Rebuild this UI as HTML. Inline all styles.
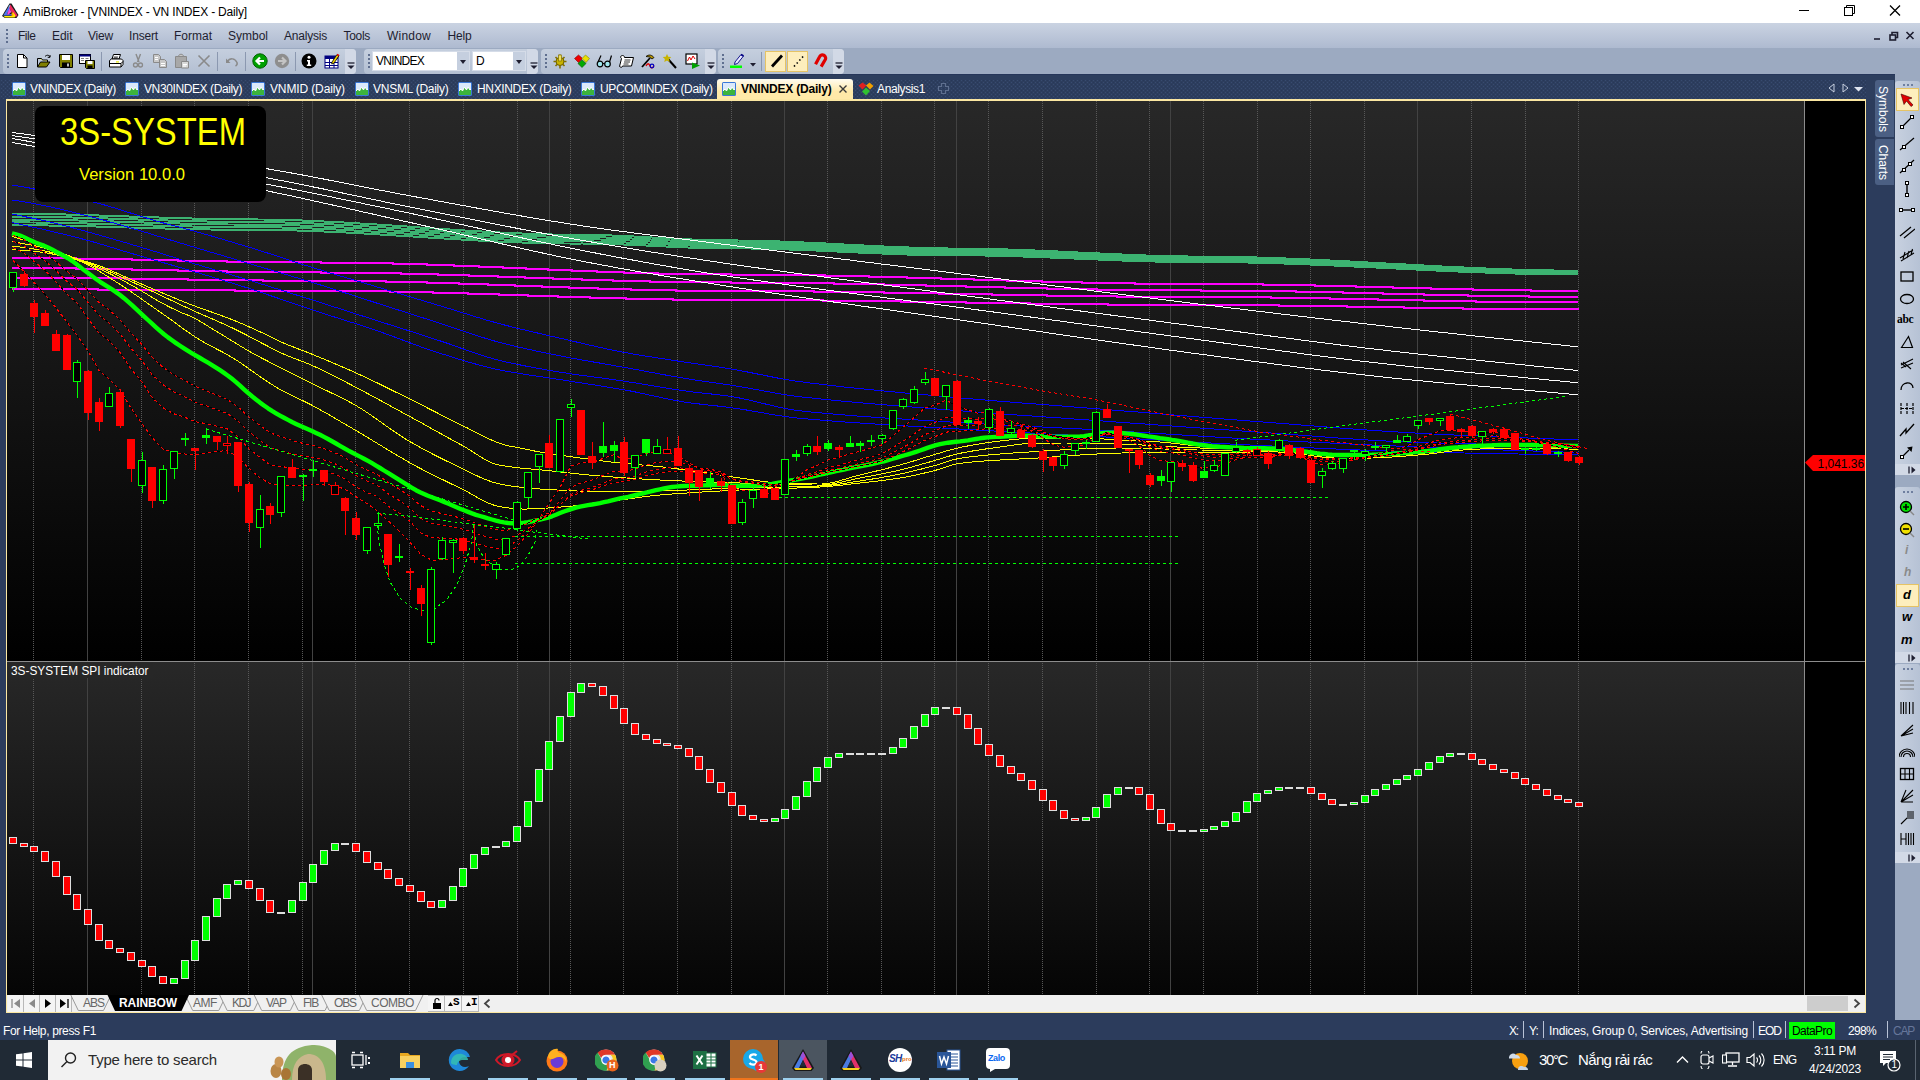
<!DOCTYPE html>
<html><head><meta charset="utf-8"><title>AmiBroker - [VNINDEX - VN INDEX - Daily]</title>
<style>
html,body{margin:0;padding:0}
body{width:1920px;height:1080px;overflow:hidden;position:relative;background:#2c3c5c;font-family:"Liberation Sans",sans-serif;font-size:12px;color:#000}
div,span,svg{position:absolute;box-sizing:border-box;white-space:nowrap}
#title{left:0;top:0;width:1920px;height:23px;background:#fff}
#menu{left:0;top:23px;width:1920px;height:25px;background:linear-gradient(#cad3e2,#aebad0)}
#menu span{color:#1e1e30}
#tbrow{left:0;top:48px;width:1920px;height:26px;background:#9caac1}
.tb{top:1px;height:25px;background:linear-gradient(#c5cfde,#b3bfd2);border-radius:4px}
.tb .opt{right:0;top:0;width:11px;height:25px;background:#d2d9e6;border-radius:0 4px 4px 0}
.grip{top:5px;width:2px;height:14px;background:repeating-linear-gradient(#5f6f8f 0 2px,transparent 2px 4px)}
.sep{top:3px;width:1px;height:19px;background:#8b98b0}
.combo{top:2px;height:20px;background:#fff;border:1px solid #d5dce8}
.combo i{position:absolute;right:0;top:0;width:12px;height:18px;background:#c5cfdf}
.combo i:after{content:"";position:absolute;left:3px;top:8px;border:3px solid transparent;border-top:4px solid #1e1e30}
.hl{top:2px;width:21px;height:21px;background:#fdeebd;border:1px solid #e5c365}
#tabs{left:0;top:74px;width:1895px;height:25px;background:#2d3e5e;border-top:1px solid #26365a}
#atab{left:717px;top:79px;width:136px;height:21px;background:linear-gradient(#fffcf0,#ffe9a8 60%);border-radius:3px 3px 0 0}
#frame{left:6px;top:99px;width:1860px;height:914px;background:#fbe7a2}
#sheet{left:7px;top:995px;width:1858px;height:17px;background:#f0f0f0}
#sheet .nb{top:0;height:17px;width:16px;border-right:1px solid #b8b8b8;background:#f4f4f4}
#status{left:0;top:1013px;width:1920px;height:27px;background:#2c3c5c;color:#fff;font-size:12px}
#status i{position:absolute;top:8px;width:1px;height:17px;background:#b8c2d6}
#task{left:0;top:1040px;width:1920px;height:40px;background:#202a35;color:#fff}
#task .ul{top:38px;height:2px;width:40px;background:#9ed0ee}
#rside{left:1895px;top:74px;width:25px;height:946px;background:#9caac1;z-index:2}
.vtb{left:0;width:25px;background:linear-gradient(90deg,#c8d1e0,#b6c2d5);border-radius:3px}
.vtab{left:1875px;width:19px;background:#4b5f83;border-radius:3px 0 0 3px}
.vtab span{transform:rotate(90deg);transform-origin:0 0;color:#fff;font-size:12px}
.hg{left:8px;width:10px;height:2px;background:repeating-linear-gradient(90deg,#6f7f9f 0 2px,transparent 2px 4px)}
.ov{left:0;width:25px;height:11px;background:#d2d9e6}
</style></head>
<body>
<div id="title"><svg style="left:1px;top:3px" width="18" height="16" viewBox="0 0 18 18" preserveAspectRatio="none"><path d="M8.500 0.500h2L17.500 13.500l-2 3.500h-11.500L1 14.500z" fill="#1a1a1a"/><path d="M9 1.800L2.200 14.200h9.300v-1.600h-5.800l4.300-8z" fill="#4f78f0"/><path d="M9 1.800l-1.500 2.800 1 .5z" fill="#a0f0ff"/><path d="M9.300 1.800l7.200 12-1.700 2.300L8.200 6z" fill="#f0285c"/><path d="M8.300 6.200l2.200 3.600-2.800 3h-1.700z" fill="#f848d8"/><path d="M2.600 14.600h9.400v-4.600l2.600 4.400-1 2h-9.400z" fill="#ffee00"/><path d="M10.600 9.400l1.800 2.800v2.400h-1.800z" fill="#ffa000"/></svg><span style="left:23px;top:5px;font-size:12px;letter-spacing:-0.184px">AmiBroker - [VNINDEX - VN INDEX - Daily]</span><svg style="left:1780px;top:0" width="140" height="23" viewBox="0 0 140 23" fill="none" stroke="#000" stroke-width="1"><path d="M19 10.500h10"/><rect x="64.500" y="7.500" width="8" height="8"/><path d="M66.500 7.500v-2h8v8h-2"/><path d="M110 5.500l10 10M120 5.500l-10 10" stroke-width="1.300"/></svg></div>
<div id="menu"><div class="grip" style="left:6px;top:6px;height:14px"></div>
<span style="left:18px;top:6px;font-size:12px;letter-spacing:-0.461px">File</span>
<span style="left:52px;top:6px;font-size:12px;letter-spacing:-0.047px">Edit</span>
<span style="left:88px;top:6px;font-size:12px;letter-spacing:-0.199px">View</span>
<span style="left:129px;top:6px;font-size:12px;letter-spacing:-0.169px">Insert</span>
<span style="left:174px;top:6px;font-size:12px;letter-spacing:-0.003px">Format</span>
<span style="left:228px;top:6px;font-size:12px;letter-spacing:-0.003px">Symbol</span>
<span style="left:284px;top:6px;font-size:12px;letter-spacing:-0.211px">Analysis</span>
<span style="left:343.5px;top:6px;font-size:12px;letter-spacing:-0.303px">Tools</span>
<span style="left:387px;top:6px;font-size:12px;letter-spacing:0.219px">Window</span>
<span style="left:447.5px;top:6px;font-size:12px;letter-spacing:-0.172px">Help</span>
<svg style="left:1868px;top:4px" width="50" height="18" viewBox="0 0 50 18" fill="none" stroke="#1e1e30" stroke-width="1.600"><path d="M6 12h6"/><rect x="22" y="8" width="5.500" height="5"/><path d="M24 8v-2.500h5.500v5h-2"/><path d="M38.500 5l7 7M45.500 5l-7 7"/></svg>
</div>
<div id="tbrow">
<div class="tb" style="left:3px;width:353px"><div class="grip" style="left:4px"></div>
<div class="sep" style="left:98px"></div>
<div class="sep" style="left:214px"></div>
<div class="sep" style="left:242px"></div>
<div class="sep" style="left:292px"></div>
<div class="opt"></div></div>
<div class="tb" style="left:364px;width:174px"><div class="grip" style="left:4px"></div><div class="combo" style="left:8px;width:98px"><span style="left:3px;top:2px;font-size:12px;letter-spacing:-0.763px">VNINDEX</span><i></i></div><div class="combo" style="left:108px;width:54px"><span style="left:3px;top:2px;font-size:12px;letter-spacing:-0.672px">D</span><i></i></div><div class="opt"></div></div>
<div class="tb" style="left:541px;width:175px"><div class="grip" style="left:4px"></div><div class="opt"></div></div>
<div class="tb" style="left:718px;width:126px"><div class="grip" style="left:4px"></div><div class="sep" style="left:43px"></div><div class="hl" style="left:47px"></div><div class="hl" style="left:69px"></div><div class="opt"></div></div>
<svg style="left:14px;top:5px" width="16" height="16" viewBox="0 0 16 16"><path d="M3.500 1.500h6l3.500 3.500v9.500h-9.500z" fill="#fff" stroke="#000"/><path d="M9.500 1.500v3.500h3.500" fill="none" stroke="#000"/></svg><svg style="left:36px;top:5px" width="16" height="16" viewBox="0 0 16 16"><path d="M1.500 5.500h4l1 1.500h5v2" fill="#ffff80" stroke="#000"/><path d="M1.500 5.500v8.500h9l3.500-5h-9.500l-3 5" fill="#808000" stroke="#000" stroke-linejoin="round"/><path d="M9 3.500c2-2 4-1.500 5 .5m0-2v2.300h-2.300" fill="none" stroke="#000"/></svg><svg style="left:58px;top:5px" width="16" height="16" viewBox="0 0 16 16"><path d="M1.500 1.500h13v13h-12l-1-1z" fill="#808000" stroke="#000"/><rect x="4" y="2" width="8" height="5" fill="#fff"/><rect x="4" y="9.500" width="8" height="5" fill="#000"/><rect x="9" y="10.500" width="2" height="3" fill="#c0c0c0"/></svg><svg style="left:79px;top:5px" width="16" height="16" viewBox="0 0 16 16"><rect x="0.500" y="1.500" width="11" height="9" fill="#fff" stroke="#000"/><rect x="0.500" y="1.500" width="11" height="2" fill="#000080"/><path d="M2 5.500h3M6.500 5.500h3M2 7.500h3" stroke="#808080"/><path d="M6.500 7.500h9v8h-8l-1-1z" fill="#808000" stroke="#000"/><rect x="8.500" y="8" width="5" height="3" fill="#fff"/><rect x="8.500" y="12.500" width="5" height="3" fill="#000"/></svg><svg style="left:108px;top:5px" width="16" height="16" viewBox="0 0 16 16"><path d="M4 6l1.500-4.500h7l-1.500 4.500z" fill="#fff" stroke="#000"/><path d="M1.500 7.500l2-1.500h10l1.500 1.500v4l-2 2.500h-11.500z" fill="#fff" stroke="#000"/><path d="M1.500 10.500h11.500l2-2M13 10.500v3.500" fill="none" stroke="#000"/><path d="M6 4h4M5.500 5h4" stroke="#000" stroke-width=".7"/><rect x="8" y="8.300" width="3" height="1.200" fill="#e8e800"/></svg><svg style="left:130px;top:5px" width="16" height="16" viewBox="0 0 16 16"><path d="M6 1l3 8M10.500 1l-3 8" stroke="#8a8a8a" stroke-width="1.400" fill="none"/><circle cx="5.500" cy="12" r="2" fill="none" stroke="#8a8a8a" stroke-width="1.300"/><circle cx="10.500" cy="12" r="2" fill="none" stroke="#8a8a8a" stroke-width="1.300"/></svg><svg style="left:152px;top:5px" width="16" height="16" viewBox="0 0 16 16"><path d="M1.500 1.500h5l2 2v6h-7z" fill="#c8c8c8" stroke="#8a8a8a"/><path d="M7.500 6.500h5l2 2v6h-7z" fill="#c8c8c8" stroke="#8a8a8a"/><path d="M3 4.500h3M3 6.500h3M9 10.500h4M9 12.500h4" stroke="#fff"/></svg><svg style="left:174px;top:5px" width="16" height="16" viewBox="0 0 16 16"><path d="M1.500 3.500h11v11h-11z" fill="#a8a8a8" stroke="#8a8a8a"/><path d="M4.500 3.500c0-3 5-3 5 0z" fill="#c8c8c8" stroke="#8a8a8a"/><path d="M7.500 8.500h7v6.500h-7z" fill="#d8d8d8" stroke="#8a8a8a"/><path d="M9 11.500h4M9 13h3" stroke="#fff"/></svg><svg style="left:196px;top:5px" width="16" height="16" viewBox="0 0 16 16"><path d="M2.500 2.500l11 11M13.500 2.500l-11 11" stroke="#8a8a8a" stroke-width="1.600" fill="none"/></svg><svg style="left:224px;top:5px" width="16" height="16" viewBox="0 0 16 16"><path d="M3 9c3-4.500 8-4 10 0.500c.5 1.500-.5 3-1.500 3.500" stroke="#8a8a8a" stroke-width="1.500" fill="none"/><path d="M2 5.500v4.500h4.500z" fill="#8a8a8a"/></svg><svg style="left:252px;top:5px" width="16" height="16" viewBox="0 0 16 16"><circle cx="8" cy="8" r="7.200" fill="#00a000" stroke="#006000"/><path d="M12 8h-7M8 4.500l-3.500 3.500 3.500 3.500" stroke="#fff" stroke-width="2.200" fill="none"/></svg><svg style="left:274px;top:5px" width="16" height="16" viewBox="0 0 16 16"><circle cx="8" cy="8" r="7.200" fill="#8e8e8e"/><path d="M4 8h7M8 4.500l3.500 3.500-3.500 3.500" stroke="#c4c4c4" stroke-width="2.200" fill="none"/></svg><svg style="left:301px;top:5px" width="16" height="16" viewBox="0 0 16 16"><circle cx="8" cy="8" r="7.500" fill="#000"/><circle cx="8" cy="4.300" r="1.500" fill="#fff"/><path d="M6 7h3v4.500h1.200v1.500h-4.400v-1.500h1.200v-3h-1z" fill="#fff"/></svg><svg style="left:324px;top:5px" width="16" height="16" viewBox="0 0 16 16"><rect x="1" y="3" width="13" height="12" fill="#fff" stroke="#000080"/><rect x="1" y="3" width="13" height="3" fill="#000080"/><path d="M1 9.500h13M1 12.500h13M5.500 6v9M10 6v9" stroke="#000080"/><path d="M8 9l5-7.500 2 1.200-5 7.500-2.300.8z" fill="#f0d000" stroke="#000" stroke-width=".8"/><path d="M13 1.500l2 1.200" stroke="#e00000" stroke-width="1.500"/></svg><svg style="left:346.5px;top:14px" width="8" height="8" viewBox="0 0 8 8"><path d="M0.500 1h7" stroke="#1e1e30" stroke-width="1.300"/><path d="M0.500 3.500h7l-3.500 3.500z" fill="#1e1e30"/></svg><svg style="left:529.5px;top:14px" width="8" height="8" viewBox="0 0 8 8"><path d="M0.500 1h7" stroke="#1e1e30" stroke-width="1.300"/><path d="M0.500 3.500h7l-3.500 3.500z" fill="#1e1e30"/></svg><svg style="left:706.5px;top:14px" width="8" height="8" viewBox="0 0 8 8"><path d="M0.500 1h7" stroke="#1e1e30" stroke-width="1.300"/><path d="M0.500 3.500h7l-3.500 3.500z" fill="#1e1e30"/></svg><svg style="left:834.5px;top:14px" width="8" height="8" viewBox="0 0 8 8"><path d="M0.500 1h7" stroke="#1e1e30" stroke-width="1.300"/><path d="M0.500 3.500h7l-3.500 3.500z" fill="#1e1e30"/></svg><svg style="left:552px;top:5px" width="16" height="16" viewBox="0 0 16 16"><circle cx="8" cy="8.500" r="4" fill="#c8b400" stroke="#6a5a00"/><path d="M8 1.500v3M8 12.500v3M1.500 8.500h3M11.500 8.500h3M3.500 4l2 2M12.500 4l-2 2M3.500 13l2-2M12.500 13l-2-2" stroke="#807000" stroke-width="1.600"/><rect x="6.500" y="2" width="3" height="6" fill="#f0e060" stroke="#807000" stroke-width=".7"/></svg><svg style="left:573.5px;top:5px" width="16" height="16" viewBox="0 0 16 16"><path d="M4.500 2l4 3.500-4 4-4-4z" fill="#f00000" stroke="#800000" stroke-width=".6"/><path d="M11.500 2l4 3.500-3.500 4-4-4z" fill="#e8e000" stroke="#808000" stroke-width=".6"/><path d="M8 7l4 3.500L8 14.500 4 10.500z" fill="#00a800" stroke="#005000" stroke-width=".6"/></svg><svg style="left:595.5px;top:5px" width="16" height="16" viewBox="0 0 16 16"><circle cx="4" cy="11" r="2.800" fill="#a0e8f0" stroke="#000" stroke-width="1.200"/><circle cx="11.500" cy="11" r="2.800" fill="#a0e8f0" stroke="#000" stroke-width="1.200"/><path d="M6.800 10.500h2M2 9l3-6.500M13.500 9l2-6.500" stroke="#000" stroke-width="1.200" fill="none"/></svg><svg style="left:618px;top:5px" width="16" height="16" viewBox="0 0 16 16"><path d="M4.500 2.500c-2 0-2.500 2-1 3l-2 8c2 1.500 3 .5 3-.5h9l2-8.500h-9c0-1.500-1-2-2-2z" fill="#fff" stroke="#000"/><path d="M6.500 7h6M6 9h6M5.500 11h5" stroke="#000" stroke-width=".8"/></svg><svg style="left:640px;top:5px" width="16" height="16" viewBox="0 0 16 16"><path d="M2 14l8-9" stroke="#000" stroke-width="1.800"/><path d="M6 3.500c3-2.500 6-1.500 8 1l-2 1.500-2.500-2z" fill="#b09000" stroke="#000" stroke-width=".8"/><path d="M6 13c1.500-3 3-3 4 0s3 2 4-.5" stroke="#e00000" stroke-width="1.300" fill="none"/><circle cx="12" cy="13" r="1.800" fill="none" stroke="#0000c0" stroke-width="1.200"/></svg><svg style="left:662px;top:5px" width="16" height="16" viewBox="0 0 16 16"><path d="M6 6l8 9" stroke="#000" stroke-width="2"/><path d="M5 1l1.300 2.700 3 .3-2.200 2 .6 3-2.700-1.500-2.700 1.500.6-3-2.200-2 3-.3z" fill="#c8b400"/></svg><svg style="left:684.5px;top:5px" width="16" height="16" viewBox="0 0 16 16"><rect x="1" y="1" width="11" height="10" fill="#fff" stroke="#000" stroke-width="1.200"/><path d="M2.500 8l2-4 1.500 3 2-4 2 3" stroke="#e00000" fill="none"/><path d="M7 9.500l8 3-8 3.500z" fill="#00a000"/></svg><svg style="left:729.5px;top:5px" width="16" height="16" viewBox="0 0 16 16"><path d="M5 9l6-7.500 2.500 1.500-6 7.500-3 1z" fill="#e8e8ff" stroke="#000080" stroke-width=".9"/><path d="M11 1.500l2.500 1.500" stroke="#000080" stroke-width="1.800"/><rect x="0" y="12.500" width="12" height="2.500" fill="#00ff00"/></svg><svg style="left:749.5px;top:15px" width="6" height="4" viewBox="0 0 6 4"><path d="M0 0h6l-3 3.500z" fill="#1e1e30"/></svg><svg style="left:768.5px;top:5px" width="16" height="16" viewBox="0 0 16 16"><path d="M3 13.500l10-11" stroke="#000" stroke-width="2.800"/></svg><svg style="left:790.5px;top:5px" width="16" height="16" viewBox="0 0 16 16"><path d="M3 13.500l10-11" stroke="#000" stroke-width="1.600" stroke-dasharray="1.500 2.500"/></svg><svg style="left:812.5px;top:5px" width="16" height="16" viewBox="0 0 16 16"><path d="M3.500 12.500l5.500-6.500a3.200 3.200 0 0 1 5 4l-5.500 6" fill="none" stroke="#e00000" stroke-width="3.200" transform="rotate(-12 8 8) translate(-1.500 -2.500)"/></svg>
</div>
<div id="tabs"><svg style="left:0;top:4px" width="1866" height="20" shape-rendering="crispEdges"><defs><pattern id="dp" width="4" height="4" patternUnits="userSpaceOnUse"><rect x="1" y="1" width="1" height="1" fill="#384b70"/><rect x="3" y="3" width="1" height="1" fill="#384b70"/><rect x="3" y="1" width="1" height="1" fill="#283859"/><rect x="1" y="3" width="1" height="1" fill="#283859"/></pattern></defs><rect width="1866" height="20" fill="url(#dp)"/></svg></div>
<div id="atab"></div>
<svg style="left:12px;top:82px" width="14" height="14" viewBox="0 0 14 14"><rect x="0" y="0" width="14" height="14" rx="1.500" fill="#3a78d8"/><rect x="1" y="1" width="12" height="8" fill="#dbe9fb"/><path d="M1 13V9l2-2 1.500 2 2-4 2 3 1.500-3 2 3 1-1v6z" fill="#3cb43c"/><path d="M1 9l2-2 1.500 2 2-4 2 3 1.500-3 2 3 1-1" fill="none" stroke="#fff" stroke-width="1"/></svg>
<span style="left:30px;top:82px;font-size:12px;color:#fff;letter-spacing:-0.356px">VNINDEX (Daily)</span>
<svg style="left:125px;top:82px" width="14" height="14" viewBox="0 0 14 14"><rect x="0" y="0" width="14" height="14" rx="1.500" fill="#3a78d8"/><rect x="1" y="1" width="12" height="8" fill="#dbe9fb"/><path d="M1 13V9l2-2 1.500 2 2-4 2 3 1.500-3 2 3 1-1v6z" fill="#3cb43c"/><path d="M1 9l2-2 1.500 2 2-4 2 3 1.500-3 2 3 1-1" fill="none" stroke="#fff" stroke-width="1"/></svg>
<span style="left:144px;top:82px;font-size:12px;color:#fff;letter-spacing:-0.394px">VN30INDEX (Daily)</span>
<svg style="left:251px;top:82px" width="14" height="14" viewBox="0 0 14 14"><rect x="0" y="0" width="14" height="14" rx="1.500" fill="#3a78d8"/><rect x="1" y="1" width="12" height="8" fill="#dbe9fb"/><path d="M1 13V9l2-2 1.500 2 2-4 2 3 1.500-3 2 3 1-1v6z" fill="#3cb43c"/><path d="M1 9l2-2 1.500 2 2-4 2 3 1.500-3 2 3 1-1" fill="none" stroke="#fff" stroke-width="1"/></svg>
<span style="left:270px;top:82px;font-size:12px;color:#fff;letter-spacing:-0.129px">VNMID (Daily)</span>
<svg style="left:355px;top:82px" width="14" height="14" viewBox="0 0 14 14"><rect x="0" y="0" width="14" height="14" rx="1.500" fill="#3a78d8"/><rect x="1" y="1" width="12" height="8" fill="#dbe9fb"/><path d="M1 13V9l2-2 1.500 2 2-4 2 3 1.500-3 2 3 1-1v6z" fill="#3cb43c"/><path d="M1 9l2-2 1.500 2 2-4 2 3 1.500-3 2 3 1-1" fill="none" stroke="#fff" stroke-width="1"/></svg>
<span style="left:373px;top:82px;font-size:12px;color:#fff;letter-spacing:-0.262px">VNSML (Daily)</span>
<svg style="left:458px;top:82px" width="14" height="14" viewBox="0 0 14 14"><rect x="0" y="0" width="14" height="14" rx="1.500" fill="#3a78d8"/><rect x="1" y="1" width="12" height="8" fill="#dbe9fb"/><path d="M1 13V9l2-2 1.500 2 2-4 2 3 1.500-3 2 3 1-1v6z" fill="#3cb43c"/><path d="M1 9l2-2 1.500 2 2-4 2 3 1.500-3 2 3 1-1" fill="none" stroke="#fff" stroke-width="1"/></svg>
<span style="left:477px;top:82px;font-size:12px;color:#fff;letter-spacing:-0.345px">HNXINDEX (Daily)</span>
<svg style="left:581px;top:82px" width="14" height="14" viewBox="0 0 14 14"><rect x="0" y="0" width="14" height="14" rx="1.500" fill="#3a78d8"/><rect x="1" y="1" width="12" height="8" fill="#dbe9fb"/><path d="M1 13V9l2-2 1.500 2 2-4 2 3 1.500-3 2 3 1-1v6z" fill="#3cb43c"/><path d="M1 9l2-2 1.500 2 2-4 2 3 1.500-3 2 3 1-1" fill="none" stroke="#fff" stroke-width="1"/></svg>
<span style="left:600px;top:82px;font-size:12px;color:#fff;letter-spacing:-0.38px">UPCOMINDEX (Daily)</span>
<svg style="left:722px;top:82px" width="14" height="14" viewBox="0 0 14 14"><rect x="0" y="0" width="14" height="14" rx="1.500" fill="#3a78d8"/><rect x="1" y="1" width="12" height="8" fill="#dbe9fb"/><path d="M1 13V9l2-2 1.500 2 2-4 2 3 1.500-3 2 3 1-1v6z" fill="#3cb43c"/><path d="M1 9l2-2 1.500 2 2-4 2 3 1.500-3 2 3 1-1" fill="none" stroke="#fff" stroke-width="1"/></svg>
<span style="left:741px;top:82px;font-size:12px;font-weight:700;color:#000;letter-spacing:-0.191px">VNINDEX (Daily)</span>
<svg style="left:838px;top:84px" width="10" height="10" viewBox="0 0 10 10"><path d="M1.500 1.500l7 7M8.500 1.500l-7 7" stroke="#3a3a3a" stroke-width="1.400" fill="none"/></svg>
<svg style="left:858px;top:82px" width="16" height="14" viewBox="0 0 16 14"><path d="M4.500 0.500l4 3-4 4-4-4z" fill="#e02020"/><path d="M11.500 0.500l4 3.500-3.500 3.500-4-4z" fill="#f0a000"/><path d="M8 5.500l4 3.500-4 4.500-4-4z" fill="#30c030"/></svg>
<span style="left:877px;top:82px;font-size:12px;color:#fff;letter-spacing:-0.373px">Analysis1</span>
<svg style="left:937px;top:82px" width="13" height="13" viewBox="0 0 13 13"><path d="M4.500 1.500h4v3h3v4h-3v3h-4v-3h-3v-4h3z" fill="none" stroke="#5e6f8f" stroke-width="1.200"/></svg>
<svg style="left:1826px;top:82px" width="40" height="12" viewBox="0 0 40 12"><path d="M8 2v8L3 6z" fill="none" stroke="#c8d0e0"/><path d="M17 2v8l5-4z" fill="none" stroke="#c8d0e0"/><path d="M28 5h9l-4.500 4.500z" fill="#dfe5f0"/></svg>
<div id="frame"></div>
<svg style="left:7px;top:101px" width="1858" height="894" viewBox="7 101 1858 894" font-family="Liberation Sans, sans-serif"><defs><linearGradient id="g1" x1="0" y1="0" x2="0" y2="1"><stop offset="0" stop-color="#282828"/><stop offset="1" stop-color="#000"/></linearGradient><linearGradient id="g2" x1="0" y1="0" x2="0" y2="1"><stop offset="0" stop-color="#282828"/><stop offset="1" stop-color="#050505"/></linearGradient></defs>
<rect x="7" y="101" width="1858" height="894" fill="#000"/>
<rect x="7" y="101" width="1797" height="560" fill="url(#g1)"/>
<rect x="7" y="662" width="1797" height="333" fill="url(#g2)"/>
<g shape-rendering="crispEdges"><line x1="33.5" y1="101" x2="33.5" y2="995" stroke="#585858" stroke-dasharray="1,1"/><line x1="141.5" y1="101" x2="141.5" y2="995" stroke="#585858" stroke-dasharray="1,1"/><line x1="194.5" y1="101" x2="194.5" y2="995" stroke="#585858" stroke-dasharray="1,1"/><line x1="248.5" y1="101" x2="248.5" y2="995" stroke="#585858" stroke-dasharray="1,1"/><line x1="302.5" y1="101" x2="302.5" y2="995" stroke="#585858" stroke-dasharray="1,1"/><line x1="355.5" y1="101" x2="355.5" y2="995" stroke="#585858" stroke-dasharray="1,1"/><line x1="409.5" y1="101" x2="409.5" y2="995" stroke="#585858" stroke-dasharray="1,1"/><line x1="463.5" y1="101" x2="463.5" y2="995" stroke="#585858" stroke-dasharray="1,1"/><line x1="517.5" y1="101" x2="517.5" y2="995" stroke="#585858" stroke-dasharray="1,1"/><line x1="570.5" y1="101" x2="570.5" y2="995" stroke="#585858" stroke-dasharray="1,1"/><line x1="623.5" y1="101" x2="623.5" y2="995" stroke="#585858" stroke-dasharray="1,1"/><line x1="677.5" y1="101" x2="677.5" y2="995" stroke="#585858" stroke-dasharray="1,1"/><line x1="731.5" y1="101" x2="731.5" y2="995" stroke="#585858" stroke-dasharray="1,1"/><line x1="827.5" y1="101" x2="827.5" y2="995" stroke="#585858" stroke-dasharray="1,1"/><line x1="881.5" y1="101" x2="881.5" y2="995" stroke="#585858" stroke-dasharray="1,1"/><line x1="934.5" y1="101" x2="934.5" y2="995" stroke="#585858" stroke-dasharray="1,1"/><line x1="988.5" y1="101" x2="988.5" y2="995" stroke="#585858" stroke-dasharray="1,1"/><line x1="1042.5" y1="101" x2="1042.5" y2="995" stroke="#585858" stroke-dasharray="1,1"/><line x1="1096.5" y1="101" x2="1096.5" y2="995" stroke="#585858" stroke-dasharray="1,1"/><line x1="1149.5" y1="101" x2="1149.5" y2="995" stroke="#585858" stroke-dasharray="1,1"/><line x1="1203.5" y1="101" x2="1203.5" y2="995" stroke="#585858" stroke-dasharray="1,1"/><line x1="1257.5" y1="101" x2="1257.5" y2="995" stroke="#585858" stroke-dasharray="1,1"/><line x1="1310.5" y1="101" x2="1310.5" y2="995" stroke="#585858" stroke-dasharray="1,1"/><line x1="1364.5" y1="101" x2="1364.5" y2="995" stroke="#585858" stroke-dasharray="1,1"/><line x1="1471.5" y1="101" x2="1471.5" y2="995" stroke="#585858" stroke-dasharray="1,1"/><line x1="1525.5" y1="101" x2="1525.5" y2="995" stroke="#585858" stroke-dasharray="1,1"/><line x1="1578.5" y1="101" x2="1578.5" y2="995" stroke="#585858" stroke-dasharray="1,1"/><line x1="87.5" y1="101" x2="87.5" y2="995" stroke="#424242"/><line x1="312.5" y1="101" x2="312.5" y2="995" stroke="#424242"/><line x1="549.5" y1="101" x2="549.5" y2="995" stroke="#424242"/><line x1="784.5" y1="101" x2="784.5" y2="995" stroke="#424242"/><line x1="956.5" y1="101" x2="956.5" y2="995" stroke="#424242"/><line x1="1170.5" y1="101" x2="1170.5" y2="995" stroke="#424242"/><line x1="1417.5" y1="101" x2="1417.5" y2="995" stroke="#424242"/></g>
<g shape-rendering="crispEdges" fill="none">
<polyline points="12.0,213.7 18.0,213.7 24.0,213.8 30.0,213.8 36.0,213.9 42.0,214.0 48.0,214.1 54.0,214.2 60.0,214.4 66.0,214.5 72.0,214.7 78.0,214.8 84.0,215.0 90.0,215.2 96.0,215.4 102.0,215.6 108.0,215.8 114.0,216.0 120.0,216.2 126.0,216.4 132.0,216.6 138.0,216.8 144.0,217.0 150.0,217.2 156.0,217.4 162.0,217.6 168.0,217.8 174.0,218.0 180.0,218.2 186.0,218.3 192.0,218.5 198.0,218.7 204.0,218.8 210.0,218.9 216.0,219.0 222.0,219.1 228.0,219.2 234.0,219.3 240.0,219.4 246.0,219.4 252.0,219.4 258.0,219.5 264.0,219.5 270.0,219.6 276.0,219.7 282.0,219.9 288.0,220.0 294.0,220.2 300.0,220.4 306.0,220.7 312.0,220.9 318.0,221.2 324.0,221.5 330.0,221.8 336.0,222.1 342.0,222.4 348.0,222.8 354.0,223.1 360.0,223.5 366.0,223.8 372.0,224.2 378.0,224.6 384.0,225.0 390.0,225.4 396.0,225.8 402.0,226.2 408.0,226.6 414.0,227.1 420.0,227.5 426.0,227.9 432.0,228.3 438.0,228.7 444.0,229.1 450.0,229.5 456.0,229.9 462.0,230.3 468.0,230.7 474.0,231.0 480.0,231.4 486.0,231.7 492.0,232.1 498.0,232.4 504.0,232.7 510.0,233.0 516.0,233.3 522.0,233.5 528.0,233.7 534.0,234.0 540.0,234.2 546.0,234.3 552.0,234.5 558.0,234.6 564.0,234.7 570.0,234.8 576.0,234.8 582.0,234.9 588.0,234.9 594.0,235.0 600.0,235.2 606.0,235.3 612.0,235.5 618.0,235.8 624.0,236.0 630.0,236.3 636.0,236.6 642.0,236.9 648.0,237.3 654.0,237.6 660.0,237.9 666.0,238.2 672.0,238.6 678.0,238.9 684.0,239.1 690.0,239.4 696.0,239.7 702.0,239.9 708.0,240.1 714.0,240.2 720.0,240.3 726.0,240.4 732.0,240.4 738.0,240.5 744.0,240.6 750.0,240.6 756.0,240.8 762.0,240.9 768.0,241.1 774.0,241.3 780.0,241.5 786.0,241.7 792.0,242.0 798.0,242.2 804.0,242.5 810.0,242.8 816.0,243.0 822.0,243.3 828.0,243.6 834.0,244.0 840.0,244.3 846.0,244.6 852.0,244.9 858.0,245.2 864.0,245.5 870.0,245.8 876.0,246.1 882.0,246.4 888.0,246.7 894.0,246.9 900.0,247.2 906.0,247.4 912.0,247.6 918.0,247.8 924.0,248.0 930.0,248.2 936.0,248.3 942.0,248.4 948.0,248.5 954.0,248.6 960.0,248.6 966.0,248.7 972.0,248.7 978.0,248.8 984.0,248.9 990.0,249.0 996.0,249.2 1002.0,249.3 1008.0,249.5 1014.0,249.7 1020.0,249.9 1026.0,250.1 1032.0,250.4 1038.0,250.6 1044.0,250.9 1050.0,251.2 1056.0,251.4 1062.0,251.7 1068.0,252.0 1074.0,252.3 1080.0,252.6 1086.0,252.9 1092.0,253.2 1098.0,253.4 1104.0,253.7 1110.0,254.0 1116.0,254.3 1122.0,254.5 1128.0,254.8 1134.0,255.0 1140.0,255.2 1146.0,255.5 1152.0,255.7 1158.0,255.8 1164.0,256.0 1170.0,256.1 1176.0,256.3 1182.0,256.4 1188.0,256.5 1194.0,256.5 1200.0,256.5 1206.0,256.6 1212.0,256.6 1218.0,256.7 1224.0,256.7 1230.0,256.8 1236.0,257.0 1242.0,257.1 1248.0,257.2 1254.0,257.4 1260.0,257.6 1266.0,257.8 1272.0,258.0 1278.0,258.2 1284.0,258.4 1290.0,258.7 1296.0,258.9 1302.0,259.2 1308.0,259.4 1314.0,259.7 1320.0,260.0 1326.0,260.3 1332.0,260.6 1338.0,260.9 1344.0,261.2 1350.0,261.5 1356.0,261.8 1362.0,262.1 1368.0,262.5 1374.0,262.8 1380.0,263.1 1386.0,263.5 1392.0,263.8 1398.0,264.1 1404.0,264.4 1410.0,264.8 1416.0,265.1 1422.0,265.4 1428.0,265.7 1434.0,266.0 1440.0,266.4 1446.0,266.7 1452.0,267.0 1458.0,267.2 1464.0,267.5 1470.0,267.8 1476.0,268.1 1482.0,268.3 1488.0,268.6 1494.0,268.8 1500.0,269.0 1506.0,269.3 1512.0,269.5 1518.0,269.7 1524.0,269.8 1530.0,270.0 1536.0,270.1 1542.0,270.3 1548.0,270.4 1554.0,270.5 1560.0,270.6 1566.0,270.6 1572.0,270.7 1578.0,270.7" fill="none" stroke="#3cb371" stroke-width="2"/>
<polyline points="12.0,216.6 18.0,216.6 24.0,216.7 30.0,216.7 36.0,216.8 42.0,216.9 48.0,217.0 54.0,217.1 60.0,217.2 66.0,217.3 72.0,217.5 78.0,217.6 84.0,217.8 90.0,218.0 96.0,218.2 102.0,218.4 108.0,218.5 114.0,218.7 120.0,218.9 126.0,219.1 132.0,219.3 138.0,219.5 144.0,219.7 150.0,219.9 156.0,220.1 162.0,220.3 168.0,220.5 174.0,220.7 180.0,220.9 186.0,221.0 192.0,221.2 198.0,221.3 204.0,221.4 210.0,221.6 216.0,221.7 222.0,221.8 228.0,221.9 234.0,221.9 240.0,222.0 246.0,222.0 252.0,222.0 258.0,222.0 264.0,222.1 270.0,222.2 276.0,222.3 282.0,222.4 288.0,222.6 294.0,222.8 300.0,223.0 306.0,223.2 312.0,223.4 318.0,223.7 324.0,224.0 330.0,224.3 336.0,224.6 342.0,224.9 348.0,225.2 354.0,225.6 360.0,225.9 366.0,226.3 372.0,226.7 378.0,227.1 384.0,227.4 390.0,227.8 396.0,228.2 402.0,228.6 408.0,229.0 414.0,229.4 420.0,229.9 426.0,230.3 432.0,230.7 438.0,231.1 444.0,231.5 450.0,231.8 456.0,232.2 462.0,232.6 468.0,233.0 474.0,233.3 480.0,233.7 486.0,234.0 492.0,234.4 498.0,234.7 504.0,235.0 510.0,235.2 516.0,235.5 522.0,235.8 528.0,236.0 534.0,236.2 540.0,236.4 546.0,236.5 552.0,236.7 558.0,236.8 564.0,236.9 570.0,237.0 576.0,237.0 582.0,237.0 588.0,237.1 594.0,237.2 600.0,237.3 606.0,237.5 612.0,237.7 618.0,237.9 624.0,238.2 630.0,238.4 636.0,238.7 642.0,239.0 648.0,239.3 654.0,239.7 660.0,240.0 666.0,240.3 672.0,240.6 678.0,240.9 684.0,241.2 690.0,241.5 696.0,241.7 702.0,241.9 708.0,242.1 714.0,242.2 720.0,242.3 726.0,242.4 732.0,242.4 738.0,242.5 744.0,242.5 750.0,242.6 756.0,242.7 762.0,242.9 768.0,243.0 774.0,243.2 780.0,243.4 786.0,243.6 792.0,243.9 798.0,244.1 804.0,244.4 810.0,244.6 816.0,244.9 822.0,245.2 828.0,245.5 834.0,245.8 840.0,246.1 846.0,246.4 852.0,246.7 858.0,247.0 864.0,247.3 870.0,247.6 876.0,247.9 882.0,248.2 888.0,248.5 894.0,248.7 900.0,249.0 906.0,249.2 912.0,249.4 918.0,249.6 924.0,249.8 930.0,249.9 936.0,250.0 942.0,250.2 948.0,250.2 954.0,250.3 960.0,250.3 966.0,250.3 972.0,250.4 978.0,250.5 984.0,250.5 990.0,250.7 996.0,250.8 1002.0,251.0 1008.0,251.1 1014.0,251.3 1020.0,251.5 1026.0,251.7 1032.0,252.0 1038.0,252.2 1044.0,252.5 1050.0,252.7 1056.0,253.0 1062.0,253.3 1068.0,253.6 1074.0,253.8 1080.0,254.1 1086.0,254.4 1092.0,254.7 1098.0,255.0 1104.0,255.2 1110.0,255.5 1116.0,255.8 1122.0,256.0 1128.0,256.2 1134.0,256.5 1140.0,256.7 1146.0,256.9 1152.0,257.1 1158.0,257.3 1164.0,257.4 1170.0,257.6 1176.0,257.7 1182.0,257.8 1188.0,257.8 1194.0,257.9 1200.0,257.9 1206.0,257.9 1212.0,258.0 1218.0,258.0 1224.0,258.1 1230.0,258.2 1236.0,258.3 1242.0,258.4 1248.0,258.6 1254.0,258.7 1260.0,258.9 1266.0,259.1 1272.0,259.3 1278.0,259.5 1284.0,259.7 1290.0,259.9 1296.0,260.2 1302.0,260.4 1308.0,260.7 1314.0,260.9 1320.0,261.2 1326.0,261.5 1332.0,261.8 1338.0,262.1 1344.0,262.4 1350.0,262.7 1356.0,263.0 1362.0,263.3 1368.0,263.6 1374.0,264.0 1380.0,264.3 1386.0,264.6 1392.0,264.9 1398.0,265.2 1404.0,265.6 1410.0,265.9 1416.0,266.2 1422.0,266.5 1428.0,266.8 1434.0,267.1 1440.0,267.4 1446.0,267.7 1452.0,268.0 1458.0,268.3 1464.0,268.6 1470.0,268.8 1476.0,269.1 1482.0,269.4 1488.0,269.6 1494.0,269.8 1500.0,270.0 1506.0,270.3 1512.0,270.4 1518.0,270.6 1524.0,270.8 1530.0,271.0 1536.0,271.1 1542.0,271.2 1548.0,271.3 1554.0,271.4 1560.0,271.5 1566.0,271.5 1572.0,271.6 1578.0,271.6" fill="none" stroke="#3cb371" stroke-width="2"/>
<polyline points="12.0,219.5 18.0,219.5 24.0,219.5 30.0,219.6 36.0,219.6 42.0,219.7 48.0,219.8 54.0,219.9 60.0,220.0 66.0,220.2 72.0,220.3 78.0,220.5 84.0,220.6 90.0,220.8 96.0,221.0 102.0,221.1 108.0,221.3 114.0,221.5 120.0,221.7 126.0,221.9 132.0,222.1 138.0,222.3 144.0,222.5 150.0,222.7 156.0,222.8 162.0,223.0 168.0,223.2 174.0,223.4 180.0,223.5 186.0,223.7 192.0,223.8 198.0,224.0 204.0,224.1 210.0,224.2 216.0,224.3 222.0,224.4 228.0,224.5 234.0,224.5 240.0,224.6 246.0,224.6 252.0,224.6 258.0,224.6 264.0,224.7 270.0,224.8 276.0,224.9 282.0,225.0 288.0,225.1 294.0,225.3 300.0,225.5 306.0,225.7 312.0,226.0 318.0,226.2 324.0,226.5 330.0,226.8 336.0,227.1 342.0,227.4 348.0,227.7 354.0,228.0 360.0,228.4 366.0,228.7 372.0,229.1 378.0,229.5 384.0,229.9 390.0,230.3 396.0,230.6 402.0,231.0 408.0,231.4 414.0,231.8 420.0,232.2 426.0,232.6 432.0,233.0 438.0,233.4 444.0,233.8 450.0,234.2 456.0,234.6 462.0,234.9 468.0,235.3 474.0,235.6 480.0,236.0 486.0,236.3 492.0,236.6 498.0,236.9 504.0,237.2 510.0,237.5 516.0,237.8 522.0,238.0 528.0,238.2 534.0,238.4 540.0,238.6 546.0,238.8 552.0,238.9 558.0,239.0 564.0,239.1 570.0,239.2 576.0,239.2 582.0,239.2 588.0,239.2 594.0,239.3 600.0,239.5 606.0,239.6 612.0,239.8 618.0,240.0 624.0,240.3 630.0,240.5 636.0,240.8 642.0,241.1 648.0,241.4 654.0,241.7 660.0,242.1 666.0,242.4 672.0,242.7 678.0,243.0 684.0,243.2 690.0,243.5 696.0,243.7 702.0,243.9 708.0,244.1 714.0,244.2 720.0,244.3 726.0,244.4 732.0,244.4 738.0,244.4 744.0,244.5 750.0,244.6 756.0,244.7 762.0,244.8 768.0,245.0 774.0,245.1 780.0,245.3 786.0,245.5 792.0,245.8 798.0,246.0 804.0,246.3 810.0,246.5 816.0,246.8 822.0,247.1 828.0,247.4 834.0,247.7 840.0,248.0 846.0,248.2 852.0,248.5 858.0,248.8 864.0,249.1 870.0,249.4 876.0,249.7 882.0,250.0 888.0,250.2 894.0,250.5 900.0,250.7 906.0,250.9 912.0,251.1 918.0,251.3 924.0,251.5 930.0,251.6 936.0,251.8 942.0,251.9 948.0,251.9 954.0,252.0 960.0,252.0 966.0,252.0 972.0,252.1 978.0,252.1 984.0,252.2 990.0,252.3 996.0,252.4 1002.0,252.6 1008.0,252.8 1014.0,252.9 1020.0,253.1 1026.0,253.4 1032.0,253.6 1038.0,253.8 1044.0,254.1 1050.0,254.3 1056.0,254.6 1062.0,254.8 1068.0,255.1 1074.0,255.4 1080.0,255.7 1086.0,255.9 1092.0,256.2 1098.0,256.5 1104.0,256.7 1110.0,257.0 1116.0,257.2 1122.0,257.5 1128.0,257.7 1134.0,257.9 1140.0,258.2 1146.0,258.4 1152.0,258.5 1158.0,258.7 1164.0,258.9 1170.0,259.0 1176.0,259.1 1182.0,259.2 1188.0,259.2 1194.0,259.3 1200.0,259.3 1206.0,259.3 1212.0,259.3 1218.0,259.4 1224.0,259.5 1230.0,259.5 1236.0,259.6 1242.0,259.8 1248.0,259.9 1254.0,260.0 1260.0,260.2 1266.0,260.4 1272.0,260.6 1278.0,260.8 1284.0,261.0 1290.0,261.2 1296.0,261.4 1302.0,261.7 1308.0,261.9 1314.0,262.2 1320.0,262.4 1326.0,262.7 1332.0,263.0 1338.0,263.3 1344.0,263.6 1350.0,263.9 1356.0,264.2 1362.0,264.5 1368.0,264.8 1374.0,265.1 1380.0,265.4 1386.0,265.7 1392.0,266.1 1398.0,266.4 1404.0,266.7 1410.0,267.0 1416.0,267.3 1422.0,267.6 1428.0,267.9 1434.0,268.2 1440.0,268.5 1446.0,268.8 1452.0,269.1 1458.0,269.4 1464.0,269.6 1470.0,269.9 1476.0,270.1 1482.0,270.4 1488.0,270.6 1494.0,270.8 1500.0,271.0 1506.0,271.2 1512.0,271.4 1518.0,271.6 1524.0,271.8 1530.0,271.9 1536.0,272.0 1542.0,272.2 1548.0,272.3 1554.0,272.3 1560.0,272.4 1566.0,272.5 1572.0,272.5 1578.0,272.5" fill="none" stroke="#3cb371" stroke-width="2"/>
<polyline points="12.0,222.4 18.0,222.4 24.0,222.4 30.0,222.5 36.0,222.5 42.0,222.6 48.0,222.7 54.0,222.8 60.0,222.9 66.0,223.0 72.0,223.1 78.0,223.3 84.0,223.4 90.0,223.6 96.0,223.8 102.0,223.9 108.0,224.1 114.0,224.3 120.0,224.5 126.0,224.6 132.0,224.8 138.0,225.0 144.0,225.2 150.0,225.4 156.0,225.6 162.0,225.7 168.0,225.9 174.0,226.1 180.0,226.2 186.0,226.4 192.0,226.5 198.0,226.6 204.0,226.8 210.0,226.9 216.0,227.0 222.0,227.0 228.0,227.1 234.0,227.2 240.0,227.2 246.0,227.2 252.0,227.2 258.0,227.2 264.0,227.3 270.0,227.3 276.0,227.4 282.0,227.5 288.0,227.7 294.0,227.8 300.0,228.0 306.0,228.2 312.0,228.5 318.0,228.7 324.0,229.0 330.0,229.3 336.0,229.5 342.0,229.9 348.0,230.2 354.0,230.5 360.0,230.8 366.0,231.2 372.0,231.6 378.0,231.9 384.0,232.3 390.0,232.7 396.0,233.1 402.0,233.4 408.0,233.8 414.0,234.2 420.0,234.6 426.0,235.0 432.0,235.4 438.0,235.8 444.0,236.2 450.0,236.5 456.0,236.9 462.0,237.3 468.0,237.6 474.0,238.0 480.0,238.3 486.0,238.6 492.0,238.9 498.0,239.2 504.0,239.5 510.0,239.8 516.0,240.0 522.0,240.3 528.0,240.5 534.0,240.7 540.0,240.8 546.0,241.0 552.0,241.1 558.0,241.2 564.0,241.3 570.0,241.3 576.0,241.4 582.0,241.4 588.0,241.4 594.0,241.5 600.0,241.6 606.0,241.8 612.0,241.9 618.0,242.2 624.0,242.4 630.0,242.7 636.0,242.9 642.0,243.2 648.0,243.5 654.0,243.8 660.0,244.1 666.0,244.4 672.0,244.7 678.0,245.0 684.0,245.3 690.0,245.5 696.0,245.7 702.0,245.9 708.0,246.1 714.0,246.2 720.0,246.3 726.0,246.4 732.0,246.4 738.0,246.4 744.0,246.4 750.0,246.5 756.0,246.6 762.0,246.7 768.0,246.9 774.0,247.1 780.0,247.2 786.0,247.4 792.0,247.7 798.0,247.9 804.0,248.1 810.0,248.4 816.0,248.7 822.0,248.9 828.0,249.2 834.0,249.5 840.0,249.8 846.0,250.1 852.0,250.4 858.0,250.7 864.0,250.9 870.0,251.2 876.0,251.5 882.0,251.8 888.0,252.0 894.0,252.3 900.0,252.5 906.0,252.7 912.0,252.9 918.0,253.1 924.0,253.2 930.0,253.4 936.0,253.5 942.0,253.6 948.0,253.6 954.0,253.7 960.0,253.7 966.0,253.7 972.0,253.7 978.0,253.8 984.0,253.9 990.0,254.0 996.0,254.1 1002.0,254.2 1008.0,254.4 1014.0,254.6 1020.0,254.8 1026.0,255.0 1032.0,255.2 1038.0,255.4 1044.0,255.6 1050.0,255.9 1056.0,256.1 1062.0,256.4 1068.0,256.7 1074.0,256.9 1080.0,257.2 1086.0,257.5 1092.0,257.7 1098.0,258.0 1104.0,258.2 1110.0,258.5 1116.0,258.7 1122.0,259.0 1128.0,259.2 1134.0,259.4 1140.0,259.6 1146.0,259.8 1152.0,260.0 1158.0,260.1 1164.0,260.3 1170.0,260.4 1176.0,260.5 1182.0,260.6 1188.0,260.6 1194.0,260.7 1200.0,260.7 1206.0,260.7 1212.0,260.7 1218.0,260.7 1224.0,260.8 1230.0,260.9 1236.0,261.0 1242.0,261.1 1248.0,261.2 1254.0,261.3 1260.0,261.5 1266.0,261.7 1272.0,261.8 1278.0,262.0 1284.0,262.2 1290.0,262.5 1296.0,262.7 1302.0,262.9 1308.0,263.2 1314.0,263.4 1320.0,263.7 1326.0,263.9 1332.0,264.2 1338.0,264.5 1344.0,264.8 1350.0,265.1 1356.0,265.4 1362.0,265.7 1368.0,266.0 1374.0,266.3 1380.0,266.6 1386.0,266.9 1392.0,267.2 1398.0,267.5 1404.0,267.8 1410.0,268.1 1416.0,268.4 1422.0,268.7 1428.0,269.0 1434.0,269.3 1440.0,269.6 1446.0,269.9 1452.0,270.1 1458.0,270.4 1464.0,270.7 1470.0,270.9 1476.0,271.2 1482.0,271.4 1488.0,271.6 1494.0,271.8 1500.0,272.0 1506.0,272.2 1512.0,272.4 1518.0,272.6 1524.0,272.7 1530.0,272.9 1536.0,273.0 1542.0,273.1 1548.0,273.2 1554.0,273.3 1560.0,273.3 1566.0,273.4 1572.0,273.4 1578.0,273.4" fill="none" stroke="#3cb371" stroke-width="2"/>
<polyline points="12.0,225.3 18.0,225.3 24.0,225.3 30.0,225.3 36.0,225.4 42.0,225.4 48.0,225.5 54.0,225.6 60.0,225.7 66.0,225.8 72.0,226.0 78.0,226.1 84.0,226.2 90.0,226.4 96.0,226.5 102.0,226.7 108.0,226.9 114.0,227.0 120.0,227.2 126.0,227.4 132.0,227.6 138.0,227.8 144.0,227.9 150.0,228.1 156.0,228.3 162.0,228.4 168.0,228.6 174.0,228.8 180.0,228.9 186.0,229.0 192.0,229.2 198.0,229.3 204.0,229.4 210.0,229.5 216.0,229.6 222.0,229.7 228.0,229.7 234.0,229.8 240.0,229.8 246.0,229.8 252.0,229.8 258.0,229.8 264.0,229.8 270.0,229.9 276.0,230.0 282.0,230.1 288.0,230.2 294.0,230.4 300.0,230.6 306.0,230.8 312.0,231.0 318.0,231.2 324.0,231.5 330.0,231.7 336.0,232.0 342.0,232.3 348.0,232.6 354.0,233.0 360.0,233.3 366.0,233.6 372.0,234.0 378.0,234.4 384.0,234.7 390.0,235.1 396.0,235.5 402.0,235.8 408.0,236.2 414.0,236.6 420.0,237.0 426.0,237.4 432.0,237.8 438.0,238.1 444.0,238.5 450.0,238.9 456.0,239.2 462.0,239.6 468.0,239.9 474.0,240.3 480.0,240.6 486.0,240.9 492.0,241.2 498.0,241.5 504.0,241.8 510.0,242.0 516.0,242.3 522.0,242.5 528.0,242.7 534.0,242.9 540.0,243.1 546.0,243.2 552.0,243.3 558.0,243.4 564.0,243.5 570.0,243.5 576.0,243.6 582.0,243.5 588.0,243.6 594.0,243.6 600.0,243.8 606.0,243.9 612.0,244.1 618.0,244.3 624.0,244.5 630.0,244.8 636.0,245.0 642.0,245.3 648.0,245.6 654.0,245.9 660.0,246.2 666.0,246.5 672.0,246.8 678.0,247.1 684.0,247.3 690.0,247.6 696.0,247.8 702.0,248.0 708.0,248.1 714.0,248.2 720.0,248.3 726.0,248.4 732.0,248.4 738.0,248.4 744.0,248.4 750.0,248.5 756.0,248.6 762.0,248.7 768.0,248.8 774.0,249.0 780.0,249.2 786.0,249.4 792.0,249.6 798.0,249.8 804.0,250.0 810.0,250.3 816.0,250.5 822.0,250.8 828.0,251.1 834.0,251.4 840.0,251.6 846.0,251.9 852.0,252.2 858.0,252.5 864.0,252.8 870.0,253.0 876.0,253.3 882.0,253.5 888.0,253.8 894.0,254.0 900.0,254.3 906.0,254.5 912.0,254.6 918.0,254.8 924.0,255.0 930.0,255.1 936.0,255.2 942.0,255.3 948.0,255.3 954.0,255.4 960.0,255.4 966.0,255.4 972.0,255.4 978.0,255.4 984.0,255.5 990.0,255.6 996.0,255.7 1002.0,255.9 1008.0,256.0 1014.0,256.2 1020.0,256.4 1026.0,256.6 1032.0,256.8 1038.0,257.0 1044.0,257.2 1050.0,257.5 1056.0,257.7 1062.0,258.0 1068.0,258.2 1074.0,258.5 1080.0,258.7 1086.0,259.0 1092.0,259.2 1098.0,259.5 1104.0,259.7 1110.0,260.0 1116.0,260.2 1122.0,260.5 1128.0,260.7 1134.0,260.9 1140.0,261.1 1146.0,261.3 1152.0,261.4 1158.0,261.6 1164.0,261.7 1170.0,261.8 1176.0,261.9 1182.0,262.0 1188.0,262.0 1194.0,262.1 1200.0,262.1 1206.0,262.1 1212.0,262.1 1218.0,262.1 1224.0,262.2 1230.0,262.2 1236.0,262.3 1242.0,262.4 1248.0,262.5 1254.0,262.7 1260.0,262.8 1266.0,263.0 1272.0,263.1 1278.0,263.3 1284.0,263.5 1290.0,263.7 1296.0,263.9 1302.0,264.2 1308.0,264.4 1314.0,264.7 1320.0,264.9 1326.0,265.2 1332.0,265.4 1338.0,265.7 1344.0,266.0 1350.0,266.3 1356.0,266.6 1362.0,266.8 1368.0,267.1 1374.0,267.4 1380.0,267.7 1386.0,268.0 1392.0,268.3 1398.0,268.6 1404.0,268.9 1410.0,269.2 1416.0,269.5 1422.0,269.8 1428.0,270.1 1434.0,270.4 1440.0,270.7 1446.0,270.9 1452.0,271.2 1458.0,271.5 1464.0,271.7 1470.0,272.0 1476.0,272.2 1482.0,272.4 1488.0,272.6 1494.0,272.8 1500.0,273.0 1506.0,273.2 1512.0,273.4 1518.0,273.6 1524.0,273.7 1530.0,273.8 1536.0,274.0 1542.0,274.1 1548.0,274.1 1554.0,274.2 1560.0,274.3 1566.0,274.3 1572.0,274.3 1578.0,274.3" fill="none" stroke="#3cb371" stroke-width="2"/>
<polyline points="12.0,258.0 76.0,258.0 76.0,259.0 132.0,259.0 132.0,260.0 178.0,260.0 178.0,261.0 227.0,261.0 227.0,262.0 321.0,262.0 321.0,263.0 393.0,263.0 393.0,264.0 427.0,264.0 427.0,265.0 454.0,265.0 454.0,266.0 479.0,266.0 479.0,267.0 503.0,267.0 503.0,268.0 526.0,268.0 526.0,269.0 548.0,269.0 548.0,270.0 572.0,270.0 572.0,271.0 597.0,271.0 597.0,272.0 624.0,272.0 624.0,273.0 658.0,273.0 658.0,274.0 731.0,274.0 731.0,275.0 825.0,275.0 825.0,276.0 869.0,276.0 869.0,277.0 907.0,277.0 907.0,278.0 941.0,278.0 941.0,279.0 974.0,279.0 974.0,280.0 1007.0,280.0 1007.0,281.0 1042.0,281.0 1042.0,282.0 1082.0,282.0 1082.0,283.0 1135.0,283.0 1135.0,284.0 1263.0,284.0 1263.0,285.0 1315.0,285.0 1315.0,286.0 1356.0,286.0 1356.0,287.0 1393.0,287.0 1393.0,288.0 1431.0,288.0 1431.0,289.0 1473.0,289.0 1473.0,290.0 1531.0,290.0 1531.0,291.0 1578.0,291.0" fill="none" stroke="#ff00ff" stroke-width="2"/>
<polyline points="12.0,268.0 76.0,268.0 76.0,269.0 132.0,269.0 132.0,270.0 178.0,270.0 178.0,271.0 227.0,271.0 227.0,272.0 321.0,272.0 321.0,273.0 401.0,273.0 401.0,274.0 438.0,274.0 438.0,275.0 469.0,275.0 469.0,276.0 498.0,276.0 498.0,277.0 525.0,277.0 525.0,278.0 553.0,278.0 553.0,279.0 582.0,279.0 582.0,280.0 613.0,280.0 613.0,281.0 650.0,281.0 650.0,282.0 731.0,282.0 731.0,283.0 834.0,283.0 834.0,284.0 884.0,284.0 884.0,285.0 926.0,285.0 926.0,286.0 966.0,286.0 966.0,287.0 1005.0,287.0 1005.0,288.0 1047.0,288.0 1047.0,289.0 1097.0,289.0 1097.0,290.0 1201.0,290.0 1201.0,291.0 1296.0,291.0 1296.0,292.0 1343.0,292.0 1343.0,293.0 1383.0,293.0 1383.0,294.0 1424.0,294.0 1424.0,295.0 1468.0,295.0 1468.0,296.0 1529.0,296.0 1529.0,297.0 1578.0,297.0" fill="none" stroke="#ff00ff" stroke-width="2"/>
<polyline points="12.0,278.0 125.0,278.0 125.0,279.0 188.0,279.0 188.0,280.0 263.0,280.0 263.0,281.0 386.0,281.0 386.0,282.0 427.0,282.0 427.0,283.0 459.0,283.0 459.0,284.0 488.0,284.0 488.0,285.0 515.0,285.0 515.0,286.0 542.0,286.0 542.0,287.0 569.0,287.0 569.0,288.0 598.0,288.0 598.0,289.0 631.0,289.0 631.0,290.0 676.0,290.0 676.0,291.0 814.0,291.0 814.0,292.0 884.0,292.0 884.0,293.0 939.0,293.0 939.0,294.0 992.0,294.0 992.0,295.0 1047.0,295.0 1047.0,296.0 1117.0,296.0 1117.0,297.0 1271.0,297.0 1271.0,298.0 1330.0,298.0 1330.0,299.0 1378.0,299.0 1378.0,300.0 1424.0,300.0 1424.0,301.0 1476.0,301.0 1476.0,302.0 1578.0,302.0" fill="none" stroke="#ff00ff" stroke-width="2"/>
<polyline points="12.0,289.0 98.0,289.0 98.0,290.0 235.0,290.0 235.0,291.0 390.0,291.0 390.0,292.0 433.0,292.0 433.0,293.0 468.0,293.0 468.0,294.0 499.0,294.0 499.0,295.0 528.0,295.0 528.0,296.0 558.0,296.0 558.0,297.0 590.0,297.0 590.0,298.0 626.0,298.0 626.0,299.0 673.0,299.0 673.0,300.0 823.0,300.0 823.0,301.0 901.0,301.0 901.0,302.0 966.0,302.0 966.0,303.0 1030.0,303.0 1030.0,304.0 1108.0,304.0 1108.0,305.0 1279.0,305.0 1279.0,306.0 1347.0,306.0 1347.0,307.0 1404.0,307.0 1404.0,308.0 1463.0,308.0 1463.0,309.0 1578.0,309.0 1578.0,310.0 1578.0,310.0" fill="none" stroke="#ff00ff" stroke-width="2"/>
<polyline points="12.0,132.5 22.0,133.8 32.0,135.1 42.0,136.5 52.0,137.8 62.0,139.2 72.0,140.5 82.0,141.9 92.0,143.2 102.0,144.6 112.0,146.0 122.0,147.3 132.0,148.7 142.0,150.1 152.0,151.5 162.0,152.9 172.0,154.3 182.0,155.8 192.0,157.2 202.0,158.7 212.0,160.2 222.0,161.7 232.0,163.2 242.0,164.8 252.0,166.3 262.0,167.9 272.0,169.6 282.0,171.3 292.0,173.1 302.0,174.9 312.0,176.8 322.0,178.7 332.0,180.7 342.0,182.6 352.0,184.6 362.0,186.6 372.0,188.6 382.0,190.5 392.0,192.4 402.0,194.3 412.0,196.2 422.0,198.0 432.0,199.8 442.0,201.7 452.0,203.5 462.0,205.3 472.0,207.2 482.0,209.0 492.0,210.8 502.0,212.6 512.0,214.3 522.0,216.1 532.0,217.8 542.0,219.5 552.0,221.1 562.0,222.7 572.0,224.3 582.0,225.8 592.0,227.3 602.0,228.7 612.0,230.1 622.0,231.4 632.0,232.7 642.0,234.0 652.0,235.3 662.0,236.5 672.0,237.8 682.0,239.0 692.0,240.3 702.0,241.5 712.0,242.8 722.0,244.1 732.0,245.3 742.0,246.6 752.0,247.9 762.0,249.1 772.0,250.4 782.0,251.6 792.0,252.9 802.0,254.1 812.0,255.4 822.0,256.6 832.0,257.9 842.0,259.1 852.0,260.3 862.0,261.6 872.0,262.8 882.0,264.1 892.0,265.3 902.0,266.5 912.0,267.8 922.0,269.0 932.0,270.3 942.0,271.5 952.0,272.8 962.0,274.1 972.0,275.3 982.0,276.6 992.0,277.9 1002.0,279.1 1012.0,280.4 1022.0,281.7 1032.0,283.0 1042.0,284.3 1052.0,285.6 1062.0,286.8 1072.0,288.1 1082.0,289.4 1092.0,290.7 1102.0,292.0 1112.0,293.2 1122.0,294.5 1132.0,295.8 1142.0,297.0 1152.0,298.3 1162.0,299.5 1172.0,300.8 1182.0,302.0 1192.0,303.2 1202.0,304.5 1212.0,305.7 1222.0,306.9 1232.0,308.1 1242.0,309.3 1252.0,310.5 1262.0,311.7 1272.0,312.9 1282.0,314.1 1292.0,315.3 1302.0,316.4 1312.0,317.6 1322.0,318.8 1332.0,320.0 1342.0,321.1 1352.0,322.3 1362.0,323.4 1372.0,324.6 1382.0,325.7 1392.0,326.9 1402.0,328.0 1412.0,329.1 1422.0,330.2 1432.0,331.3 1442.0,332.4 1452.0,333.5 1462.0,334.6 1472.0,335.7 1482.0,336.7 1492.0,337.8 1502.0,338.8 1512.0,339.9 1522.0,340.9 1532.0,342.0 1542.0,343.0 1552.0,344.1 1562.0,345.1 1572.0,346.2 1578.0,346.8" fill="none" stroke="#fff" stroke-width="1"/>
<polyline points="12.0,135.5 22.0,137.0 32.0,138.5 42.0,140.1 52.0,141.7 62.0,143.3 72.0,144.9 82.0,146.5 92.0,148.1 102.0,149.7 112.0,151.3 122.0,153.0 132.0,154.6 142.0,156.2 152.0,157.9 162.0,159.5 172.0,161.2 182.0,162.9 192.0,164.6 202.0,166.3 212.0,168.0 222.0,169.8 232.0,171.5 242.0,173.3 252.0,175.1 262.0,176.9 272.0,178.8 282.0,180.7 292.0,182.6 302.0,184.6 312.0,186.7 322.0,188.7 332.0,190.8 342.0,192.9 352.0,195.0 362.0,197.1 372.0,199.2 382.0,201.3 392.0,203.4 402.0,205.4 412.0,207.4 422.0,209.4 432.0,211.4 442.0,213.4 452.0,215.4 462.0,217.4 472.0,219.4 482.0,221.4 492.0,223.4 502.0,225.4 512.0,227.3 522.0,229.3 532.0,231.2 542.0,233.1 552.0,234.9 562.0,236.8 572.0,238.6 582.0,240.4 592.0,242.1 602.0,243.8 612.0,245.5 622.0,247.2 632.0,248.8 642.0,250.5 652.0,252.1 662.0,253.7 672.0,255.2 682.0,256.8 692.0,258.3 702.0,259.8 712.0,261.3 722.0,262.8 732.0,264.3 742.0,265.7 752.0,267.1 762.0,268.5 772.0,269.9 782.0,271.3 792.0,272.7 802.0,274.0 812.0,275.4 822.0,276.7 832.0,278.1 842.0,279.4 852.0,280.7 862.0,282.1 872.0,283.4 882.0,284.7 892.0,286.0 902.0,287.3 912.0,288.6 922.0,290.0 932.0,291.3 942.0,292.6 952.0,293.9 962.0,295.3 972.0,296.6 982.0,297.9 992.0,299.3 1002.0,300.6 1012.0,301.9 1022.0,303.3 1032.0,304.6 1042.0,305.9 1052.0,307.3 1062.0,308.6 1072.0,309.9 1082.0,311.2 1092.0,312.6 1102.0,313.9 1112.0,315.2 1122.0,316.5 1132.0,317.8 1142.0,319.1 1152.0,320.4 1162.0,321.8 1172.0,323.1 1182.0,324.4 1192.0,325.7 1202.0,327.0 1212.0,328.3 1222.0,329.6 1232.0,330.9 1242.0,332.2 1252.0,333.6 1262.0,334.9 1272.0,336.2 1282.0,337.5 1292.0,338.8 1302.0,340.1 1312.0,341.4 1322.0,342.7 1332.0,343.9 1342.0,345.2 1352.0,346.4 1362.0,347.6 1372.0,348.8 1382.0,349.9 1392.0,351.1 1402.0,352.2 1412.0,353.3 1422.0,354.4 1432.0,355.5 1442.0,356.5 1452.0,357.6 1462.0,358.6 1472.0,359.6 1482.0,360.7 1492.0,361.7 1502.0,362.7 1512.0,363.7 1522.0,364.7 1532.0,365.8 1542.0,366.8 1552.0,367.8 1562.0,368.8 1572.0,369.9 1578.0,370.5" fill="none" stroke="#fff" stroke-width="1"/>
<polyline points="12.0,138.5 22.0,140.2 32.0,142.0 42.0,143.7 52.0,145.5 62.0,147.3 72.0,149.0 82.0,150.8 92.0,152.5 102.0,154.3 112.0,156.1 122.0,157.8 132.0,159.6 142.0,161.4 152.0,163.2 162.0,164.9 172.0,166.7 182.0,168.5 192.0,170.3 202.0,172.2 212.0,174.0 222.0,175.8 232.0,177.7 242.0,179.5 252.0,181.4 262.0,183.3 272.0,185.2 282.0,187.1 292.0,189.1 302.0,191.1 312.0,193.1 322.0,195.1 332.0,197.1 342.0,199.2 352.0,201.2 362.0,203.3 372.0,205.4 382.0,207.4 392.0,209.5 402.0,211.6 412.0,213.7 422.0,215.8 432.0,218.0 442.0,220.2 452.0,222.4 462.0,224.6 472.0,226.8 482.0,229.0 492.0,231.3 502.0,233.5 512.0,235.7 522.0,237.9 532.0,240.1 542.0,242.2 552.0,244.3 562.0,246.4 572.0,248.4 582.0,250.4 592.0,252.3 602.0,254.3 612.0,256.2 622.0,258.1 632.0,259.9 642.0,261.8 652.0,263.6 662.0,265.4 672.0,267.1 682.0,268.8 692.0,270.5 702.0,272.2 712.0,273.8 722.0,275.3 732.0,276.8 742.0,278.3 752.0,279.8 762.0,281.2 772.0,282.6 782.0,284.0 792.0,285.4 802.0,286.8 812.0,288.1 822.0,289.4 832.0,290.8 842.0,292.1 852.0,293.4 862.0,294.7 872.0,296.0 882.0,297.3 892.0,298.6 902.0,299.9 912.0,301.2 922.0,302.5 932.0,303.8 942.0,305.1 952.0,306.4 962.0,307.8 972.0,309.1 982.0,310.5 992.0,311.8 1002.0,313.2 1012.0,314.5 1022.0,315.9 1032.0,317.2 1042.0,318.6 1052.0,320.0 1062.0,321.3 1072.0,322.7 1082.0,324.0 1092.0,325.4 1102.0,326.7 1112.0,328.1 1122.0,329.4 1132.0,330.8 1142.0,332.1 1152.0,333.4 1162.0,334.8 1172.0,336.1 1182.0,337.4 1192.0,338.8 1202.0,340.1 1212.0,341.4 1222.0,342.8 1232.0,344.2 1242.0,345.5 1252.0,346.9 1262.0,348.3 1272.0,349.6 1282.0,351.0 1292.0,352.3 1302.0,353.7 1312.0,355.0 1322.0,356.3 1332.0,357.5 1342.0,358.8 1352.0,360.0 1362.0,361.2 1372.0,362.4 1382.0,363.5 1392.0,364.6 1402.0,365.7 1412.0,366.8 1422.0,367.8 1432.0,368.8 1442.0,369.8 1452.0,370.8 1462.0,371.8 1472.0,372.7 1482.0,373.7 1492.0,374.6 1502.0,375.6 1512.0,376.5 1522.0,377.4 1532.0,378.4 1542.0,379.3 1552.0,380.3 1562.0,381.2 1572.0,382.2 1578.0,382.8" fill="none" stroke="#fff" stroke-width="1"/>
<polyline points="12.0,142.5 22.0,144.2 32.0,146.0 42.0,147.8 52.0,149.6 62.0,151.4 72.0,153.3 82.0,155.1 92.0,157.0 102.0,158.8 112.0,160.7 122.0,162.5 132.0,164.4 142.0,166.3 152.0,168.2 162.0,170.1 172.0,172.0 182.0,174.0 192.0,175.9 202.0,177.8 212.0,179.8 222.0,181.8 232.0,183.8 242.0,185.8 252.0,187.8 262.0,189.8 272.0,191.9 282.0,194.0 292.0,196.1 302.0,198.3 312.0,200.5 322.0,202.7 332.0,204.9 342.0,207.1 352.0,209.4 362.0,211.7 372.0,213.9 382.0,216.2 392.0,218.5 402.0,220.7 412.0,222.9 422.0,225.2 432.0,227.5 442.0,229.8 452.0,232.1 462.0,234.5 472.0,236.8 482.0,239.2 492.0,241.5 502.0,243.9 512.0,246.2 522.0,248.5 532.0,250.7 542.0,252.9 552.0,255.1 562.0,257.2 572.0,259.2 582.0,261.2 592.0,263.1 602.0,265.0 612.0,266.8 622.0,268.7 632.0,270.4 642.0,272.2 652.0,273.9 662.0,275.6 672.0,277.3 682.0,278.9 692.0,280.5 702.0,282.1 712.0,283.7 722.0,285.3 732.0,286.9 742.0,288.4 752.0,290.0 762.0,291.5 772.0,293.0 782.0,294.5 792.0,296.0 802.0,297.4 812.0,298.9 822.0,300.3 832.0,301.8 842.0,303.2 852.0,304.6 862.0,306.1 872.0,307.5 882.0,308.9 892.0,310.3 902.0,311.7 912.0,313.1 922.0,314.6 932.0,316.0 942.0,317.4 952.0,318.8 962.0,320.3 972.0,321.7 982.0,323.2 992.0,324.6 1002.0,326.1 1012.0,327.5 1022.0,329.0 1032.0,330.5 1042.0,331.9 1052.0,333.4 1062.0,334.8 1072.0,336.3 1082.0,337.7 1092.0,339.2 1102.0,340.6 1112.0,342.0 1122.0,343.4 1132.0,344.8 1142.0,346.2 1152.0,347.6 1162.0,349.0 1172.0,350.4 1182.0,351.7 1192.0,353.1 1202.0,354.4 1212.0,355.7 1222.0,357.1 1232.0,358.4 1242.0,359.8 1252.0,361.1 1262.0,362.4 1272.0,363.7 1282.0,365.0 1292.0,366.3 1302.0,367.6 1312.0,368.8 1322.0,370.1 1332.0,371.3 1342.0,372.5 1352.0,373.6 1362.0,374.7 1372.0,375.8 1382.0,376.9 1392.0,378.0 1402.0,379.0 1412.0,380.0 1422.0,380.9 1432.0,381.9 1442.0,382.8 1452.0,383.7 1462.0,384.6 1472.0,385.5 1482.0,386.4 1492.0,387.2 1502.0,388.1 1512.0,389.0 1522.0,389.8 1532.0,390.7 1542.0,391.6 1552.0,392.5 1562.0,393.4 1572.0,394.3 1578.0,394.8" fill="none" stroke="#fff" stroke-width="1"/>
<polyline points="12.0,185.0 18.0,186.0 24.0,187.0 30.0,188.1 36.0,189.3 42.0,190.5 48.0,191.7 54.0,193.0 60.0,194.2 66.0,195.6 72.0,196.9 78.0,198.3 84.0,199.7 90.0,201.2 96.0,202.7 102.0,204.3 108.0,206.0 114.0,207.8 120.0,209.7 126.0,211.6 132.0,213.5 138.0,215.4 144.0,217.2 150.0,219.1 156.0,220.9 162.0,222.6 168.0,224.2 174.0,225.7 180.0,227.3 186.0,228.9 192.0,230.5 198.0,232.2 204.0,233.9 210.0,235.6 216.0,237.3 222.0,239.1 228.0,240.9 234.0,242.7 240.0,244.5 246.0,246.3 252.0,248.1 258.0,250.0 264.0,251.9 270.0,253.8 276.0,255.8 282.0,257.7 288.0,259.7 294.0,261.6 300.0,263.6 306.0,265.5 312.0,267.3 318.0,269.2 324.0,271.0 330.0,272.9 336.0,274.7 342.0,276.5 348.0,278.2 354.0,280.0 360.0,281.8 366.0,283.6 372.0,285.4 378.0,287.2 384.0,289.0 390.0,290.8 396.0,292.6 402.0,294.4 408.0,296.2 414.0,298.0 420.0,299.8 426.0,301.6 432.0,303.4 438.0,305.2 444.0,307.0 450.0,308.8 456.0,310.7 462.0,312.6 468.0,314.4 474.0,316.3 480.0,318.1 486.0,319.9 492.0,321.6 498.0,323.3 504.0,324.9 510.0,326.4 516.0,327.9 522.0,329.4 528.0,330.8 534.0,332.2 540.0,333.6 546.0,335.0 552.0,336.4 558.0,337.8 564.0,339.1 570.0,340.5 576.0,341.9 582.0,343.3 588.0,344.7 594.0,346.1 600.0,347.4 606.0,348.7 612.0,350.0 618.0,351.2 624.0,352.3 630.0,353.4 636.0,354.5 642.0,355.5 648.0,356.4 654.0,357.4 660.0,358.3 666.0,359.2 672.0,360.1 678.0,361.1 684.0,362.0 690.0,362.9 696.0,363.8 702.0,364.6 708.0,365.5 714.0,366.3 720.0,367.2 726.0,368.2 732.0,369.1 738.0,370.2 744.0,371.3 750.0,372.5 756.0,373.7 762.0,374.9 768.0,376.1 774.0,377.3 780.0,378.5 786.0,379.5 792.0,380.5 798.0,381.4 804.0,382.2 810.0,383.0 816.0,383.7 822.0,384.4 828.0,385.2 834.0,385.8 840.0,386.5 846.0,387.2 852.0,387.8 858.0,388.4 864.0,389.0 870.0,389.6 876.0,390.2 882.0,390.8 888.0,391.4 894.0,391.9 900.0,392.5 906.0,393.1 912.0,393.6 918.0,394.1 924.0,394.7 930.0,395.2 936.0,395.7 942.0,396.3 948.0,396.8 954.0,397.4 960.0,397.9 966.0,398.4 972.0,398.9 978.0,399.4 984.0,399.9 990.0,400.4 996.0,400.9 1002.0,401.4 1008.0,401.9 1014.0,402.3 1020.0,402.8 1026.0,403.3 1032.0,403.7 1038.0,404.2 1044.0,404.6 1050.0,405.1 1056.0,405.6 1062.0,406.0 1068.0,406.5 1074.0,407.0 1080.0,407.4 1086.0,407.9 1092.0,408.4 1098.0,408.8 1104.0,409.3 1110.0,409.8 1116.0,410.3 1122.0,410.8 1128.0,411.3 1134.0,411.7 1140.0,412.2 1146.0,412.7 1152.0,413.2 1158.0,413.7 1164.0,414.2 1170.0,414.7 1176.0,415.2 1182.0,415.6 1188.0,416.1 1194.0,416.6 1200.0,417.1 1206.0,417.6 1212.0,418.0 1218.0,418.5 1224.0,419.0 1230.0,419.5 1236.0,419.9 1242.0,420.4 1248.0,420.8 1254.0,421.3 1260.0,421.8 1266.0,422.2 1272.0,422.7 1278.0,423.2 1284.0,423.6 1290.0,424.1 1296.0,424.6 1302.0,425.1 1308.0,425.5 1314.0,426.0 1320.0,426.5 1326.0,426.9 1332.0,427.4 1338.0,427.9 1344.0,428.3 1350.0,428.8 1356.0,429.2 1362.0,429.6 1368.0,430.1 1374.0,430.5 1380.0,430.9 1386.0,431.3 1392.0,431.7 1398.0,432.0 1404.0,432.4 1410.0,432.7 1416.0,433.1 1422.0,433.4 1428.0,433.7 1434.0,434.0 1440.0,434.3 1446.0,434.6 1452.0,434.9 1458.0,435.2 1464.0,435.4 1470.0,435.7 1476.0,435.9 1482.0,436.2 1488.0,436.4 1494.0,436.7 1500.0,436.9 1506.0,437.1 1512.0,437.4 1518.0,437.6 1524.0,437.8 1530.0,438.1 1536.0,438.3 1542.0,438.5 1548.0,438.8 1554.0,439.0 1560.0,439.3 1566.0,439.5 1572.0,439.7 1578.0,440.0" fill="none" stroke="#0000ff" stroke-width="1"/>
<polyline points="12.0,200.0 18.0,200.9 24.0,201.9 30.0,202.9 36.0,204.0 42.0,205.2 48.0,206.4 54.0,207.7 60.0,209.1 66.0,210.5 72.0,211.9 78.0,213.4 84.0,214.9 90.0,216.5 96.0,218.1 102.0,219.8 108.0,221.4 114.0,223.1 120.0,224.8 126.0,226.6 132.0,228.3 138.0,230.1 144.0,231.9 150.0,233.7 156.0,235.6 162.0,237.4 168.0,239.2 174.0,241.1 180.0,242.9 186.0,244.7 192.0,246.5 198.0,248.3 204.0,250.1 210.0,251.9 216.0,253.7 222.0,255.4 228.0,257.2 234.0,259.0 240.0,260.8 246.0,262.6 252.0,264.4 258.0,266.2 264.0,268.0 270.0,269.7 276.0,271.5 282.0,273.3 288.0,275.1 294.0,276.9 300.0,278.7 306.0,280.5 312.0,282.3 318.0,284.2 324.0,286.1 330.0,288.0 336.0,289.9 342.0,291.9 348.0,293.8 354.0,295.7 360.0,297.7 366.0,299.6 372.0,301.5 378.0,303.5 384.0,305.4 390.0,307.3 396.0,309.2 402.0,311.1 408.0,313.1 414.0,315.0 420.0,316.9 426.0,318.8 432.0,320.7 438.0,322.7 444.0,324.6 450.0,326.6 456.0,328.6 462.0,330.7 468.0,332.7 474.0,334.7 480.0,336.6 486.0,338.5 492.0,340.3 498.0,342.0 504.0,343.5 510.0,345.0 516.0,346.5 522.0,347.8 528.0,349.2 534.0,350.5 540.0,351.8 546.0,353.0 552.0,354.2 558.0,355.4 564.0,356.6 570.0,357.8 576.0,358.9 582.0,360.0 588.0,361.0 594.0,362.1 600.0,363.1 606.0,364.2 612.0,365.2 618.0,366.3 624.0,367.3 630.0,368.4 636.0,369.5 642.0,370.6 648.0,371.8 654.0,372.9 660.0,374.0 666.0,375.1 672.0,376.2 678.0,377.2 684.0,378.2 690.0,379.2 696.0,380.1 702.0,381.0 708.0,381.8 714.0,382.7 720.0,383.5 726.0,384.4 732.0,385.3 738.0,386.3 744.0,387.4 750.0,388.4 756.0,389.5 762.0,390.6 768.0,391.7 774.0,392.8 780.0,393.8 786.0,394.8 792.0,395.7 798.0,396.5 804.0,397.2 810.0,397.8 816.0,398.5 822.0,399.1 828.0,399.7 834.0,400.3 840.0,400.9 846.0,401.5 852.0,402.0 858.0,402.6 864.0,403.1 870.0,403.6 876.0,404.1 882.0,404.6 888.0,405.1 894.0,405.6 900.0,406.1 906.0,406.5 912.0,407.0 918.0,407.5 924.0,408.0 930.0,408.4 936.0,408.9 942.0,409.4 948.0,409.8 954.0,410.3 960.0,410.8 966.0,411.2 972.0,411.7 978.0,412.2 984.0,412.6 990.0,413.0 996.0,413.5 1002.0,413.9 1008.0,414.3 1014.0,414.8 1020.0,415.2 1026.0,415.6 1032.0,416.0 1038.0,416.5 1044.0,416.9 1050.0,417.3 1056.0,417.7 1062.0,418.1 1068.0,418.5 1074.0,419.0 1080.0,419.4 1086.0,419.8 1092.0,420.2 1098.0,420.7 1104.0,421.1 1110.0,421.5 1116.0,422.0 1122.0,422.4 1128.0,422.8 1134.0,423.3 1140.0,423.7 1146.0,424.1 1152.0,424.6 1158.0,425.0 1164.0,425.4 1170.0,425.9 1176.0,426.3 1182.0,426.7 1188.0,427.2 1194.0,427.6 1200.0,428.0 1206.0,428.4 1212.0,428.9 1218.0,429.3 1224.0,429.7 1230.0,430.1 1236.0,430.5 1242.0,431.0 1248.0,431.4 1254.0,431.8 1260.0,432.2 1266.0,432.6 1272.0,433.1 1278.0,433.5 1284.0,433.9 1290.0,434.4 1296.0,434.8 1302.0,435.3 1308.0,435.7 1314.0,436.2 1320.0,436.6 1326.0,437.1 1332.0,437.5 1338.0,438.0 1344.0,438.4 1350.0,438.8 1356.0,439.2 1362.0,439.6 1368.0,440.0 1374.0,440.3 1380.0,440.7 1386.0,441.0 1392.0,441.3 1398.0,441.6 1404.0,441.9 1410.0,442.1 1416.0,442.4 1422.0,442.6 1428.0,442.8 1434.0,442.9 1440.0,443.1 1446.0,443.3 1452.0,443.4 1458.0,443.6 1464.0,443.7 1470.0,443.9 1476.0,444.0 1482.0,444.1 1488.0,444.2 1494.0,444.4 1500.0,444.5 1506.0,444.6 1512.0,444.7 1518.0,444.8 1524.0,444.9 1530.0,445.0 1536.0,445.2 1542.0,445.3 1548.0,445.4 1554.0,445.5 1560.0,445.6 1566.0,445.7 1572.0,445.9 1578.0,446.0" fill="none" stroke="#0000ff" stroke-width="1"/>
<polyline points="12.0,214.0 18.0,215.2 24.0,216.5 30.0,217.7 36.0,218.9 42.0,220.2 48.0,221.5 54.0,223.0 60.0,224.5 66.0,226.0 72.0,227.6 78.0,229.2 84.0,230.8 90.0,232.5 96.0,234.2 102.0,235.9 108.0,237.6 114.0,239.4 120.0,241.1 126.0,242.8 132.0,244.6 138.0,246.4 144.0,248.2 150.0,250.0 156.0,251.8 162.0,253.7 168.0,255.6 174.0,257.4 180.0,259.3 186.0,261.2 192.0,263.0 198.0,264.8 204.0,266.6 210.0,268.4 216.0,270.2 222.0,272.0 228.0,273.8 234.0,275.6 240.0,277.5 246.0,279.3 252.0,281.1 258.0,283.0 264.0,284.8 270.0,286.7 276.0,288.5 282.0,290.4 288.0,292.3 294.0,294.2 300.0,296.1 306.0,297.9 312.0,299.8 318.0,301.7 324.0,303.6 330.0,305.6 336.0,307.5 342.0,309.4 348.0,311.3 354.0,313.3 360.0,315.2 366.0,317.1 372.0,319.0 378.0,321.0 384.0,322.9 390.0,324.8 396.0,326.7 402.0,328.6 408.0,330.5 414.0,332.4 420.0,334.4 426.0,336.3 432.0,338.2 438.0,340.2 444.0,342.2 450.0,344.2 456.0,346.4 462.0,348.5 468.0,350.6 474.0,352.7 480.0,354.7 486.0,356.6 492.0,358.4 498.0,360.0 504.0,361.5 510.0,362.8 516.0,364.1 522.0,365.3 528.0,366.5 534.0,367.6 540.0,368.7 546.0,369.8 552.0,370.8 558.0,371.8 564.0,372.7 570.0,373.7 576.0,374.6 582.0,375.4 588.0,376.2 594.0,377.0 600.0,377.8 606.0,378.6 612.0,379.4 618.0,380.3 624.0,381.2 630.0,382.1 636.0,383.0 642.0,384.0 648.0,385.0 654.0,386.0 660.0,387.0 666.0,388.0 672.0,389.0 678.0,389.9 684.0,390.8 690.0,391.6 696.0,392.4 702.0,393.0 708.0,393.6 714.0,394.3 720.0,395.0 726.0,395.7 732.0,396.6 738.0,397.7 744.0,398.9 750.0,400.3 756.0,401.7 762.0,403.2 768.0,404.6 774.0,406.1 780.0,407.4 786.0,408.6 792.0,409.7 798.0,410.6 804.0,411.2 810.0,411.9 816.0,412.5 822.0,413.0 828.0,413.6 834.0,414.1 840.0,414.6 846.0,415.1 852.0,415.6 858.0,416.1 864.0,416.5 870.0,416.9 876.0,417.4 882.0,417.8 888.0,418.2 894.0,418.6 900.0,418.9 906.0,419.3 912.0,419.7 918.0,420.0 924.0,420.4 930.0,420.8 936.0,421.1 942.0,421.5 948.0,421.9 954.0,422.2 960.0,422.6 966.0,423.0 972.0,423.3 978.0,423.6 984.0,424.0 990.0,424.3 996.0,424.6 1002.0,424.9 1008.0,425.2 1014.0,425.6 1020.0,425.9 1026.0,426.2 1032.0,426.5 1038.0,426.8 1044.0,427.1 1050.0,427.4 1056.0,427.7 1062.0,428.0 1068.0,428.3 1074.0,428.6 1080.0,428.9 1086.0,429.2 1092.0,429.6 1098.0,429.9 1104.0,430.2 1110.0,430.6 1116.0,430.9 1122.0,431.3 1128.0,431.6 1134.0,432.0 1140.0,432.4 1146.0,432.8 1152.0,433.1 1158.0,433.5 1164.0,433.9 1170.0,434.3 1176.0,434.6 1182.0,435.0 1188.0,435.4 1194.0,435.8 1200.0,436.1 1206.0,436.5 1212.0,436.8 1218.0,437.2 1224.0,437.6 1230.0,437.9 1236.0,438.2 1242.0,438.6 1248.0,438.9 1254.0,439.2 1260.0,439.5 1266.0,439.8 1272.0,440.1 1278.0,440.5 1284.0,440.8 1290.0,441.1 1296.0,441.4 1302.0,441.7 1308.0,442.0 1314.0,442.3 1320.0,442.6 1326.0,442.8 1332.0,443.1 1338.0,443.4 1344.0,443.7 1350.0,444.0 1356.0,444.2 1362.0,444.5 1368.0,444.8 1374.0,445.1 1380.0,445.3 1386.0,445.6 1392.0,445.8 1398.0,446.1 1404.0,446.3 1410.0,446.6 1416.0,446.8 1422.0,447.1 1428.0,447.3 1434.0,447.5 1440.0,447.8 1446.0,448.0 1452.0,448.2 1458.0,448.4 1464.0,448.7 1470.0,448.9 1476.0,449.1 1482.0,449.3 1488.0,449.5 1494.0,449.7 1500.0,449.9 1506.0,450.1 1512.0,450.3 1518.0,450.5 1524.0,450.7 1530.0,450.9 1536.0,451.1 1542.0,451.3 1548.0,451.5 1554.0,451.7 1560.0,451.9 1566.0,452.1 1572.0,452.3 1578.0,452.5" fill="none" stroke="#0000ff" stroke-width="1"/>
<polyline points="12.0,222.5 18.0,223.8 24.0,225.2 30.0,226.5 36.0,227.8 42.0,229.1 48.0,230.5 54.0,231.9 60.0,233.4 66.0,234.8 72.0,236.3 78.0,237.8 84.0,239.4 90.0,241.0 96.0,242.7 102.0,244.5 108.0,246.3 114.0,248.1 120.0,250.0 126.0,251.8 132.0,253.6 138.0,255.3 144.0,257.1 150.0,258.8 156.0,260.5 162.0,262.3 168.0,264.0 174.0,265.7 180.0,267.5 186.0,269.2 192.0,271.0 198.0,272.8 204.0,274.6 210.0,276.4 216.0,278.2 222.0,280.0 228.0,281.9 234.0,283.7 240.0,285.6 246.0,287.5 252.0,289.4 258.0,291.4 264.0,293.4 270.0,295.5 276.0,297.5 282.0,299.6 288.0,301.7 294.0,303.8 300.0,305.8 306.0,307.8 312.0,309.8 318.0,311.8 324.0,313.7 330.0,315.6 336.0,317.5 342.0,319.4 348.0,321.3 354.0,323.1 360.0,325.1 366.0,327.0 372.0,329.0 378.0,331.0 384.0,333.2 390.0,335.3 396.0,337.6 402.0,339.8 408.0,342.1 414.0,344.3 420.0,346.5 426.0,348.7 432.0,350.7 438.0,352.7 444.0,354.5 450.0,356.4 456.0,358.3 462.0,360.1 468.0,361.9 474.0,363.6 480.0,365.3 486.0,366.8 492.0,368.3 498.0,369.6 504.0,370.8 510.0,371.9 516.0,372.9 522.0,373.9 528.0,374.9 534.0,375.7 540.0,376.6 546.0,377.5 552.0,378.4 558.0,379.3 564.0,380.2 570.0,381.2 576.0,382.1 582.0,383.0 588.0,384.0 594.0,384.9 600.0,385.8 606.0,386.8 612.0,387.8 618.0,388.8 624.0,389.8 630.0,390.9 636.0,392.1 642.0,393.4 648.0,394.7 654.0,396.0 660.0,397.3 666.0,398.6 672.0,399.8 678.0,400.9 684.0,402.0 690.0,402.9 696.0,403.6 702.0,404.3 708.0,405.0 714.0,405.6 720.0,406.3 726.0,407.0 732.0,407.8 738.0,408.7 744.0,409.6 750.0,410.6 756.0,411.7 762.0,412.7 768.0,413.8 774.0,414.8 780.0,415.7 786.0,416.6 792.0,417.4 798.0,418.1 804.0,418.7 810.0,419.2 816.0,419.7 822.0,420.2 828.0,420.7 834.0,421.2 840.0,421.6 846.0,422.1 852.0,422.5 858.0,422.9 864.0,423.3 870.0,423.7 876.0,424.1 882.0,424.5 888.0,424.8 894.0,425.2 900.0,425.6 906.0,425.9 912.0,426.3 918.0,426.6 924.0,427.0 930.0,427.3 936.0,427.7 942.0,428.0 948.0,428.4 954.0,428.7 960.0,429.1 966.0,429.5 972.0,429.8 978.0,430.1 984.0,430.5 990.0,430.8 996.0,431.1 1002.0,431.5 1008.0,431.8 1014.0,432.1 1020.0,432.4 1026.0,432.8 1032.0,433.1 1038.0,433.4 1044.0,433.7 1050.0,434.0 1056.0,434.3 1062.0,434.7 1068.0,435.0 1074.0,435.3 1080.0,435.6 1086.0,435.9 1092.0,436.3 1098.0,436.6 1104.0,436.9 1110.0,437.3 1116.0,437.6 1122.0,437.9 1128.0,438.3 1134.0,438.6 1140.0,439.0 1146.0,439.3 1152.0,439.7 1158.0,440.0 1164.0,440.4 1170.0,440.7 1176.0,441.1 1182.0,441.4 1188.0,441.7 1194.0,442.1 1200.0,442.4 1206.0,442.7 1212.0,443.1 1218.0,443.4 1224.0,443.7 1230.0,444.0 1236.0,444.3 1242.0,444.6 1248.0,444.9 1254.0,445.2 1260.0,445.5 1266.0,445.8 1272.0,446.0 1278.0,446.3 1284.0,446.6 1290.0,446.9 1296.0,447.2 1302.0,447.5 1308.0,447.7 1314.0,448.0 1320.0,448.3 1326.0,448.6 1332.0,448.8 1338.0,449.1 1344.0,449.3 1350.0,449.6 1356.0,449.8 1362.0,450.1 1368.0,450.3 1374.0,450.5 1380.0,450.8 1386.0,451.0 1392.0,451.2 1398.0,451.4 1404.0,451.5 1410.0,451.7 1416.0,451.9 1422.0,452.1 1428.0,452.2 1434.0,452.3 1440.0,452.5 1446.0,452.6 1452.0,452.8 1458.0,452.9 1464.0,453.0 1470.0,453.1 1476.0,453.2 1482.0,453.3 1488.0,453.4 1494.0,453.6 1500.0,453.7 1506.0,453.8 1512.0,453.9 1518.0,454.0 1524.0,454.1 1530.0,454.2 1536.0,454.3 1542.0,454.4 1548.0,454.5 1554.0,454.6 1560.0,454.7 1566.0,454.8 1572.0,454.9 1578.0,455.0" fill="none" stroke="#0000ff" stroke-width="1"/>
<polyline points="12.0,236.5 17.0,238.0 22.0,239.5 27.0,240.9 32.0,242.4 37.0,244.0 42.0,245.7 47.0,247.5 52.0,249.3 57.0,251.3 62.0,253.2 67.0,255.1 72.0,256.9 77.0,258.7 82.0,260.3 87.0,261.8 92.0,263.3 97.0,264.9 102.0,266.8 107.0,268.8 112.0,270.9 117.0,273.2 122.0,275.4 127.0,277.7 132.0,279.9 137.0,282.1 142.0,284.2 147.0,286.4 152.0,288.6 157.0,290.7 162.0,292.8 167.0,294.9 172.0,297.0 177.0,299.0 182.0,301.1 187.0,303.1 192.0,305.0 197.0,306.9 202.0,308.7 207.0,310.5 212.0,312.2 217.0,314.0 222.0,315.8 227.0,317.7 232.0,319.6 237.0,321.6 242.0,323.7 247.0,325.9 252.0,328.1 257.0,330.4 262.0,332.7 267.0,335.0 272.0,337.5 277.0,340.1 282.0,342.4 287.0,344.5 292.0,346.4 297.0,348.4 302.0,350.3 307.0,352.2 312.0,354.2 317.0,356.3 322.0,358.3 327.0,360.4 332.0,362.5 337.0,364.6 342.0,366.8 347.0,368.9 352.0,371.1 357.0,373.4 362.0,375.7 367.0,378.1 372.0,380.4 377.0,382.8 382.0,385.3 387.0,387.7 392.0,390.2 397.0,392.7 402.0,395.1 407.0,397.6 412.0,400.1 417.0,402.6 422.0,405.1 427.0,407.7 432.0,410.3 437.0,412.8 442.0,415.4 447.0,417.9 452.0,420.5 457.0,422.9 462.0,425.4 467.0,427.8 472.0,430.4 477.0,432.9 482.0,435.5 487.0,438.0 492.0,440.2 497.0,442.3 502.0,444.1 507.0,445.5 512.0,446.6 517.0,447.4 522.0,448.4 527.0,449.4 532.0,450.5 537.0,451.5 542.0,452.3 547.0,453.2 552.0,454.0 557.0,454.7 562.0,455.5 567.0,456.2 572.0,456.9 577.0,457.6 582.0,458.3 587.0,458.9 592.0,459.6 597.0,460.3 602.0,460.9 607.0,461.5 612.0,462.1 617.0,462.7 622.0,463.2 627.0,463.7 632.0,464.1 637.0,464.6 642.0,465.0 647.0,465.4 652.0,465.9 657.0,466.4 662.0,466.9 667.0,467.5 672.0,468.1 677.0,468.8 682.0,469.5 687.0,470.2 692.0,470.9 697.0,471.6 702.0,472.3 707.0,473.0 712.0,473.8 717.0,474.6 722.0,475.3 727.0,476.1 732.0,476.9 737.0,477.6 742.0,478.3 747.0,479.0 752.0,479.8 757.0,480.5 762.0,481.3 767.0,481.9 772.0,482.4 777.0,482.8 782.0,483.1 787.0,483.3 792.0,483.5 797.0,483.6 802.0,483.8 807.0,483.9 812.0,483.9 817.0,484.0 822.0,484.0 827.0,483.5 832.0,482.7 837.0,481.5 842.0,480.1 847.0,478.6 852.0,477.1 857.0,475.8 862.0,474.5 867.0,473.3 872.0,472.1 877.0,470.9 882.0,469.7 887.0,468.4 892.0,467.1 897.0,465.8 902.0,464.4 907.0,463.0 912.0,461.5 917.0,459.9 922.0,458.3 927.0,456.8 932.0,455.3 937.0,453.8 942.0,452.3 947.0,450.8 952.0,449.4 957.0,448.2 962.0,447.1 967.0,446.1 972.0,445.2 977.0,444.3 982.0,443.4 987.0,442.7 992.0,442.0 997.0,441.3 1002.0,440.8 1007.0,440.2 1012.0,439.7 1017.0,439.2 1022.0,438.8 1027.0,438.5 1032.0,438.3 1037.0,438.3 1042.0,438.2 1047.0,438.2 1052.0,438.1 1057.0,438.1 1062.0,438.0 1067.0,438.0 1072.0,438.0 1077.0,438.0 1082.0,438.0 1087.0,438.1 1092.0,438.3 1097.0,438.6 1102.0,438.9 1107.0,439.2 1112.0,439.5 1117.0,439.8 1122.0,440.1 1127.0,440.3 1132.0,440.6 1137.0,440.8 1142.0,441.0 1147.0,441.3 1152.0,441.5 1157.0,441.8 1162.0,442.1 1167.0,442.6 1172.0,443.1 1177.0,443.7 1182.0,444.3 1187.0,444.9 1192.0,445.4 1197.0,445.8 1202.0,446.1 1207.0,446.3 1212.0,446.5 1217.0,446.6 1222.0,446.8 1227.0,446.9 1232.0,447.0 1237.0,447.2 1242.0,447.3 1247.0,447.4 1250.0,447.5 1264.0,447.1 1268.0,447.2 1272.0,447.3 1276.0,447.5 1280.0,447.7 1284.0,448.0 1288.0,448.4 1292.0,448.8 1296.0,449.2 1300.0,449.7 1304.0,450.2 1308.0,450.8 1312.0,451.3 1316.0,451.9 1320.0,452.4 1324.0,452.8 1328.0,453.2 1332.0,453.5 1336.0,453.7 1340.0,453.8 1344.0,453.8 1348.0,453.8 1352.0,453.8 1356.0,453.8 1360.0,453.8 1364.0,453.8 1368.0,453.7 1372.0,453.6 1376.0,453.4 1380.0,453.2 1384.0,453.0 1388.0,452.8 1392.0,452.6 1396.0,452.3 1400.0,452.0 1404.0,451.8 1408.0,451.4 1412.0,451.1 1416.0,450.8 1420.0,450.4 1424.0,450.1 1428.0,449.7 1432.0,449.2 1436.0,448.7 1440.0,448.1 1444.0,447.6 1448.0,447.1 1452.0,446.6 1456.0,446.2 1460.0,445.9 1464.0,445.5 1468.0,445.3 1472.0,445.0 1476.0,444.8 1480.0,444.6 1484.0,444.4 1488.0,444.2 1492.0,444.1 1496.0,443.9 1500.0,443.8 1504.0,443.8 1508.0,443.8 1512.0,443.8 1516.0,443.8 1520.0,443.8 1524.0,443.8 1528.0,443.8 1532.0,443.8 1536.0,443.8 1540.0,443.8 1544.0,443.9 1548.0,443.9 1552.0,444.1 1556.0,444.2 1560.0,444.4 1564.0,444.5 1568.0,444.6 1572.0,444.7 1576.0,444.8 1578.0,444.8" fill="none" stroke="#ffff00" stroke-width="1"/>
<polyline points="12.0,241.5 17.0,242.4 22.0,243.4 27.0,244.3 32.0,245.2 37.0,246.3 42.0,247.5 47.0,248.9 52.0,250.5 57.0,252.2 62.0,253.9 67.0,255.7 72.0,257.5 77.0,259.2 82.0,260.9 87.0,262.6 92.0,264.4 97.0,266.3 102.0,268.3 107.0,270.4 112.0,272.7 117.0,275.0 122.0,277.3 127.0,279.6 132.0,281.9 137.0,284.2 142.0,286.6 147.0,288.9 152.0,291.2 157.0,293.6 162.0,295.9 167.0,298.3 172.0,300.7 177.0,303.0 182.0,305.4 187.0,307.7 192.0,310.0 197.0,312.3 202.0,314.5 207.0,316.7 212.0,318.8 217.0,321.0 222.0,323.2 227.0,325.5 232.0,327.8 237.0,330.2 242.0,332.8 247.0,335.3 252.0,337.9 257.0,340.6 262.0,343.2 267.0,345.8 272.0,348.5 277.0,351.1 282.0,353.4 287.0,355.5 292.0,357.5 297.0,359.4 302.0,361.3 307.0,363.3 312.0,365.4 317.0,367.7 322.0,370.0 327.0,372.5 332.0,375.0 337.0,377.5 342.0,380.1 347.0,382.7 352.0,385.3 357.0,387.9 362.0,390.6 367.0,393.2 372.0,395.9 377.0,398.6 382.0,401.3 387.0,404.0 392.0,406.8 397.0,409.5 402.0,412.3 407.0,415.0 412.0,417.7 417.0,420.5 422.0,423.2 427.0,426.0 432.0,428.8 437.0,431.6 442.0,434.3 447.0,437.1 452.0,439.9 457.0,442.6 462.0,445.3 467.0,448.2 472.0,451.4 477.0,454.6 482.0,457.7 487.0,460.6 492.0,462.9 497.0,464.6 502.0,465.6 507.0,466.4 512.0,467.0 517.0,467.6 522.0,468.2 527.0,468.6 532.0,469.1 537.0,469.5 542.0,470.0 547.0,470.5 552.0,471.0 557.0,471.6 562.0,472.1 567.0,472.7 572.0,473.2 577.0,473.8 582.0,474.3 587.0,474.8 592.0,475.3 597.0,475.7 602.0,476.2 607.0,476.6 612.0,476.9 617.0,477.3 622.0,477.7 627.0,478.0 632.0,478.4 637.0,478.7 642.0,479.0 647.0,479.3 652.0,479.6 657.0,479.9 662.0,480.1 667.0,480.3 672.0,480.6 677.0,480.8 682.0,481.0 687.0,481.2 692.0,481.4 697.0,481.6 702.0,481.8 707.0,481.9 712.0,482.1 717.0,482.3 722.0,482.4 727.0,482.6 732.0,482.8 737.0,482.9 742.0,483.1 747.0,483.2 752.0,483.4 757.0,483.5 762.0,483.7 767.0,483.9 772.0,484.0 777.0,484.2 782.0,484.4 787.0,484.5 792.0,484.6 797.0,484.7 802.0,484.8 807.0,484.9 812.0,485.0 817.0,485.0 822.0,485.0 827.0,484.6 832.0,484.0 837.0,483.1 842.0,482.0 847.0,480.8 852.0,479.7 857.0,478.6 862.0,477.6 867.0,476.7 872.0,475.8 877.0,474.8 882.0,473.8 887.0,472.8 892.0,471.8 897.0,470.7 902.0,469.5 907.0,468.3 912.0,466.9 917.0,465.6 922.0,464.1 927.0,462.7 932.0,461.3 937.0,459.8 942.0,458.3 947.0,456.7 952.0,455.3 957.0,454.0 962.0,452.9 967.0,452.0 972.0,451.1 977.0,450.3 982.0,449.5 987.0,448.8 992.0,448.1 997.0,447.4 1002.0,446.7 1007.0,446.0 1012.0,445.3 1017.0,444.6 1022.0,444.0 1027.0,443.6 1032.0,443.3 1037.0,443.3 1042.0,443.2 1047.0,443.2 1052.0,443.1 1057.0,443.1 1062.0,443.0 1067.0,443.0 1072.0,443.0 1077.0,443.0 1082.0,443.0 1087.0,443.0 1092.0,443.1 1097.0,443.2 1102.0,443.4 1107.0,443.6 1112.0,443.7 1117.0,443.9 1122.0,444.1 1127.0,444.3 1132.0,444.5 1137.0,444.7 1142.0,445.0 1147.0,445.3 1152.0,445.6 1157.0,445.9 1162.0,446.2 1167.0,446.5 1172.0,446.7 1177.0,447.0 1182.0,447.3 1187.0,447.5 1192.0,447.7 1197.0,447.9 1202.0,448.1 1207.0,448.2 1212.0,448.3 1217.0,448.4 1222.0,448.5 1227.0,448.6 1232.0,448.7 1237.0,448.8 1242.0,448.8 1247.0,448.9 1250.0,449.0 1264.0,448.6 1268.0,448.7 1272.0,448.8 1276.0,449.0 1280.0,449.2 1284.0,449.5 1288.0,449.9 1292.0,450.3 1296.0,450.7 1300.0,451.2 1304.0,451.7 1308.0,452.3 1312.0,452.8 1316.0,453.4 1320.0,453.9 1324.0,454.3 1328.0,454.7 1332.0,455.0 1336.0,455.2 1340.0,455.3 1344.0,455.3 1348.0,455.3 1352.0,455.3 1356.0,455.3 1360.0,455.3 1364.0,455.3 1368.0,455.2 1372.0,455.1 1376.0,454.9 1380.0,454.7 1384.0,454.5 1388.0,454.3 1392.0,454.1 1396.0,453.8 1400.0,453.5 1404.0,453.3 1408.0,452.9 1412.0,452.6 1416.0,452.3 1420.0,451.9 1424.0,451.6 1428.0,451.2 1432.0,450.7 1436.0,450.2 1440.0,449.6 1444.0,449.1 1448.0,448.6 1452.0,448.1 1456.0,447.7 1460.0,447.4 1464.0,447.0 1468.0,446.8 1472.0,446.5 1476.0,446.3 1480.0,446.1 1484.0,445.9 1488.0,445.7 1492.0,445.6 1496.0,445.4 1500.0,445.3 1504.0,445.3 1508.0,445.3 1512.0,445.3 1516.0,445.3 1520.0,445.3 1524.0,445.3 1528.0,445.3 1532.0,445.3 1536.0,445.3 1540.0,445.3 1544.0,445.4 1548.0,445.4 1552.0,445.6 1556.0,445.7 1560.0,445.9 1564.0,446.0 1568.0,446.1 1572.0,446.2 1576.0,446.3 1578.0,446.3" fill="none" stroke="#ffff00" stroke-width="1"/>
<polyline points="12.0,246.0 17.0,246.7 22.0,247.3 27.0,248.0 32.0,248.7 37.0,249.5 42.0,250.4 47.0,251.4 52.0,252.6 57.0,253.8 62.0,255.1 67.0,256.6 72.0,258.1 77.0,259.6 82.0,261.4 87.0,263.4 92.0,265.5 97.0,267.7 102.0,269.9 107.0,272.3 112.0,274.8 117.0,277.4 122.0,280.1 127.0,282.7 132.0,285.5 137.0,288.3 142.0,291.2 147.0,294.2 152.0,297.3 157.0,300.3 162.0,303.1 167.0,305.7 172.0,308.2 177.0,310.6 182.0,312.9 187.0,314.8 192.0,317.0 197.0,319.6 202.0,322.5 207.0,325.5 212.0,328.7 217.0,331.7 222.0,334.7 227.0,337.8 232.0,340.9 237.0,344.0 242.0,347.0 247.0,350.0 252.0,352.8 257.0,355.6 262.0,358.2 267.0,360.8 272.0,363.4 277.0,366.0 282.0,368.5 287.0,371.1 292.0,373.6 297.0,376.1 302.0,378.6 307.0,381.1 312.0,383.5 317.0,386.0 322.0,388.4 327.0,390.8 332.0,393.2 337.0,395.6 342.0,398.1 347.0,400.6 352.0,403.3 357.0,406.2 362.0,409.2 367.0,412.5 372.0,415.9 377.0,419.4 382.0,422.9 387.0,426.5 392.0,430.0 397.0,433.4 402.0,436.7 407.0,439.9 412.0,442.8 417.0,445.6 422.0,448.4 427.0,451.1 432.0,453.7 437.0,456.3 442.0,458.8 447.0,461.2 452.0,463.6 457.0,465.9 462.0,468.4 467.0,470.9 472.0,473.4 477.0,475.8 482.0,478.1 487.0,480.1 492.0,481.9 497.0,483.3 502.0,484.4 507.0,485.3 512.0,486.1 517.0,486.8 522.0,487.4 527.0,487.9 532.0,488.4 537.0,488.8 542.0,489.1 547.0,489.4 552.0,489.7 557.0,490.0 562.0,490.3 567.0,490.6 572.0,490.8 577.0,491.0 582.0,491.2 587.0,491.3 592.0,491.4 597.0,491.5 602.0,491.5 607.0,491.5 612.0,491.5 617.0,491.4 622.0,491.4 627.0,491.3 632.0,491.3 637.0,491.2 642.0,491.1 647.0,491.0 652.0,490.9 657.0,490.9 662.0,490.8 667.0,490.7 672.0,490.5 677.0,490.4 682.0,490.2 687.0,490.0 692.0,489.8 697.0,489.6 702.0,489.4 707.0,489.2 712.0,489.0 717.0,488.8 722.0,488.6 727.0,488.4 732.0,488.3 737.0,488.1 742.0,487.9 747.0,487.8 752.0,487.7 757.0,487.6 762.0,487.5 767.0,487.4 772.0,487.3 777.0,487.2 782.0,487.1 787.0,487.0 792.0,486.9 797.0,486.7 802.0,486.6 807.0,486.5 812.0,486.3 817.0,486.1 822.0,485.9 827.0,485.5 832.0,485.0 837.0,484.4 842.0,483.7 847.0,483.0 852.0,482.2 857.0,481.4 862.0,480.7 867.0,479.9 872.0,479.1 877.0,478.3 882.0,477.4 887.0,476.5 892.0,475.6 897.0,474.6 902.0,473.6 907.0,472.5 912.0,471.3 917.0,470.1 922.0,468.9 927.0,467.6 932.0,466.3 937.0,464.9 942.0,463.3 947.0,461.6 952.0,460.1 957.0,458.9 962.0,458.0 967.0,457.3 972.0,456.7 977.0,456.1 982.0,455.6 987.0,455.1 992.0,454.7 997.0,454.3 1002.0,453.8 1007.0,453.4 1012.0,453.1 1017.0,452.7 1022.0,452.4 1027.0,452.1 1032.0,451.8 1037.0,451.4 1042.0,451.1 1047.0,450.8 1052.0,450.5 1057.0,450.2 1062.0,449.9 1067.0,449.6 1072.0,449.3 1077.0,449.1 1082.0,448.9 1087.0,448.8 1092.0,448.6 1097.0,448.4 1102.0,448.3 1107.0,448.1 1112.0,448.1 1117.0,448.0 1122.0,448.0 1127.0,448.0 1132.0,448.1 1137.0,448.2 1142.0,448.3 1147.0,448.4 1152.0,448.6 1157.0,448.8 1162.0,448.9 1167.0,449.1 1172.0,449.3 1177.0,449.4 1182.0,449.6 1187.0,449.7 1192.0,449.9 1197.0,450.0 1202.0,450.0 1207.0,450.1 1212.0,450.1 1217.0,450.2 1222.0,450.2 1227.0,450.3 1232.0,450.3 1237.0,450.4 1242.0,450.4 1247.0,450.5 1250.0,450.5 1264.0,450.1 1268.0,450.2 1272.0,450.3 1276.0,450.5 1280.0,450.7 1284.0,451.0 1288.0,451.4 1292.0,451.8 1296.0,452.2 1300.0,452.7 1304.0,453.2 1308.0,453.8 1312.0,454.3 1316.0,454.9 1320.0,455.4 1324.0,455.8 1328.0,456.2 1332.0,456.5 1336.0,456.7 1340.0,456.8 1344.0,456.8 1348.0,456.8 1352.0,456.8 1356.0,456.8 1360.0,456.8 1364.0,456.8 1368.0,456.7 1372.0,456.6 1376.0,456.4 1380.0,456.2 1384.0,456.0 1388.0,455.8 1392.0,455.6 1396.0,455.3 1400.0,455.0 1404.0,454.8 1408.0,454.4 1412.0,454.1 1416.0,453.8 1420.0,453.4 1424.0,453.1 1428.0,452.7 1432.0,452.2 1436.0,451.7 1440.0,451.1 1444.0,450.6 1448.0,450.1 1452.0,449.6 1456.0,449.2 1460.0,448.9 1464.0,448.5 1468.0,448.3 1472.0,448.0 1476.0,447.8 1480.0,447.6 1484.0,447.4 1488.0,447.2 1492.0,447.1 1496.0,446.9 1500.0,446.8 1504.0,446.8 1508.0,446.8 1512.0,446.8 1516.0,446.8 1520.0,446.8 1524.0,446.8 1528.0,446.8 1532.0,446.8 1536.0,446.8 1540.0,446.8 1544.0,446.9 1548.0,446.9 1552.0,447.1 1556.0,447.2 1560.0,447.4 1564.0,447.5 1568.0,447.6 1572.0,447.7 1576.0,447.8 1578.0,447.8" fill="none" stroke="#ffff00" stroke-width="1"/>
<polyline points="12.0,249.5 17.0,249.9 22.0,250.3 27.0,250.7 32.0,251.1 37.0,251.6 42.0,252.3 47.0,253.0 52.0,253.9 57.0,254.9 62.0,256.1 67.0,257.3 72.0,258.7 77.0,260.1 82.0,262.1 87.0,264.5 92.0,267.0 97.0,269.9 102.0,272.9 107.0,276.1 112.0,279.3 117.0,282.4 122.0,285.7 127.0,289.0 132.0,292.4 137.0,295.8 142.0,299.4 147.0,302.9 152.0,306.4 157.0,309.9 162.0,313.4 167.0,316.9 172.0,320.4 177.0,324.2 182.0,327.9 187.0,331.4 192.0,334.8 197.0,338.1 202.0,341.2 207.0,344.0 212.0,346.6 217.0,349.2 222.0,351.8 227.0,354.5 232.0,357.4 237.0,360.5 242.0,363.9 247.0,367.4 252.0,371.0 257.0,374.5 262.0,378.0 267.0,381.3 272.0,384.6 277.0,387.7 282.0,390.5 287.0,393.1 292.0,395.6 297.0,397.9 302.0,400.3 307.0,402.8 312.0,405.3 317.0,408.0 322.0,410.8 327.0,413.6 332.0,416.5 337.0,419.4 342.0,422.4 347.0,425.3 352.0,428.2 357.0,431.2 362.0,434.1 367.0,437.1 372.0,440.2 377.0,443.2 382.0,446.2 387.0,449.3 392.0,452.3 397.0,455.3 402.0,458.2 407.0,461.1 412.0,464.0 417.0,466.7 422.0,469.3 427.0,471.9 432.0,474.4 437.0,476.9 442.0,479.3 447.0,481.7 452.0,484.2 457.0,486.6 462.0,489.0 467.0,491.6 472.0,494.4 477.0,497.3 482.0,500.0 487.0,502.5 492.0,504.5 497.0,506.1 502.0,507.0 507.0,507.8 512.0,508.4 517.0,508.8 522.0,509.0 527.0,509.0 532.0,508.9 537.0,508.7 542.0,508.4 547.0,508.1 552.0,507.7 557.0,507.3 562.0,506.9 567.0,506.5 572.0,506.1 577.0,505.6 582.0,505.1 587.0,504.5 592.0,503.9 597.0,503.2 602.0,502.5 607.0,501.8 612.0,501.1 617.0,500.4 622.0,499.7 627.0,499.1 632.0,498.4 637.0,497.7 642.0,497.0 647.0,496.4 652.0,495.8 657.0,495.3 662.0,494.8 667.0,494.4 672.0,494.0 677.0,493.7 682.0,493.3 687.0,493.0 692.0,492.6 697.0,492.3 702.0,492.0 707.0,491.7 712.0,491.4 717.0,491.2 722.0,490.9 727.0,490.6 732.0,490.4 737.0,490.1 742.0,489.9 747.0,489.7 752.0,489.5 757.0,489.3 762.0,489.1 767.0,489.0 772.0,488.8 777.0,488.7 782.0,488.5 787.0,488.4 792.0,488.2 797.0,488.0 802.0,487.8 807.0,487.6 812.0,487.4 817.0,487.2 822.0,486.9 827.0,486.5 832.0,486.1 837.0,485.6 842.0,485.1 847.0,484.5 852.0,483.9 857.0,483.3 862.0,482.8 867.0,482.2 872.0,481.7 877.0,481.1 882.0,480.5 887.0,479.9 892.0,479.2 897.0,478.5 902.0,477.7 907.0,476.8 912.0,475.8 917.0,474.7 922.0,473.6 927.0,472.4 932.0,471.2 937.0,469.9 942.0,468.3 947.0,466.6 952.0,465.0 957.0,463.8 962.0,463.1 967.0,462.5 972.0,462.0 977.0,461.6 982.0,461.2 987.0,460.8 992.0,460.5 997.0,460.2 1002.0,459.9 1007.0,459.6 1012.0,459.3 1017.0,459.1 1022.0,458.9 1027.0,458.6 1032.0,458.4 1037.0,458.1 1042.0,457.7 1047.0,457.4 1052.0,457.0 1057.0,456.6 1062.0,456.2 1067.0,455.9 1072.0,455.5 1077.0,455.2 1082.0,454.9 1087.0,454.6 1092.0,454.3 1097.0,454.0 1102.0,453.7 1107.0,453.4 1112.0,453.2 1117.0,453.1 1122.0,453.0 1127.0,452.9 1132.0,452.8 1137.0,452.7 1142.0,452.6 1147.0,452.5 1152.0,452.4 1157.0,452.3 1162.0,452.3 1167.0,452.2 1172.0,452.2 1177.0,452.1 1182.0,452.1 1187.0,452.0 1192.0,452.0 1197.0,452.0 1202.0,452.0 1207.0,452.0 1212.0,452.0 1217.0,452.0 1222.0,452.0 1227.0,452.0 1232.0,452.0 1237.0,452.0 1242.0,452.0 1247.0,452.0 1250.0,452.0 1264.0,451.5 1268.0,451.6 1272.0,451.7 1276.0,451.9 1280.0,452.1 1284.0,452.4 1288.0,452.8 1292.0,453.2 1296.0,453.6 1300.0,454.1 1304.0,454.6 1308.0,455.2 1312.0,455.7 1316.0,456.3 1320.0,456.8 1324.0,457.2 1328.0,457.6 1332.0,457.9 1336.0,458.1 1340.0,458.2 1344.0,458.2 1348.0,458.2 1352.0,458.2 1356.0,458.2 1360.0,458.2 1364.0,458.2 1368.0,458.1 1372.0,458.0 1376.0,457.8 1380.0,457.6 1384.0,457.4 1388.0,457.2 1392.0,457.0 1396.0,456.7 1400.0,456.4 1404.0,456.2 1408.0,455.8 1412.0,455.5 1416.0,455.2 1420.0,454.8 1424.0,454.5 1428.0,454.1 1432.0,453.6 1436.0,453.1 1440.0,452.5 1444.0,452.0 1448.0,451.5 1452.0,451.0 1456.0,450.6 1460.0,450.3 1464.0,449.9 1468.0,449.7 1472.0,449.4 1476.0,449.2 1480.0,449.0 1484.0,448.8 1488.0,448.6 1492.0,448.5 1496.0,448.3 1500.0,448.2 1504.0,448.2 1508.0,448.2 1512.0,448.2 1516.0,448.2 1520.0,448.2 1524.0,448.2 1528.0,448.2 1532.0,448.2 1536.0,448.2 1540.0,448.2 1544.0,448.3 1548.0,448.3 1552.0,448.5 1556.0,448.6 1560.0,448.8 1564.0,448.9 1568.0,449.0 1572.0,449.1 1576.0,449.2 1578.0,449.2" fill="none" stroke="#ffff00" stroke-width="1"/>
<polyline points="12.0,233.3 16.0,234.3 20.0,235.6 24.0,237.3 28.0,239.2 32.0,241.1 36.0,242.8 40.0,244.3 44.0,245.7 48.0,247.4 52.0,249.4 56.0,251.6 60.0,253.8 64.0,256.0 68.0,258.2 72.0,260.8 76.0,263.7 80.0,266.9 84.0,270.1 88.0,273.1 92.0,276.1 96.0,279.0 100.0,281.8 104.0,284.4 108.0,286.9 112.0,289.4 116.0,292.1 120.0,295.0 124.0,298.2 128.0,301.7 132.0,305.2 136.0,308.9 140.0,312.6 144.0,316.3 148.0,320.0 152.0,323.7 156.0,327.3 160.0,330.8 164.0,334.2 168.0,337.4 172.0,340.3 176.0,343.1 180.0,345.8 184.0,348.4 188.0,350.9 192.0,353.3 196.0,355.6 200.0,358.0 204.0,360.4 208.0,362.7 212.0,365.1 216.0,367.6 220.0,370.2 224.0,372.9 228.0,375.7 232.0,378.8 236.0,382.1 240.0,385.6 244.0,389.3 248.0,392.9 252.0,396.3 256.0,399.5 260.0,402.6 264.0,405.5 268.0,408.3 272.0,410.9 276.0,413.3 280.0,415.6 284.0,417.8 288.0,419.9 292.0,422.0 296.0,423.9 300.0,425.8 304.0,427.6 308.0,429.3 312.0,431.0 316.0,432.9 320.0,434.8 324.0,436.9 328.0,439.0 332.0,441.2 336.0,443.5 340.0,445.8 344.0,448.1 348.0,450.4 352.0,452.5 356.0,454.6 360.0,456.6 364.0,458.7 368.0,460.9 372.0,463.2 376.0,465.6 380.0,468.0 384.0,470.5 388.0,472.9 392.0,475.4 396.0,477.9 400.0,480.4 404.0,482.9 408.0,485.4 412.0,487.8 416.0,490.2 420.0,492.2 424.0,494.0 428.0,495.7 432.0,497.2 436.0,498.7 440.0,500.3 444.0,501.9 448.0,503.6 452.0,505.3 456.0,507.0 460.0,508.7 464.0,510.3 468.0,511.9 472.0,513.4 476.0,514.8 480.0,516.0 484.0,517.2 488.0,518.4 492.0,519.5 496.0,520.6 500.0,521.6 504.0,522.4 508.0,523.0 512.0,523.3 516.0,523.3 520.0,523.1 524.0,522.7 528.0,522.1 532.0,521.3 536.0,520.4 540.0,519.5 544.0,518.6 548.0,517.6 552.0,516.3 556.0,514.8 560.0,513.1 564.0,511.5 568.0,510.1 572.0,508.8 576.0,507.7 580.0,506.7 584.0,505.9 588.0,505.1 592.0,504.5 596.0,503.8 600.0,503.1 604.0,502.2 608.0,501.3 612.0,500.3 616.0,499.3 620.0,498.4 624.0,497.6 628.0,496.8 632.0,495.9 636.0,495.0 640.0,494.1 644.0,493.1 648.0,492.2 652.0,491.2 656.0,490.2 660.0,489.3 664.0,488.4 668.0,487.6 672.0,487.0 676.0,486.6 680.0,486.2 684.0,486.0 688.0,485.9 692.0,485.8 696.0,485.7 700.0,485.6 704.0,485.4 708.0,485.2 712.0,485.0 716.0,484.9 720.0,484.9 724.0,485.1 728.0,485.3 732.0,485.6 736.0,485.7 740.0,485.8 744.0,485.8 748.0,485.7 752.0,485.6 756.0,485.5 760.0,485.3 764.0,485.0 768.0,484.5 772.0,483.9 776.0,483.1 780.0,482.4 784.0,481.6 788.0,480.9 792.0,480.3 796.0,479.6 800.0,478.9 804.0,478.1 808.0,477.3 812.0,476.5 816.0,475.6 820.0,474.7 824.0,473.8 828.0,472.9 832.0,472.0 836.0,471.1 840.0,470.3 844.0,469.5 848.0,468.7 852.0,467.9 856.0,467.1 860.0,466.4 864.0,465.6 868.0,464.8 872.0,464.0 876.0,463.1 880.0,462.2 884.0,461.3 888.0,460.2 892.0,459.0 896.0,457.9 900.0,456.7 904.0,455.5 908.0,454.3 912.0,453.1 916.0,451.8 920.0,450.5 924.0,449.1 928.0,447.7 932.0,446.4 936.0,445.2 940.0,444.2 944.0,443.4 948.0,442.7 952.0,442.2 956.0,441.8 960.0,441.4 964.0,440.9 968.0,440.4 972.0,439.7 976.0,439.0 980.0,438.3 984.0,437.8 988.0,437.4 992.0,437.1 996.0,436.9 1000.0,436.7 1004.0,436.5 1008.0,436.3 1012.0,436.1 1016.0,435.9 1020.0,435.9 1024.0,435.8 1028.0,435.8 1032.0,435.9 1036.0,436.0 1040.0,436.2 1044.0,436.4 1048.0,436.5 1052.0,436.6 1056.0,436.7 1060.0,436.7 1064.0,436.7 1068.0,436.7 1072.0,436.7 1076.0,436.6 1080.0,436.5 1084.0,436.1 1088.0,435.5 1092.0,434.8 1096.0,434.0 1100.0,433.4 1104.0,433.0 1108.0,432.8 1112.0,432.7 1116.0,432.8 1120.0,432.9 1124.0,433.2 1128.0,433.6 1132.0,434.0 1136.0,434.5 1140.0,435.1 1144.0,435.7 1148.0,436.4 1152.0,436.9 1156.0,437.5 1160.0,438.1 1164.0,438.6 1168.0,439.2 1172.0,439.9 1176.0,440.5 1180.0,441.2 1184.0,441.9 1188.0,442.7 1192.0,443.4 1196.0,444.1 1200.0,444.8 1204.0,445.3 1208.0,445.8 1212.0,446.2 1216.0,446.5 1220.0,446.8 1224.0,447.0 1228.0,447.2 1232.0,447.4 1236.0,447.6 1240.0,447.8 1244.0,448.0 1248.0,448.1 1252.0,448.2 1256.0,448.3 1260.0,448.3 1264.0,448.3 1268.0,448.4 1272.0,448.5 1276.0,448.7 1280.0,448.9 1284.0,449.2 1288.0,449.6 1292.0,450.0 1296.0,450.4 1300.0,450.9 1304.0,451.4 1308.0,452.0 1312.0,452.5 1316.0,453.1 1320.0,453.6 1324.0,454.0 1328.0,454.4 1332.0,454.7 1336.0,454.9 1340.0,455.0 1344.0,455.0 1348.0,455.0 1352.0,455.0 1356.0,455.0 1360.0,455.0 1364.0,455.0 1368.0,454.9 1372.0,454.8 1376.0,454.6 1380.0,454.4 1384.0,454.2 1388.0,454.0 1392.0,453.8 1396.0,453.5 1400.0,453.2 1404.0,453.0 1408.0,452.6 1412.0,452.3 1416.0,452.0 1420.0,451.6 1424.0,451.3 1428.0,450.9 1432.0,450.4 1436.0,449.9 1440.0,449.3 1444.0,448.8 1448.0,448.3 1452.0,447.8 1456.0,447.4 1460.0,447.1 1464.0,446.7 1468.0,446.5 1472.0,446.2 1476.0,446.0 1480.0,445.8 1484.0,445.6 1488.0,445.4 1492.0,445.3 1496.0,445.1 1500.0,445.0 1504.0,445.0 1508.0,445.0 1512.0,445.0 1516.0,445.0 1520.0,445.0 1524.0,445.0 1528.0,445.0 1532.0,445.0 1536.0,445.0 1540.0,445.0 1544.0,445.1 1548.0,445.1 1552.0,445.3 1556.0,445.4 1560.0,445.6 1564.0,445.7 1568.0,445.8 1572.0,445.9 1576.0,446.0 1578.0,446.0" fill="none" stroke="#00ff00" stroke-width="4.4" stroke-linejoin="round" shape-rendering="geometricPrecision"/>
</g>
<g fill="none" shape-rendering="crispEdges">
<polyline points="12.9,260.4 23.6,271.1 34.4,282.8 45.1,294.6 55.8,307.6 66.5,321.5 77.3,335.7 88.0,350.9 98.7,370.2 109.4,379.2 120.2,389.9 130.9,408.0 141.6,423.2 152.4,438.0 163.1,449.1 173.8,452.5 184.5,454.0 195.3,454.6 206.0,453.0 216.7,451.7 227.4,450.4 238.2,457.6 248.9,468.2 259.6,477.7 270.3,483.7 281.1,484.9 291.8,485.4 302.5,485.6 313.3,484.8 324.0,484.1 334.7,485.6 345.4,489.4 356.2,496.9 366.9,503.4 377.6,511.4 388.3,520.9 399.1,531.1 409.8,542.0 420.5,553.9 431.3,560.1 442.0,559.9 452.7,558.7 463.4,557.6 474.2,557.0 484.9,560.0 495.6,560.0 506.3,555.2 517.1,546.0 527.8,534.3 538.5,519.5 549.2,503.2 560.0,487.5 570.7,466.2 581.4,463.0 592.2,462.8 602.9,458.4 613.6,454.9 624.3,459.4 635.1,458.3 645.8,453.4 656.5,451.6 667.2,452.3 678.0,455.7 688.7,462.5 699.4,468.6 710.2,471.0 720.9,474.7 731.6,487.0 742.3,490.8 753.1,490.7 763.8,492.5 774.5,494.4 785.2,485.6 796.0,477.7 806.7,469.9 817.4,465.4 828.2,459.8 838.9,457.3 849.6,453.8 860.3,451.1 871.1,448.3 881.8,444.9 892.5,436.3 903.2,427.0 914.0,417.6 924.7,408.0 935.4,405.0 946.1,400.1 956.9,406.3 967.6,409.7 978.3,413.3 989.1,412.3 999.8,418.2 1010.5,420.7 1021.2,425.1 1032.0,430.5 1042.7,437.9 1053.4,444.9 1064.1,447.3 1074.9,446.3 1085.6,445.1 1096.3,436.9 1107.1,432.2 1117.8,436.1 1128.5,439.6 1139.2,445.9 1150.0,455.7 1160.7,460.8 1171.4,461.2 1182.1,462.6 1192.9,467.2 1203.6,468.2 1214.3,467.4 1225.1,463.9 1235.8,459.7 1246.5,457.9 1257.2,457.5 1268.0,459.1 1278.7,454.2 1289.4,454.7 1300.1,455.5 1310.9,462.4 1321.6,464.6 1332.3,464.3 1343.0,462.8 1353.8,459.7 1364.5,457.5 1375.2,454.7 1386.0,452.3 1396.7,449.2 1407.4,446.0 1418.1,439.6 1428.9,435.2 1439.6,431.0 1450.3,430.7 1461.0,431.0 1471.8,432.3 1482.5,432.0 1493.2,432.0 1504.0,433.5 1514.7,437.6 1525.4,440.2 1536.1,442.2 1546.9,445.1 1557.6,446.8 1568.3,450.4 1579.0,453.5" fill="none" stroke="#000" stroke-width="1"/>
<polyline points="12.9,260.4 23.6,271.1 34.4,282.8 45.1,294.6 55.8,307.6 66.5,321.5 77.3,335.7 88.0,350.9 98.7,370.2 109.4,379.2 120.2,389.9 130.9,408.0 141.6,423.2 152.4,438.0 163.1,449.1 173.8,452.5 184.5,454.0 195.3,454.6 206.0,453.0 216.7,451.7 227.4,450.4 238.2,457.6 248.9,468.2 259.6,477.7 270.3,483.7 281.1,484.9 291.8,485.4 302.5,485.6 313.3,484.8 324.0,484.1 334.7,485.6 345.4,489.4 356.2,496.9 366.9,503.4 377.6,511.4 388.3,520.9 399.1,531.1 409.8,542.0 420.5,553.9 431.3,560.1 442.0,559.9 452.7,558.7 463.4,557.6 474.2,557.0 484.9,560.0 495.6,560.0 506.3,555.2 517.1,546.0 527.8,534.3 538.5,519.5 549.2,503.2 560.0,487.5 570.7,466.2 581.4,463.0 592.2,462.8 602.9,458.4 613.6,454.9 624.3,459.4 635.1,458.3 645.8,453.4 656.5,451.6 667.2,452.3 678.0,455.7 688.7,462.5 699.4,468.6 710.2,471.0 720.9,474.7 731.6,487.0 742.3,490.8 753.1,490.7 763.8,492.5 774.5,494.4 785.2,485.6 796.0,477.7 806.7,469.9 817.4,465.4 828.2,459.8 838.9,457.3 849.6,453.8 860.3,451.1 871.1,448.3 881.8,444.9 892.5,436.3 903.2,427.0 914.0,417.6 924.7,408.0 935.4,405.0 946.1,400.1 956.9,406.3 967.6,409.7 978.3,413.3 989.1,412.3 999.8,418.2 1010.5,420.7 1021.2,425.1 1032.0,430.5 1042.7,437.9 1053.4,444.9 1064.1,447.3 1074.9,446.3 1085.6,445.1 1096.3,436.9 1107.1,432.2 1117.8,436.1 1128.5,439.6 1139.2,445.9 1150.0,455.7 1160.7,460.8 1171.4,461.2 1182.1,462.6 1192.9,467.2 1203.6,468.2 1214.3,467.4 1225.1,463.9 1235.8,459.7 1246.5,457.9 1257.2,457.5 1268.0,459.1 1278.7,454.2 1289.4,454.7 1300.1,455.5 1310.9,462.4 1321.6,464.6 1332.3,464.3 1343.0,462.8 1353.8,459.7 1364.5,457.5 1375.2,454.7 1386.0,452.3 1396.7,449.2 1407.4,446.0 1418.1,439.6 1428.9,435.2 1439.6,431.0 1450.3,430.7 1461.0,431.0 1471.8,432.3 1482.5,432.0 1493.2,432.0 1504.0,433.5 1514.7,437.6 1525.4,440.2 1536.1,442.2 1546.9,445.1 1557.6,446.8 1568.3,450.4 1579.0,453.5" fill="none" stroke="#ff0000" stroke-width="1" stroke-dasharray="3,3"/>
<polyline points="12.9,247.5 23.6,252.8 34.4,261.7 45.1,270.5 55.8,281.6 66.5,293.8 77.3,303.3 88.0,318.4 98.7,332.7 109.4,341.0 120.2,352.7 130.9,368.8 141.6,381.4 152.4,397.9 163.1,407.8 173.8,413.8 184.5,417.1 195.3,421.8 206.0,423.6 216.7,426.1 227.4,428.9 238.2,436.8 248.9,448.7 259.6,457.0 270.3,465.0 281.1,466.5 291.8,468.1 302.5,469.1 313.3,469.1 324.0,470.8 334.7,474.1 345.4,479.2 356.2,486.9 366.9,492.5 377.6,496.7 388.3,506.2 399.1,513.0 409.8,521.3 420.5,532.7 431.3,537.8 442.0,538.1 452.7,538.4 463.4,540.1 474.2,542.8 484.9,546.1 495.6,548.6 506.3,547.2 517.1,540.9 527.8,531.4 538.5,520.8 549.2,513.5 560.0,500.5 570.7,487.3 581.4,482.8 592.2,480.1 602.9,475.4 613.6,471.2 624.3,471.4 635.1,469.2 645.8,465.0 656.5,462.5 667.2,461.3 678.0,462.0 688.7,464.9 699.4,467.9 710.2,469.3 720.9,471.6 731.6,478.8 742.3,482.1 753.1,483.2 763.8,485.3 774.5,487.3 785.2,483.4 796.0,479.4 806.7,474.8 817.4,471.7 828.2,467.7 838.9,465.3 849.6,462.2 860.3,459.5 871.1,456.9 881.8,453.8 892.5,447.8 903.2,441.1 914.0,434.0 924.7,426.4 935.4,422.2 946.1,417.1 956.9,418.2 967.6,418.5 978.3,419.2 989.1,417.9 999.8,420.4 1010.5,421.5 1021.2,423.7 1032.0,426.9 1042.7,431.5 1053.4,436.3 1064.1,438.8 1074.9,439.4 1085.6,439.7 1096.3,435.9 1107.1,433.4 1117.8,435.4 1128.5,437.4 1139.2,441.2 1150.0,447.3 1160.7,451.2 1171.4,452.8 1182.1,454.7 1192.9,458.4 1203.6,460.1 1214.3,460.8 1225.1,459.8 1235.8,458.0 1246.5,457.3 1257.2,457.1 1268.0,458.1 1278.7,455.5 1289.4,455.6 1300.1,455.9 1310.9,459.6 1321.6,461.3 1332.3,461.5 1343.0,461.1 1353.8,459.6 1364.5,458.4 1375.2,456.7 1386.0,455.1 1396.7,453.1 1407.4,450.7 1418.1,446.5 1428.9,443.2 1439.6,439.7 1450.3,438.4 1461.0,437.5 1471.8,437.3 1482.5,436.5 1493.2,435.9 1504.0,436.2 1514.7,438.1 1525.4,439.4 1536.1,440.6 1546.9,442.5 1557.6,443.8 1568.3,446.2 1579.0,448.5" fill="none" stroke="#000" stroke-width="1"/>
<polyline points="12.9,247.5 23.6,252.8 34.4,261.7 45.1,270.5 55.8,281.6 66.5,293.8 77.3,303.3 88.0,318.4 98.7,332.7 109.4,341.0 120.2,352.7 130.9,368.8 141.6,381.4 152.4,397.9 163.1,407.8 173.8,413.8 184.5,417.1 195.3,421.8 206.0,423.6 216.7,426.1 227.4,428.9 238.2,436.8 248.9,448.7 259.6,457.0 270.3,465.0 281.1,466.5 291.8,468.1 302.5,469.1 313.3,469.1 324.0,470.8 334.7,474.1 345.4,479.2 356.2,486.9 366.9,492.5 377.6,496.7 388.3,506.2 399.1,513.0 409.8,521.3 420.5,532.7 431.3,537.8 442.0,538.1 452.7,538.4 463.4,540.1 474.2,542.8 484.9,546.1 495.6,548.6 506.3,547.2 517.1,540.9 527.8,531.4 538.5,520.8 549.2,513.5 560.0,500.5 570.7,487.3 581.4,482.8 592.2,480.1 602.9,475.4 613.6,471.2 624.3,471.4 635.1,469.2 645.8,465.0 656.5,462.5 667.2,461.3 678.0,462.0 688.7,464.9 699.4,467.9 710.2,469.3 720.9,471.6 731.6,478.8 742.3,482.1 753.1,483.2 763.8,485.3 774.5,487.3 785.2,483.4 796.0,479.4 806.7,474.8 817.4,471.7 828.2,467.7 838.9,465.3 849.6,462.2 860.3,459.5 871.1,456.9 881.8,453.8 892.5,447.8 903.2,441.1 914.0,434.0 924.7,426.4 935.4,422.2 946.1,417.1 956.9,418.2 967.6,418.5 978.3,419.2 989.1,417.9 999.8,420.4 1010.5,421.5 1021.2,423.7 1032.0,426.9 1042.7,431.5 1053.4,436.3 1064.1,438.8 1074.9,439.4 1085.6,439.7 1096.3,435.9 1107.1,433.4 1117.8,435.4 1128.5,437.4 1139.2,441.2 1150.0,447.3 1160.7,451.2 1171.4,452.8 1182.1,454.7 1192.9,458.4 1203.6,460.1 1214.3,460.8 1225.1,459.8 1235.8,458.0 1246.5,457.3 1257.2,457.1 1268.0,458.1 1278.7,455.5 1289.4,455.6 1300.1,455.9 1310.9,459.6 1321.6,461.3 1332.3,461.5 1343.0,461.1 1353.8,459.6 1364.5,458.4 1375.2,456.7 1386.0,455.1 1396.7,453.1 1407.4,450.7 1418.1,446.5 1428.9,443.2 1439.6,439.7 1450.3,438.4 1461.0,437.5 1471.8,437.3 1482.5,436.5 1493.2,435.9 1504.0,436.2 1514.7,438.1 1525.4,439.4 1536.1,440.6 1546.9,442.5 1557.6,443.8 1568.3,446.2 1579.0,448.5" fill="none" stroke="#ff0000" stroke-width="1" stroke-dasharray="3,3"/>
<polyline points="12.9,241.0 23.6,245.7 34.4,253.2 45.1,260.9 55.8,270.4 66.5,280.9 77.3,289.5 88.0,302.5 98.7,315.0 109.4,323.3 120.2,334.1 130.9,348.3 141.6,360.1 152.4,374.9 163.1,384.8 173.8,391.8 184.5,396.7 195.3,402.4 206.0,405.8 216.7,409.6 227.4,413.5 238.2,421.1 248.9,431.8 259.6,440.0 270.3,447.9 281.1,450.9 291.8,453.7 302.5,456.0 313.3,457.3 324.0,459.9 334.7,463.6 345.4,468.6 356.2,475.6 366.9,481.0 377.6,485.5 388.3,493.8 399.1,500.4 409.8,508.0 420.5,518.1 431.3,523.5 442.0,525.3 452.7,526.9 463.4,529.4 474.2,532.6 484.9,536.2 495.6,539.1 506.3,539.1 517.1,535.1 527.8,528.5 538.5,520.7 549.2,515.1 560.0,505.0 570.7,494.4 581.4,490.3 592.2,487.4 602.9,483.1 613.6,479.1 624.3,478.4 635.1,476.0 645.8,472.1 656.5,469.4 667.2,467.8 678.0,467.6 688.7,469.2 699.4,471.1 710.2,471.8 720.9,473.3 731.6,478.6 742.3,481.1 753.1,482.1 763.8,483.8 774.5,485.5 785.2,482.7 796.0,479.7 806.7,476.2 817.4,473.6 828.2,470.4 838.9,468.3 849.6,465.6 860.3,463.2 871.1,460.8 881.8,458.0 892.5,453.0 903.2,447.4 914.0,441.2 924.7,434.7 935.4,430.6 946.1,425.9 956.9,425.8 967.6,425.2 978.3,425.1 989.1,423.4 999.8,424.7 1010.5,425.1 1021.2,426.5 1032.0,428.6 1042.7,431.9 1053.4,435.5 1064.1,437.5 1074.9,438.1 1085.6,438.5 1096.3,435.7 1107.1,433.8 1117.8,435.3 1128.5,436.9 1139.2,439.8 1150.0,444.6 1160.7,447.9 1171.4,449.4 1182.1,451.3 1192.9,454.4 1203.6,456.1 1214.3,457.1 1225.1,456.7 1235.8,455.7 1246.5,455.3 1257.2,455.4 1268.0,456.3 1278.7,454.6 1289.4,454.7 1300.1,455.1 1310.9,458.0 1321.6,459.4 1332.3,459.8 1343.0,459.7 1353.8,458.7 1364.5,457.9 1375.2,456.6 1386.0,455.4 1396.7,453.8 1407.4,452.0 1418.1,448.6 1428.9,445.8 1439.6,442.9 1450.3,441.6 1461.0,440.6 1471.8,440.1 1482.5,439.2 1493.2,438.4 1504.0,438.4 1514.7,439.6 1525.4,440.5 1536.1,441.3 1546.9,442.6 1557.6,443.6 1568.3,445.4 1579.0,447.3" fill="none" stroke="#000" stroke-width="1"/>
<polyline points="12.9,241.0 23.6,245.7 34.4,253.2 45.1,260.9 55.8,270.4 66.5,280.9 77.3,289.5 88.0,302.5 98.7,315.0 109.4,323.3 120.2,334.1 130.9,348.3 141.6,360.1 152.4,374.9 163.1,384.8 173.8,391.8 184.5,396.7 195.3,402.4 206.0,405.8 216.7,409.6 227.4,413.5 238.2,421.1 248.9,431.8 259.6,440.0 270.3,447.9 281.1,450.9 291.8,453.7 302.5,456.0 313.3,457.3 324.0,459.9 334.7,463.6 345.4,468.6 356.2,475.6 366.9,481.0 377.6,485.5 388.3,493.8 399.1,500.4 409.8,508.0 420.5,518.1 431.3,523.5 442.0,525.3 452.7,526.9 463.4,529.4 474.2,532.6 484.9,536.2 495.6,539.1 506.3,539.1 517.1,535.1 527.8,528.5 538.5,520.7 549.2,515.1 560.0,505.0 570.7,494.4 581.4,490.3 592.2,487.4 602.9,483.1 613.6,479.1 624.3,478.4 635.1,476.0 645.8,472.1 656.5,469.4 667.2,467.8 678.0,467.6 688.7,469.2 699.4,471.1 710.2,471.8 720.9,473.3 731.6,478.6 742.3,481.1 753.1,482.1 763.8,483.8 774.5,485.5 785.2,482.7 796.0,479.7 806.7,476.2 817.4,473.6 828.2,470.4 838.9,468.3 849.6,465.6 860.3,463.2 871.1,460.8 881.8,458.0 892.5,453.0 903.2,447.4 914.0,441.2 924.7,434.7 935.4,430.6 946.1,425.9 956.9,425.8 967.6,425.2 978.3,425.1 989.1,423.4 999.8,424.7 1010.5,425.1 1021.2,426.5 1032.0,428.6 1042.7,431.9 1053.4,435.5 1064.1,437.5 1074.9,438.1 1085.6,438.5 1096.3,435.7 1107.1,433.8 1117.8,435.3 1128.5,436.9 1139.2,439.8 1150.0,444.6 1160.7,447.9 1171.4,449.4 1182.1,451.3 1192.9,454.4 1203.6,456.1 1214.3,457.1 1225.1,456.7 1235.8,455.7 1246.5,455.3 1257.2,455.4 1268.0,456.3 1278.7,454.6 1289.4,454.7 1300.1,455.1 1310.9,458.0 1321.6,459.4 1332.3,459.8 1343.0,459.7 1353.8,458.7 1364.5,457.9 1375.2,456.6 1386.0,455.4 1396.7,453.8 1407.4,452.0 1418.1,448.6 1428.9,445.8 1439.6,442.9 1450.3,441.6 1461.0,440.6 1471.8,440.1 1482.5,439.2 1493.2,438.4 1504.0,438.4 1514.7,439.6 1525.4,440.5 1536.1,441.3 1546.9,442.6 1557.6,443.6 1568.3,445.4 1579.0,447.3" fill="none" stroke="#ff0000" stroke-width="1" stroke-dasharray="3,3"/>
<polyline points="12.9,235.0 23.6,239.4 34.4,246.2 45.1,253.1 55.8,261.6 66.5,271.1 77.3,279.0 88.0,290.7 98.7,302.1 109.4,310.0 120.2,320.1 130.9,333.0 141.6,344.1 152.4,357.7 163.1,367.4 173.8,374.7 184.5,380.2 195.3,386.4 206.0,390.6 216.7,395.1 227.4,399.5 238.2,407.0 248.9,417.1 259.6,425.1 270.3,432.9 281.1,436.7 291.8,440.3 302.5,443.3 313.3,445.5 324.0,448.7 334.7,452.7 345.4,457.8 356.2,464.5 366.9,470.0 377.6,474.6 388.3,482.5 399.1,488.9 409.8,496.2 420.5,505.5 431.3,511.1 442.0,513.6 452.7,515.9 463.4,519.0 474.2,522.5 484.9,526.4 495.6,529.7 506.3,530.4 517.1,527.9 527.8,523.1 538.5,517.1 549.2,512.8 560.0,504.7 570.7,496.0 581.4,492.4 592.2,489.8 602.9,486.0 613.6,482.5 624.3,481.6 635.1,479.4 645.8,475.8 656.5,473.3 667.2,471.6 678.0,471.1 688.7,472.2 699.4,473.5 710.2,473.9 720.9,474.9 731.6,479.2 742.3,481.2 753.1,482.0 763.8,483.4 774.5,484.8 785.2,482.6 796.0,480.1 806.7,477.2 817.4,475.0 828.2,472.2 838.9,470.3 849.6,467.9 860.3,465.7 871.1,463.5 881.8,461.0 892.5,456.6 903.2,451.6 914.0,446.2 924.7,440.4 935.4,436.5 946.1,432.1 956.9,431.4 967.6,430.4 978.3,429.9 989.1,428.1 999.8,428.8 1010.5,428.7 1021.2,429.5 1032.0,431.1 1042.7,433.6 1053.4,436.4 1064.1,438.0 1074.9,438.4 1085.6,438.7 1096.3,436.4 1107.1,434.8 1117.8,435.9 1128.5,437.2 1139.2,439.6 1150.0,443.5 1160.7,446.4 1171.4,447.7 1182.1,449.4 1192.9,452.2 1203.6,453.8 1214.3,454.8 1225.1,454.7 1235.8,454.0 1246.5,453.9 1257.2,454.1 1268.0,454.9 1278.7,453.6 1289.4,453.8 1300.1,454.2 1310.9,456.7 1321.6,458.0 1332.3,458.4 1343.0,458.4 1353.8,457.7 1364.5,457.1 1375.2,456.2 1386.0,455.2 1396.7,453.9 1407.4,452.4 1418.1,449.6 1428.9,447.2 1439.6,444.7 1450.3,443.4 1461.0,442.4 1471.8,441.8 1482.5,440.9 1493.2,440.2 1504.0,440.0 1514.7,440.8 1525.4,441.5 1536.1,442.0 1546.9,443.1 1557.6,443.8 1568.3,445.3 1579.0,446.9" fill="none" stroke="#000" stroke-width="1"/>
<polyline points="12.9,235.0 23.6,239.4 34.4,246.2 45.1,253.1 55.8,261.6 66.5,271.1 77.3,279.0 88.0,290.7 98.7,302.1 109.4,310.0 120.2,320.1 130.9,333.0 141.6,344.1 152.4,357.7 163.1,367.4 173.8,374.7 184.5,380.2 195.3,386.4 206.0,390.6 216.7,395.1 227.4,399.5 238.2,407.0 248.9,417.1 259.6,425.1 270.3,432.9 281.1,436.7 291.8,440.3 302.5,443.3 313.3,445.5 324.0,448.7 334.7,452.7 345.4,457.8 356.2,464.5 366.9,470.0 377.6,474.6 388.3,482.5 399.1,488.9 409.8,496.2 420.5,505.5 431.3,511.1 442.0,513.6 452.7,515.9 463.4,519.0 474.2,522.5 484.9,526.4 495.6,529.7 506.3,530.4 517.1,527.9 527.8,523.1 538.5,517.1 549.2,512.8 560.0,504.7 570.7,496.0 581.4,492.4 592.2,489.8 602.9,486.0 613.6,482.5 624.3,481.6 635.1,479.4 645.8,475.8 656.5,473.3 667.2,471.6 678.0,471.1 688.7,472.2 699.4,473.5 710.2,473.9 720.9,474.9 731.6,479.2 742.3,481.2 753.1,482.0 763.8,483.4 774.5,484.8 785.2,482.6 796.0,480.1 806.7,477.2 817.4,475.0 828.2,472.2 838.9,470.3 849.6,467.9 860.3,465.7 871.1,463.5 881.8,461.0 892.5,456.6 903.2,451.6 914.0,446.2 924.7,440.4 935.4,436.5 946.1,432.1 956.9,431.4 967.6,430.4 978.3,429.9 989.1,428.1 999.8,428.8 1010.5,428.7 1021.2,429.5 1032.0,431.1 1042.7,433.6 1053.4,436.4 1064.1,438.0 1074.9,438.4 1085.6,438.7 1096.3,436.4 1107.1,434.8 1117.8,435.9 1128.5,437.2 1139.2,439.6 1150.0,443.5 1160.7,446.4 1171.4,447.7 1182.1,449.4 1192.9,452.2 1203.6,453.8 1214.3,454.8 1225.1,454.7 1235.8,454.0 1246.5,453.9 1257.2,454.1 1268.0,454.9 1278.7,453.6 1289.4,453.8 1300.1,454.2 1310.9,456.7 1321.6,458.0 1332.3,458.4 1343.0,458.4 1353.8,457.7 1364.5,457.1 1375.2,456.2 1386.0,455.2 1396.7,453.9 1407.4,452.4 1418.1,449.6 1428.9,447.2 1439.6,444.7 1450.3,443.4 1461.0,442.4 1471.8,441.8 1482.5,440.9 1493.2,440.2 1504.0,440.0 1514.7,440.8 1525.4,441.5 1536.1,442.0 1546.9,443.1 1557.6,443.8 1568.3,445.3 1579.0,446.9" fill="none" stroke="#ff0000" stroke-width="1" stroke-dasharray="3,3"/>
<polyline points="924.0,368.0 956.7,374.7 1000.0,383.3 1046.7,391.7 1091.7,399.0 1116.7,404.0 1150.0,411.0 1200.0,421.0 1260.0,432.0 1320.0,440.0 1380.0,447.0 1430.0,452.0" fill="none" stroke="#ff0000" stroke-width="1" stroke-dasharray="3,3"/>
<polyline points="1450.0,414.0 1500.0,427.0 1545.0,440.0 1588.0,448.7" fill="none" stroke="#ff0000" stroke-width="1" stroke-dasharray="3,3"/>
</g>
<g fill="none" stroke="#00ff00" stroke-width="1" stroke-dasharray="3,3" shape-rendering="crispEdges">
<polyline points="206.0,429.0 517.0,521.0" fill="none" />
<polyline points="377.0,513.0 381.7,513.7 406.7,515.8 440.0,520.0 473.3,524.5 506.7,528.3 536.7,532.5 556.7,535.0 588.0,539.0" fill="none" />
<polyline points="377.0,525.0 379.2,541.7 383.7,563.3 390.0,581.7 400.0,598.3 411.7,607.5 423.3,610.8 435.0,608.3 446.7,600.0 456.7,585.0 465.0,565.0 471.7,541.7 473.3,525.0" fill="none" />
<polyline points="473.3,525.0 476.7,545.0 485.0,560.0 500.0,569.0 511.7,569.7 520.0,565.8 528.3,555.0 535.0,541.7 536.7,530.0" fill="none" />
<line x1="515" y1="536.5" x2="1180" y2="536.5"/><line x1="515" y1="563.5" x2="1180" y2="563.5"/><line x1="773" y1="497.5" x2="1328" y2="497.5"/>
<polyline points="1235.0,440.3 1283.0,434.0 1333.0,427.0 1416.7,416.3 1566.7,396.3" fill="none" />
</g>
<g shape-rendering="crispEdges"><line x1="13.5" y1="272" x2="13.5" y2="292" stroke="#00ff00" stroke-width="1"/><rect x="9.5" y="272.5" width="7" height="15" fill="#000" stroke="#00ff00" stroke-width="1"/><line x1="24.5" y1="271" x2="24.5" y2="287" stroke="#ff0000" stroke-width="1"/><rect x="20" y="274" width="8" height="12" fill="#ff0000"/><line x1="34.5" y1="300" x2="34.5" y2="333" stroke="#ff0000" stroke-width="1"/><rect x="30" y="303" width="8" height="14" fill="#ff0000"/><line x1="45.5" y1="310" x2="45.5" y2="326" stroke="#ff0000" stroke-width="1"/><rect x="41" y="313" width="8" height="13" fill="#ff0000"/><line x1="56.5" y1="330" x2="56.5" y2="351" stroke="#ff0000" stroke-width="1"/><rect x="52" y="334" width="8" height="17" fill="#ff0000"/><line x1="67.5" y1="334" x2="67.5" y2="370" stroke="#ff0000" stroke-width="1"/><rect x="63" y="335" width="8" height="35" fill="#ff0000"/><line x1="77.5" y1="360" x2="77.5" y2="398" stroke="#00ff00" stroke-width="1"/><rect x="73.5" y="362.5" width="7" height="19" fill="#000" stroke="#00ff00" stroke-width="1"/><line x1="88.5" y1="370" x2="88.5" y2="420" stroke="#ff0000" stroke-width="1"/><rect x="84" y="371" width="8" height="42" fill="#ff0000"/><line x1="99.5" y1="398" x2="99.5" y2="431" stroke="#ff0000" stroke-width="1"/><rect x="95" y="402" width="8" height="20" fill="#ff0000"/><line x1="109.5" y1="387" x2="109.5" y2="407" stroke="#00ff00" stroke-width="1"/><rect x="105.5" y="393.5" width="7" height="13" fill="#000" stroke="#00ff00" stroke-width="1"/><line x1="120.5" y1="389" x2="120.5" y2="428" stroke="#ff0000" stroke-width="1"/><rect x="116" y="392" width="8" height="34" fill="#ff0000"/><line x1="131.5" y1="439" x2="131.5" y2="482" stroke="#ff0000" stroke-width="1"/><rect x="127" y="439" width="8" height="30" fill="#ff0000"/><line x1="142.5" y1="452" x2="142.5" y2="493" stroke="#00ff00" stroke-width="1"/><rect x="138.5" y="460.5" width="7" height="25" fill="#000" stroke="#00ff00" stroke-width="1"/><line x1="152.5" y1="467" x2="152.5" y2="508" stroke="#ff0000" stroke-width="1"/><rect x="148" y="467" width="8" height="34" fill="#ff0000"/><line x1="163.5" y1="465" x2="163.5" y2="504" stroke="#00ff00" stroke-width="1"/><rect x="159.5" y="469.5" width="7" height="31" fill="#000" stroke="#00ff00" stroke-width="1"/><line x1="174.5" y1="451" x2="174.5" y2="479" stroke="#00ff00" stroke-width="1"/><rect x="170.5" y="451.5" width="7" height="17" fill="#000" stroke="#00ff00" stroke-width="1"/><line x1="185.5" y1="433" x2="185.5" y2="446" stroke="#00ff00" stroke-width="1"/><rect x="181" y="438" width="8" height="2" fill="#00ff00"/><line x1="195.5" y1="448" x2="195.5" y2="470" stroke="#ff0000" stroke-width="1"/><rect x="191" y="448" width="8" height="3" fill="#ff0000"/><line x1="206.5" y1="428" x2="206.5" y2="444" stroke="#00ff00" stroke-width="1"/><rect x="202" y="435" width="8" height="3" fill="#00ff00"/><line x1="217.5" y1="436" x2="217.5" y2="450" stroke="#ff0000" stroke-width="1"/><rect x="213" y="436" width="8" height="6" fill="#ff0000"/><line x1="227.5" y1="436" x2="227.5" y2="454" stroke="#ff0000" stroke-width="1"/><rect x="223.5" y="443.5" width="7" height="2" fill="#000" stroke="#ff0000" stroke-width="1"/><line x1="238.5" y1="442" x2="238.5" y2="492" stroke="#ff0000" stroke-width="1"/><rect x="234" y="442" width="8" height="44" fill="#ff0000"/><line x1="249.5" y1="482" x2="249.5" y2="532" stroke="#ff0000" stroke-width="1"/><rect x="245" y="484" width="8" height="39" fill="#ff0000"/><line x1="260.5" y1="495" x2="260.5" y2="548" stroke="#00ff00" stroke-width="1"/><rect x="256.5" y="509.5" width="7" height="18" fill="#000" stroke="#00ff00" stroke-width="1"/><line x1="270.5" y1="503" x2="270.5" y2="524" stroke="#ff0000" stroke-width="1"/><rect x="266" y="506" width="8" height="9" fill="#ff0000"/><line x1="281.5" y1="476" x2="281.5" y2="517" stroke="#00ff00" stroke-width="1"/><rect x="277.5" y="476.5" width="7" height="36" fill="#000" stroke="#00ff00" stroke-width="1"/><line x1="292.5" y1="459" x2="292.5" y2="478" stroke="#ff0000" stroke-width="1"/><rect x="288" y="467" width="8" height="11" fill="#ff0000"/><line x1="303.5" y1="474" x2="303.5" y2="501" stroke="#00ff00" stroke-width="1"/><rect x="299" y="475" width="8" height="2" fill="#00ff00"/><line x1="313.5" y1="460" x2="313.5" y2="477" stroke="#00ff00" stroke-width="1"/><rect x="309" y="469" width="8" height="2" fill="#00ff00"/><line x1="324.5" y1="470" x2="324.5" y2="486" stroke="#ff0000" stroke-width="1"/><rect x="320" y="470" width="8" height="12" fill="#ff0000"/><line x1="335.5" y1="482" x2="335.5" y2="495" stroke="#ff0000" stroke-width="1"/><rect x="331.5" y="485.5" width="7" height="9" fill="#000" stroke="#ff0000" stroke-width="1"/><line x1="345.5" y1="497" x2="345.5" y2="535" stroke="#ff0000" stroke-width="1"/><rect x="341" y="498" width="8" height="13" fill="#ff0000"/><line x1="356.5" y1="512" x2="356.5" y2="540" stroke="#ff0000" stroke-width="1"/><rect x="352" y="518" width="8" height="17" fill="#ff0000"/><line x1="367.5" y1="527" x2="367.5" y2="554" stroke="#00ff00" stroke-width="1"/><rect x="363.5" y="527.5" width="7" height="23" fill="#000" stroke="#00ff00" stroke-width="1"/><line x1="378.5" y1="512" x2="378.5" y2="530" stroke="#00ff00" stroke-width="1"/><rect x="374.5" y="523.5" width="7" height="2" fill="#000" stroke="#00ff00" stroke-width="1"/><line x1="388.5" y1="534" x2="388.5" y2="577" stroke="#ff0000" stroke-width="1"/><rect x="384" y="534" width="8" height="31" fill="#ff0000"/><line x1="399.5" y1="544" x2="399.5" y2="562" stroke="#00ff00" stroke-width="1"/><rect x="395" y="556" width="8" height="2" fill="#00ff00"/><line x1="410.5" y1="568" x2="410.5" y2="590" stroke="#ff0000" stroke-width="1"/><rect x="406" y="571" width="8" height="2" fill="#ff0000"/><line x1="421.5" y1="585" x2="421.5" y2="616" stroke="#ff0000" stroke-width="1"/><rect x="417" y="588" width="8" height="16" fill="#ff0000"/><line x1="431.5" y1="567" x2="431.5" y2="645" stroke="#00ff00" stroke-width="1"/><rect x="427.5" y="569.5" width="7" height="73" fill="#000" stroke="#00ff00" stroke-width="1"/><line x1="442.5" y1="537" x2="442.5" y2="560" stroke="#00ff00" stroke-width="1"/><rect x="438.5" y="540.5" width="7" height="18" fill="#000" stroke="#00ff00" stroke-width="1"/><line x1="453.5" y1="539" x2="453.5" y2="573" stroke="#00ff00" stroke-width="1"/><rect x="449.5" y="540.5" width="7" height="2" fill="#000" stroke="#00ff00" stroke-width="1"/><line x1="463.5" y1="537" x2="463.5" y2="554" stroke="#ff0000" stroke-width="1"/><rect x="459" y="538" width="8" height="13" fill="#ff0000"/><line x1="474.5" y1="525" x2="474.5" y2="563" stroke="#ff0000" stroke-width="1"/><rect x="470" y="557" width="8" height="3" fill="#ff0000"/><line x1="485.5" y1="553" x2="485.5" y2="570" stroke="#ff0000" stroke-width="1"/><rect x="481" y="564" width="8" height="2" fill="#ff0000"/><line x1="496.5" y1="562" x2="496.5" y2="579" stroke="#00ff00" stroke-width="1"/><rect x="492.5" y="564.5" width="7" height="5" fill="#000" stroke="#00ff00" stroke-width="1"/><line x1="506.5" y1="538" x2="506.5" y2="555" stroke="#00ff00" stroke-width="1"/><rect x="502.5" y="538.5" width="7" height="16" fill="#000" stroke="#00ff00" stroke-width="1"/><line x1="517.5" y1="501" x2="517.5" y2="531" stroke="#00ff00" stroke-width="1"/><rect x="513.5" y="502.5" width="7" height="26" fill="#000" stroke="#00ff00" stroke-width="1"/><line x1="528.5" y1="472" x2="528.5" y2="508" stroke="#00ff00" stroke-width="1"/><rect x="524.5" y="472.5" width="7" height="25" fill="#000" stroke="#00ff00" stroke-width="1"/><line x1="539.5" y1="454" x2="539.5" y2="483" stroke="#00ff00" stroke-width="1"/><rect x="535.5" y="454.5" width="7" height="12" fill="#000" stroke="#00ff00" stroke-width="1"/><line x1="549.5" y1="435" x2="549.5" y2="468" stroke="#ff0000" stroke-width="1"/><rect x="545" y="443" width="8" height="25" fill="#ff0000"/><line x1="560.5" y1="419" x2="560.5" y2="473" stroke="#00ff00" stroke-width="1"/><rect x="556.5" y="419.5" width="7" height="52" fill="#000" stroke="#00ff00" stroke-width="1"/><line x1="571.5" y1="399" x2="571.5" y2="417" stroke="#00ff00" stroke-width="1"/><rect x="567.5" y="404.5" width="7" height="3" fill="#000" stroke="#00ff00" stroke-width="1"/><line x1="581.5" y1="410" x2="581.5" y2="455" stroke="#ff0000" stroke-width="1"/><rect x="577" y="410" width="8" height="45" fill="#ff0000"/><line x1="592.5" y1="442" x2="592.5" y2="469" stroke="#ff0000" stroke-width="1"/><rect x="588" y="456" width="8" height="7" fill="#ff0000"/><line x1="603.5" y1="422" x2="603.5" y2="457" stroke="#00ff00" stroke-width="1"/><rect x="599" y="446" width="8" height="7" fill="#00ff00"/><line x1="614.5" y1="441" x2="614.5" y2="462" stroke="#00ff00" stroke-width="1"/><rect x="610" y="445" width="8" height="6" fill="#00ff00"/><line x1="624.5" y1="437" x2="624.5" y2="476" stroke="#ff0000" stroke-width="1"/><rect x="620" y="442" width="8" height="31" fill="#ff0000"/><line x1="635.5" y1="455" x2="635.5" y2="478" stroke="#00ff00" stroke-width="1"/><rect x="631.5" y="455.5" width="7" height="12" fill="#000" stroke="#00ff00" stroke-width="1"/><line x1="646.5" y1="439" x2="646.5" y2="456" stroke="#00ff00" stroke-width="1"/><rect x="642" y="439" width="8" height="14" fill="#00ff00"/><line x1="657.5" y1="439" x2="657.5" y2="454" stroke="#00ff00" stroke-width="1"/><rect x="653.5" y="446.5" width="7" height="7" fill="#000" stroke="#00ff00" stroke-width="1"/><line x1="667.5" y1="437" x2="667.5" y2="454" stroke="#ff0000" stroke-width="1"/><rect x="663.5" y="449.5" width="7" height="4" fill="#000" stroke="#ff0000" stroke-width="1"/><line x1="678.5" y1="436" x2="678.5" y2="466" stroke="#ff0000" stroke-width="1"/><rect x="674" y="448" width="8" height="18" fill="#ff0000"/><line x1="689.5" y1="465" x2="689.5" y2="496" stroke="#ff0000" stroke-width="1"/><rect x="685" y="468" width="8" height="15" fill="#ff0000"/><line x1="699.5" y1="470" x2="699.5" y2="501" stroke="#ff0000" stroke-width="1"/><rect x="695" y="470" width="8" height="17" fill="#ff0000"/><line x1="710.5" y1="472" x2="710.5" y2="489" stroke="#00ff00" stroke-width="1"/><rect x="706" y="478" width="8" height="6" fill="#00ff00"/><line x1="721.5" y1="478" x2="721.5" y2="492" stroke="#ff0000" stroke-width="1"/><rect x="717" y="481" width="8" height="5" fill="#ff0000"/><line x1="732.5" y1="485" x2="732.5" y2="524" stroke="#ff0000" stroke-width="1"/><rect x="728" y="485" width="8" height="39" fill="#ff0000"/><line x1="742.5" y1="499" x2="742.5" y2="525" stroke="#00ff00" stroke-width="1"/><rect x="738.5" y="502.5" width="7" height="20" fill="#000" stroke="#00ff00" stroke-width="1"/><line x1="753.5" y1="487" x2="753.5" y2="508" stroke="#00ff00" stroke-width="1"/><rect x="749.5" y="490.5" width="7" height="8" fill="#000" stroke="#00ff00" stroke-width="1"/><line x1="764.5" y1="484" x2="764.5" y2="498" stroke="#ff0000" stroke-width="1"/><rect x="760" y="489" width="8" height="9" fill="#ff0000"/><line x1="775.5" y1="488" x2="775.5" y2="500" stroke="#ff0000" stroke-width="1"/><rect x="771" y="488" width="8" height="12" fill="#ff0000"/><line x1="785.5" y1="459" x2="785.5" y2="495" stroke="#00ff00" stroke-width="1"/><rect x="781.5" y="459.5" width="7" height="35" fill="#000" stroke="#00ff00" stroke-width="1"/><line x1="796.5" y1="450" x2="796.5" y2="461" stroke="#00ff00" stroke-width="1"/><rect x="792" y="454" width="8" height="3" fill="#00ff00"/><line x1="807.5" y1="444" x2="807.5" y2="456" stroke="#00ff00" stroke-width="1"/><rect x="803.5" y="446.5" width="7" height="7" fill="#000" stroke="#00ff00" stroke-width="1"/><line x1="817.5" y1="436" x2="817.5" y2="455" stroke="#ff0000" stroke-width="1"/><rect x="813" y="446" width="8" height="6" fill="#ff0000"/><line x1="828.5" y1="440" x2="828.5" y2="451" stroke="#00ff00" stroke-width="1"/><rect x="824" y="443" width="8" height="6" fill="#00ff00"/><line x1="839.5" y1="445" x2="839.5" y2="457" stroke="#ff0000" stroke-width="1"/><rect x="835" y="447" width="8" height="3" fill="#ff0000"/><line x1="850.5" y1="436" x2="850.5" y2="447" stroke="#00ff00" stroke-width="1"/><rect x="846" y="443" width="8" height="4" fill="#00ff00"/><line x1="860.5" y1="441" x2="860.5" y2="452" stroke="#00ff00" stroke-width="1"/><rect x="856" y="443" width="8" height="3" fill="#00ff00"/><line x1="871.5" y1="435" x2="871.5" y2="446" stroke="#00ff00" stroke-width="1"/><rect x="867" y="440" width="8" height="2" fill="#00ff00"/><line x1="882.5" y1="434" x2="882.5" y2="444" stroke="#00ff00" stroke-width="1"/><rect x="878.5" y="435.5" width="7" height="3" fill="#000" stroke="#00ff00" stroke-width="1"/><line x1="893.5" y1="410" x2="893.5" y2="430" stroke="#00ff00" stroke-width="1"/><rect x="889.5" y="410.5" width="7" height="18" fill="#000" stroke="#00ff00" stroke-width="1"/><line x1="903.5" y1="398" x2="903.5" y2="409" stroke="#00ff00" stroke-width="1"/><rect x="899.5" y="399.5" width="7" height="7" fill="#000" stroke="#00ff00" stroke-width="1"/><line x1="914.5" y1="386" x2="914.5" y2="404" stroke="#00ff00" stroke-width="1"/><rect x="910.5" y="389.5" width="7" height="13" fill="#000" stroke="#00ff00" stroke-width="1"/><line x1="925.5" y1="372" x2="925.5" y2="385" stroke="#00ff00" stroke-width="1"/><rect x="921.5" y="379.5" width="7" height="3" fill="#000" stroke="#00ff00" stroke-width="1"/><line x1="935.5" y1="378" x2="935.5" y2="396" stroke="#ff0000" stroke-width="1"/><rect x="931" y="378" width="8" height="18" fill="#ff0000"/><line x1="946.5" y1="385" x2="946.5" y2="410" stroke="#00ff00" stroke-width="1"/><rect x="942.5" y="385.5" width="7" height="11" fill="#000" stroke="#00ff00" stroke-width="1"/><line x1="957.5" y1="380" x2="957.5" y2="425" stroke="#ff0000" stroke-width="1"/><rect x="953" y="381" width="8" height="44" fill="#ff0000"/><line x1="968.5" y1="417" x2="968.5" y2="429" stroke="#00ff00" stroke-width="1"/><rect x="964" y="420" width="8" height="3" fill="#00ff00"/><line x1="978.5" y1="417" x2="978.5" y2="430" stroke="#ff0000" stroke-width="1"/><rect x="974" y="421" width="8" height="3" fill="#ff0000"/><line x1="989.5" y1="408" x2="989.5" y2="433" stroke="#00ff00" stroke-width="1"/><rect x="985.5" y="409.5" width="7" height="18" fill="#000" stroke="#00ff00" stroke-width="1"/><line x1="1000.5" y1="407" x2="1000.5" y2="436" stroke="#ff0000" stroke-width="1"/><rect x="996" y="411" width="8" height="25" fill="#ff0000"/><line x1="1011.5" y1="421" x2="1011.5" y2="434" stroke="#00ff00" stroke-width="1"/><rect x="1007.5" y="428.5" width="7" height="4" fill="#000" stroke="#00ff00" stroke-width="1"/><line x1="1021.5" y1="426" x2="1021.5" y2="438" stroke="#ff0000" stroke-width="1"/><rect x="1017" y="430" width="8" height="8" fill="#ff0000"/><line x1="1032.5" y1="434" x2="1032.5" y2="448" stroke="#ff0000" stroke-width="1"/><rect x="1028" y="435" width="8" height="12" fill="#ff0000"/><line x1="1043.5" y1="449" x2="1043.5" y2="472" stroke="#ff0000" stroke-width="1"/><rect x="1039" y="451" width="8" height="9" fill="#ff0000"/><line x1="1053.5" y1="457" x2="1053.5" y2="471" stroke="#ff0000" stroke-width="1"/><rect x="1049" y="457" width="8" height="9" fill="#ff0000"/><line x1="1064.5" y1="451" x2="1064.5" y2="469" stroke="#00ff00" stroke-width="1"/><rect x="1060.5" y="454.5" width="7" height="11" fill="#000" stroke="#00ff00" stroke-width="1"/><line x1="1075.5" y1="443" x2="1075.5" y2="455" stroke="#00ff00" stroke-width="1"/><rect x="1071.5" y="443.5" width="7" height="7" fill="#000" stroke="#00ff00" stroke-width="1"/><line x1="1086.5" y1="440" x2="1086.5" y2="449" stroke="#00ff00" stroke-width="1"/><rect x="1082" y="442" width="8" height="2" fill="#00ff00"/><line x1="1096.5" y1="411" x2="1096.5" y2="442" stroke="#00ff00" stroke-width="1"/><rect x="1092.5" y="412.5" width="7" height="29" fill="#000" stroke="#00ff00" stroke-width="1"/><line x1="1107.5" y1="404" x2="1107.5" y2="418" stroke="#ff0000" stroke-width="1"/><rect x="1103" y="409" width="8" height="9" fill="#ff0000"/><line x1="1118.5" y1="426" x2="1118.5" y2="448" stroke="#ff0000" stroke-width="1"/><rect x="1114" y="426" width="8" height="22" fill="#ff0000"/><line x1="1129.5" y1="449" x2="1129.5" y2="473" stroke="#ff0000" stroke-width="1"/><rect x="1125" y="449" width="8" height="2" fill="#ff0000"/><line x1="1139.5" y1="450" x2="1139.5" y2="469" stroke="#ff0000" stroke-width="1"/><rect x="1135" y="450" width="8" height="15" fill="#ff0000"/><line x1="1150.5" y1="473" x2="1150.5" y2="487" stroke="#ff0000" stroke-width="1"/><rect x="1146" y="475" width="8" height="10" fill="#ff0000"/><line x1="1161.5" y1="470" x2="1161.5" y2="486" stroke="#00ff00" stroke-width="1"/><rect x="1157" y="476" width="8" height="5" fill="#00ff00"/><line x1="1171.5" y1="462" x2="1171.5" y2="492" stroke="#00ff00" stroke-width="1"/><rect x="1167.5" y="462.5" width="7" height="19" fill="#000" stroke="#00ff00" stroke-width="1"/><line x1="1182.5" y1="460" x2="1182.5" y2="471" stroke="#ff0000" stroke-width="1"/><rect x="1178" y="463" width="8" height="4" fill="#ff0000"/><line x1="1193.5" y1="462" x2="1193.5" y2="482" stroke="#ff0000" stroke-width="1"/><rect x="1189" y="465" width="8" height="16" fill="#ff0000"/><line x1="1204.5" y1="461" x2="1204.5" y2="478" stroke="#00ff00" stroke-width="1"/><rect x="1200" y="471" width="8" height="7" fill="#00ff00"/><line x1="1214.5" y1="460" x2="1214.5" y2="472" stroke="#00ff00" stroke-width="1"/><rect x="1210.5" y="465.5" width="7" height="5" fill="#000" stroke="#00ff00" stroke-width="1"/><line x1="1225.5" y1="453" x2="1225.5" y2="476" stroke="#00ff00" stroke-width="1"/><rect x="1221.5" y="453.5" width="7" height="22" fill="#000" stroke="#00ff00" stroke-width="1"/><line x1="1236.5" y1="442" x2="1236.5" y2="453" stroke="#00ff00" stroke-width="1"/><rect x="1232.5" y="447.5" width="7" height="4" fill="#000" stroke="#00ff00" stroke-width="1"/><line x1="1247.5" y1="449" x2="1247.5" y2="456" stroke="#ff0000" stroke-width="1"/><rect x="1243.5" y="450.5" width="7" height="1" fill="#000" stroke="#ff0000" stroke-width="1"/><line x1="1257.5" y1="447" x2="1257.5" y2="456" stroke="#ff0000" stroke-width="1"/><rect x="1253.5" y="449.5" width="7" height="6" fill="#000" stroke="#ff0000" stroke-width="1"/><line x1="1268.5" y1="451" x2="1268.5" y2="469" stroke="#ff0000" stroke-width="1"/><rect x="1264" y="453" width="8" height="11" fill="#ff0000"/><line x1="1279.5" y1="439" x2="1279.5" y2="452" stroke="#00ff00" stroke-width="1"/><rect x="1275.5" y="440.5" width="7" height="9" fill="#000" stroke="#00ff00" stroke-width="1"/><line x1="1289.5" y1="444" x2="1289.5" y2="459" stroke="#ff0000" stroke-width="1"/><rect x="1285" y="445" width="8" height="11" fill="#ff0000"/><line x1="1300.5" y1="447" x2="1300.5" y2="459" stroke="#ff0000" stroke-width="1"/><rect x="1296" y="448" width="8" height="10" fill="#ff0000"/><line x1="1311.5" y1="458" x2="1311.5" y2="483" stroke="#ff0000" stroke-width="1"/><rect x="1307" y="460" width="8" height="23" fill="#ff0000"/><line x1="1322.5" y1="468" x2="1322.5" y2="488" stroke="#00ff00" stroke-width="1"/><rect x="1318.5" y="471.5" width="7" height="4" fill="#000" stroke="#00ff00" stroke-width="1"/><line x1="1332.5" y1="461" x2="1332.5" y2="470" stroke="#00ff00" stroke-width="1"/><rect x="1328.5" y="463.5" width="7" height="5" fill="#000" stroke="#00ff00" stroke-width="1"/><line x1="1343.5" y1="458" x2="1343.5" y2="473" stroke="#00ff00" stroke-width="1"/><rect x="1339.5" y="458.5" width="7" height="10" fill="#000" stroke="#00ff00" stroke-width="1"/><line x1="1354.5" y1="450" x2="1354.5" y2="460" stroke="#00ff00" stroke-width="1"/><rect x="1350" y="450" width="8" height="2" fill="#00ff00"/><line x1="1365.5" y1="449" x2="1365.5" y2="461" stroke="#00ff00" stroke-width="1"/><rect x="1361.5" y="451.5" width="7" height="3" fill="#000" stroke="#00ff00" stroke-width="1"/><line x1="1375.5" y1="442" x2="1375.5" y2="450" stroke="#00ff00" stroke-width="1"/><rect x="1371" y="446" width="8" height="2" fill="#00ff00"/><line x1="1386.5" y1="445" x2="1386.5" y2="455" stroke="#00ff00" stroke-width="1"/><rect x="1382.5" y="445.5" width="7" height="2" fill="#000" stroke="#00ff00" stroke-width="1"/><line x1="1397.5" y1="435" x2="1397.5" y2="443" stroke="#00ff00" stroke-width="1"/><rect x="1393" y="440" width="8" height="3" fill="#00ff00"/><line x1="1407.5" y1="434" x2="1407.5" y2="442" stroke="#00ff00" stroke-width="1"/><rect x="1403.5" y="436.5" width="7" height="5" fill="#000" stroke="#00ff00" stroke-width="1"/><line x1="1418.5" y1="420" x2="1418.5" y2="429" stroke="#00ff00" stroke-width="1"/><rect x="1414.5" y="420.5" width="7" height="5" fill="#000" stroke="#00ff00" stroke-width="1"/><line x1="1429.5" y1="418" x2="1429.5" y2="425" stroke="#ff0000" stroke-width="1"/><rect x="1425" y="418" width="8" height="4" fill="#ff0000"/><line x1="1440.5" y1="418" x2="1440.5" y2="426" stroke="#00ff00" stroke-width="1"/><rect x="1436.5" y="418.5" width="7" height="2" fill="#000" stroke="#00ff00" stroke-width="1"/><line x1="1450.5" y1="414" x2="1450.5" y2="431" stroke="#ff0000" stroke-width="1"/><rect x="1446" y="416" width="8" height="14" fill="#ff0000"/><line x1="1461.5" y1="428" x2="1461.5" y2="437" stroke="#ff0000" stroke-width="1"/><rect x="1457" y="429" width="8" height="3" fill="#ff0000"/><line x1="1472.5" y1="425" x2="1472.5" y2="437" stroke="#ff0000" stroke-width="1"/><rect x="1468" y="426" width="8" height="10" fill="#ff0000"/><line x1="1482.5" y1="431" x2="1482.5" y2="445" stroke="#00ff00" stroke-width="1"/><rect x="1478.5" y="431.5" width="7" height="5" fill="#000" stroke="#00ff00" stroke-width="1"/><line x1="1493.5" y1="428" x2="1493.5" y2="434" stroke="#ff0000" stroke-width="1"/><rect x="1489" y="429" width="8" height="3" fill="#ff0000"/><line x1="1504.5" y1="428" x2="1504.5" y2="439" stroke="#ff0000" stroke-width="1"/><rect x="1500" y="429" width="8" height="9" fill="#ff0000"/><line x1="1515.5" y1="433" x2="1515.5" y2="450" stroke="#ff0000" stroke-width="1"/><rect x="1511" y="433" width="8" height="17" fill="#ff0000"/><line x1="1525.5" y1="448" x2="1525.5" y2="454" stroke="#00ff00" stroke-width="1"/><rect x="1521" y="448" width="8" height="2" fill="#00ff00"/><line x1="1536.5" y1="446" x2="1536.5" y2="451" stroke="#00ff00" stroke-width="1"/><rect x="1532" y="448" width="8" height="2" fill="#00ff00"/><line x1="1547.5" y1="443" x2="1547.5" y2="455" stroke="#ff0000" stroke-width="1"/><rect x="1543" y="444" width="8" height="10" fill="#ff0000"/><line x1="1558.5" y1="451" x2="1558.5" y2="457" stroke="#00ff00" stroke-width="1"/><rect x="1554" y="452" width="8" height="2" fill="#00ff00"/><line x1="1568.5" y1="452" x2="1568.5" y2="462" stroke="#ff0000" stroke-width="1"/><rect x="1564" y="452" width="8" height="9" fill="#ff0000"/><line x1="1579.5" y1="456" x2="1579.5" y2="465" stroke="#ff0000" stroke-width="1"/><rect x="1575" y="457" width="8" height="6" fill="#ff0000"/></g>
<g shape-rendering="crispEdges"><rect x="9.5" y="837.5" width="7" height="6" fill="#ff0000" stroke="#ddd" stroke-width="1"/><rect x="20.5" y="843.5" width="7" height="3" fill="#ff0000" stroke="#ddd" stroke-width="1"/><rect x="30.5" y="846.5" width="7" height="5" fill="#ff0000" stroke="#ddd" stroke-width="1"/><rect x="41.5" y="851.5" width="7" height="10" fill="#ff0000" stroke="#ddd" stroke-width="1"/><rect x="52.5" y="861.5" width="7" height="15" fill="#ff0000" stroke="#ddd" stroke-width="1"/><rect x="63.5" y="876.5" width="7" height="18" fill="#ff0000" stroke="#ddd" stroke-width="1"/><rect x="73.5" y="894.5" width="7" height="15" fill="#ff0000" stroke="#ddd" stroke-width="1"/><rect x="84.5" y="909.5" width="7" height="15" fill="#ff0000" stroke="#ddd" stroke-width="1"/><rect x="95.5" y="924.5" width="7" height="16" fill="#ff0000" stroke="#ddd" stroke-width="1"/><rect x="105.5" y="940.5" width="7" height="8" fill="#ff0000" stroke="#ddd" stroke-width="1"/><rect x="116.5" y="948.5" width="7" height="4" fill="#ff0000" stroke="#ddd" stroke-width="1"/><rect x="127.5" y="952.5" width="7" height="8" fill="#ff0000" stroke="#ddd" stroke-width="1"/><rect x="138.5" y="960.5" width="7" height="6" fill="#ff0000" stroke="#ddd" stroke-width="1"/><rect x="148.5" y="966.5" width="7" height="10" fill="#ff0000" stroke="#ddd" stroke-width="1"/><rect x="159.5" y="976.5" width="7" height="7" fill="#ff0000" stroke="#ddd" stroke-width="1"/><rect x="170.5" y="978.5" width="7" height="5" fill="#00ff00" stroke="#ddd" stroke-width="1"/><rect x="181.5" y="960.5" width="7" height="18" fill="#00ff00" stroke="#ddd" stroke-width="1"/><rect x="191.5" y="940.5" width="7" height="20" fill="#00ff00" stroke="#ddd" stroke-width="1"/><rect x="202.5" y="916.5" width="7" height="24" fill="#00ff00" stroke="#ddd" stroke-width="1"/><rect x="213.5" y="898.5" width="7" height="18" fill="#00ff00" stroke="#ddd" stroke-width="1"/><rect x="223.5" y="884.5" width="7" height="14" fill="#00ff00" stroke="#ddd" stroke-width="1"/><rect x="234.5" y="880.5" width="7" height="4" fill="#00ff00" stroke="#ddd" stroke-width="1"/><rect x="245.5" y="880.5" width="7" height="8" fill="#ff0000" stroke="#ddd" stroke-width="1"/><rect x="256.5" y="888.5" width="7" height="12" fill="#ff0000" stroke="#ddd" stroke-width="1"/><rect x="266.5" y="900.5" width="7" height="12" fill="#ff0000" stroke="#ddd" stroke-width="1"/><rect x="277" y="912" width="8" height="1.5" fill="#ddd"/><rect x="288.5" y="900.5" width="7" height="12" fill="#00ff00" stroke="#ddd" stroke-width="1"/><rect x="299.5" y="882.5" width="7" height="18" fill="#00ff00" stroke="#ddd" stroke-width="1"/><rect x="309.5" y="864.5" width="7" height="18" fill="#00ff00" stroke="#ddd" stroke-width="1"/><rect x="320.5" y="850.5" width="7" height="14" fill="#00ff00" stroke="#ddd" stroke-width="1"/><rect x="331.5" y="843.5" width="7" height="7" fill="#00ff00" stroke="#ddd" stroke-width="1"/><rect x="341" y="843" width="8" height="1.5" fill="#ddd"/><rect x="352.5" y="843.5" width="7" height="8" fill="#ff0000" stroke="#ddd" stroke-width="1"/><rect x="363.5" y="851.5" width="7" height="11" fill="#ff0000" stroke="#ddd" stroke-width="1"/><rect x="374.5" y="862.5" width="7" height="7" fill="#ff0000" stroke="#ddd" stroke-width="1"/><rect x="384.5" y="869.5" width="7" height="9" fill="#ff0000" stroke="#ddd" stroke-width="1"/><rect x="395.5" y="878.5" width="7" height="7" fill="#ff0000" stroke="#ddd" stroke-width="1"/><rect x="406.5" y="885.5" width="7" height="6" fill="#ff0000" stroke="#ddd" stroke-width="1"/><rect x="417.5" y="891.5" width="7" height="10" fill="#ff0000" stroke="#ddd" stroke-width="1"/><rect x="427.5" y="901.5" width="7" height="6" fill="#ff0000" stroke="#ddd" stroke-width="1"/><rect x="438.5" y="900.5" width="7" height="7" fill="#00ff00" stroke="#ddd" stroke-width="1"/><rect x="449.5" y="886.5" width="7" height="14" fill="#00ff00" stroke="#ddd" stroke-width="1"/><rect x="459.5" y="868.5" width="7" height="18" fill="#00ff00" stroke="#ddd" stroke-width="1"/><rect x="470.5" y="854.5" width="7" height="14" fill="#00ff00" stroke="#ddd" stroke-width="1"/><rect x="481.5" y="847.5" width="7" height="7" fill="#00ff00" stroke="#ddd" stroke-width="1"/><rect x="492" y="846" width="8" height="1.5" fill="#ddd"/><rect x="502.5" y="841.5" width="7" height="5" fill="#00ff00" stroke="#ddd" stroke-width="1"/><rect x="513.5" y="826.5" width="7" height="15" fill="#00ff00" stroke="#ddd" stroke-width="1"/><rect x="524.5" y="801.5" width="7" height="25" fill="#00ff00" stroke="#ddd" stroke-width="1"/><rect x="535.5" y="769.5" width="7" height="32" fill="#00ff00" stroke="#ddd" stroke-width="1"/><rect x="545.5" y="741.5" width="7" height="28" fill="#00ff00" stroke="#ddd" stroke-width="1"/><rect x="556.5" y="716.5" width="7" height="25" fill="#00ff00" stroke="#ddd" stroke-width="1"/><rect x="567.5" y="692.5" width="7" height="24" fill="#00ff00" stroke="#ddd" stroke-width="1"/><rect x="577.5" y="683.5" width="7" height="9" fill="#00ff00" stroke="#ddd" stroke-width="1"/><rect x="588.5" y="683.5" width="7" height="3" fill="#ff0000" stroke="#ddd" stroke-width="1"/><rect x="599.5" y="686.5" width="7" height="9" fill="#ff0000" stroke="#ddd" stroke-width="1"/><rect x="610.5" y="695.5" width="7" height="13" fill="#ff0000" stroke="#ddd" stroke-width="1"/><rect x="620.5" y="708.5" width="7" height="15" fill="#ff0000" stroke="#ddd" stroke-width="1"/><rect x="631.5" y="723.5" width="7" height="11" fill="#ff0000" stroke="#ddd" stroke-width="1"/><rect x="642.5" y="734.5" width="7" height="5" fill="#ff0000" stroke="#ddd" stroke-width="1"/><rect x="653.5" y="739.5" width="7" height="4" fill="#ff0000" stroke="#ddd" stroke-width="1"/><rect x="663.5" y="743.5" width="7" height="2" fill="#ff0000" stroke="#ddd" stroke-width="1"/><rect x="674.5" y="745.5" width="7" height="3" fill="#ff0000" stroke="#ddd" stroke-width="1"/><rect x="685.5" y="748.5" width="7" height="8" fill="#ff0000" stroke="#ddd" stroke-width="1"/><rect x="695.5" y="756.5" width="7" height="13" fill="#ff0000" stroke="#ddd" stroke-width="1"/><rect x="706.5" y="769.5" width="7" height="13" fill="#ff0000" stroke="#ddd" stroke-width="1"/><rect x="717.5" y="782.5" width="7" height="10" fill="#ff0000" stroke="#ddd" stroke-width="1"/><rect x="728.5" y="792.5" width="7" height="13" fill="#ff0000" stroke="#ddd" stroke-width="1"/><rect x="738.5" y="805.5" width="7" height="10" fill="#ff0000" stroke="#ddd" stroke-width="1"/><rect x="749.5" y="815.5" width="7" height="4" fill="#ff0000" stroke="#ddd" stroke-width="1"/><rect x="760.5" y="819.5" width="7" height="2" fill="#ff0000" stroke="#ddd" stroke-width="1"/><rect x="771.5" y="818.5" width="7" height="3" fill="#00ff00" stroke="#ddd" stroke-width="1"/><rect x="781.5" y="809.5" width="7" height="9" fill="#00ff00" stroke="#ddd" stroke-width="1"/><rect x="792.5" y="796.5" width="7" height="13" fill="#00ff00" stroke="#ddd" stroke-width="1"/><rect x="803.5" y="781.5" width="7" height="15" fill="#00ff00" stroke="#ddd" stroke-width="1"/><rect x="813.5" y="767.5" width="7" height="14" fill="#00ff00" stroke="#ddd" stroke-width="1"/><rect x="824.5" y="757.5" width="7" height="10" fill="#00ff00" stroke="#ddd" stroke-width="1"/><rect x="835.5" y="753.5" width="7" height="4" fill="#00ff00" stroke="#ddd" stroke-width="1"/><rect x="846" y="753" width="8" height="1.5" fill="#ddd"/><rect x="856" y="753" width="8" height="1.5" fill="#ddd"/><rect x="867" y="753" width="8" height="1.5" fill="#ddd"/><rect x="878" y="753" width="8" height="1.5" fill="#ddd"/><rect x="889.5" y="747.5" width="7" height="6" fill="#00ff00" stroke="#ddd" stroke-width="1"/><rect x="899.5" y="738.5" width="7" height="9" fill="#00ff00" stroke="#ddd" stroke-width="1"/><rect x="910.5" y="726.5" width="7" height="12" fill="#00ff00" stroke="#ddd" stroke-width="1"/><rect x="921.5" y="714.5" width="7" height="12" fill="#00ff00" stroke="#ddd" stroke-width="1"/><rect x="931.5" y="707.5" width="7" height="7" fill="#00ff00" stroke="#ddd" stroke-width="1"/><rect x="942" y="707" width="8" height="1.5" fill="#ddd"/><rect x="953.5" y="707.5" width="7" height="7" fill="#ff0000" stroke="#ddd" stroke-width="1"/><rect x="964.5" y="714.5" width="7" height="14" fill="#ff0000" stroke="#ddd" stroke-width="1"/><rect x="974.5" y="728.5" width="7" height="16" fill="#ff0000" stroke="#ddd" stroke-width="1"/><rect x="985.5" y="744.5" width="7" height="11" fill="#ff0000" stroke="#ddd" stroke-width="1"/><rect x="996.5" y="755.5" width="7" height="11" fill="#ff0000" stroke="#ddd" stroke-width="1"/><rect x="1007.5" y="766.5" width="7" height="7" fill="#ff0000" stroke="#ddd" stroke-width="1"/><rect x="1017.5" y="773.5" width="7" height="7" fill="#ff0000" stroke="#ddd" stroke-width="1"/><rect x="1028.5" y="780.5" width="7" height="9" fill="#ff0000" stroke="#ddd" stroke-width="1"/><rect x="1039.5" y="789.5" width="7" height="11" fill="#ff0000" stroke="#ddd" stroke-width="1"/><rect x="1049.5" y="800.5" width="7" height="10" fill="#ff0000" stroke="#ddd" stroke-width="1"/><rect x="1060.5" y="810.5" width="7" height="8" fill="#ff0000" stroke="#ddd" stroke-width="1"/><rect x="1071.5" y="818.5" width="7" height="2" fill="#ff0000" stroke="#ddd" stroke-width="1"/><rect x="1082.5" y="817.5" width="7" height="3" fill="#00ff00" stroke="#ddd" stroke-width="1"/><rect x="1092.5" y="807.5" width="7" height="10" fill="#00ff00" stroke="#ddd" stroke-width="1"/><rect x="1103.5" y="794.5" width="7" height="13" fill="#00ff00" stroke="#ddd" stroke-width="1"/><rect x="1114.5" y="787.5" width="7" height="7" fill="#00ff00" stroke="#ddd" stroke-width="1"/><rect x="1125" y="787" width="8" height="1.5" fill="#ddd"/><rect x="1135.5" y="787.5" width="7" height="7" fill="#ff0000" stroke="#ddd" stroke-width="1"/><rect x="1146.5" y="794.5" width="7" height="15" fill="#ff0000" stroke="#ddd" stroke-width="1"/><rect x="1157.5" y="809.5" width="7" height="14" fill="#ff0000" stroke="#ddd" stroke-width="1"/><rect x="1167.5" y="823.5" width="7" height="7" fill="#ff0000" stroke="#ddd" stroke-width="1"/><rect x="1178" y="830" width="8" height="1.5" fill="#ddd"/><rect x="1189" y="830" width="8" height="1.5" fill="#ddd"/><rect x="1200.5" y="829.5" width="7" height="2" fill="#00ff00" stroke="#ddd" stroke-width="1"/><rect x="1210.5" y="826.5" width="7" height="3" fill="#00ff00" stroke="#ddd" stroke-width="1"/><rect x="1221.5" y="821.5" width="7" height="5" fill="#00ff00" stroke="#ddd" stroke-width="1"/><rect x="1232.5" y="812.5" width="7" height="9" fill="#00ff00" stroke="#ddd" stroke-width="1"/><rect x="1243.5" y="801.5" width="7" height="11" fill="#00ff00" stroke="#ddd" stroke-width="1"/><rect x="1253.5" y="793.5" width="7" height="8" fill="#00ff00" stroke="#ddd" stroke-width="1"/><rect x="1264.5" y="790.5" width="7" height="3" fill="#00ff00" stroke="#ddd" stroke-width="1"/><rect x="1275.5" y="787.5" width="7" height="3" fill="#00ff00" stroke="#ddd" stroke-width="1"/><rect x="1285" y="787" width="8" height="1.5" fill="#ddd"/><rect x="1296" y="787" width="8" height="1.5" fill="#ddd"/><rect x="1307.5" y="787.5" width="7" height="6" fill="#ff0000" stroke="#ddd" stroke-width="1"/><rect x="1318.5" y="793.5" width="7" height="6" fill="#ff0000" stroke="#ddd" stroke-width="1"/><rect x="1328.5" y="799.5" width="7" height="5" fill="#ff0000" stroke="#ddd" stroke-width="1"/><rect x="1339" y="804" width="8" height="1.5" fill="#ddd"/><rect x="1350.5" y="802.5" width="7" height="2" fill="#00ff00" stroke="#ddd" stroke-width="1"/><rect x="1361.5" y="795.5" width="7" height="7" fill="#00ff00" stroke="#ddd" stroke-width="1"/><rect x="1371.5" y="789.5" width="7" height="6" fill="#00ff00" stroke="#ddd" stroke-width="1"/><rect x="1382.5" y="784.5" width="7" height="5" fill="#00ff00" stroke="#ddd" stroke-width="1"/><rect x="1393.5" y="779.5" width="7" height="5" fill="#00ff00" stroke="#ddd" stroke-width="1"/><rect x="1403.5" y="775.5" width="7" height="4" fill="#00ff00" stroke="#ddd" stroke-width="1"/><rect x="1414.5" y="769.5" width="7" height="6" fill="#00ff00" stroke="#ddd" stroke-width="1"/><rect x="1425.5" y="762.5" width="7" height="7" fill="#00ff00" stroke="#ddd" stroke-width="1"/><rect x="1436.5" y="756.5" width="7" height="6" fill="#00ff00" stroke="#ddd" stroke-width="1"/><rect x="1446.5" y="753.5" width="7" height="3" fill="#00ff00" stroke="#ddd" stroke-width="1"/><rect x="1457" y="753" width="8" height="1.5" fill="#ddd"/><rect x="1468.5" y="753.5" width="7" height="6" fill="#ff0000" stroke="#ddd" stroke-width="1"/><rect x="1478.5" y="759.5" width="7" height="5" fill="#ff0000" stroke="#ddd" stroke-width="1"/><rect x="1489.5" y="764.5" width="7" height="5" fill="#ff0000" stroke="#ddd" stroke-width="1"/><rect x="1500.5" y="769.5" width="7" height="3" fill="#ff0000" stroke="#ddd" stroke-width="1"/><rect x="1511.5" y="772.5" width="7" height="6" fill="#ff0000" stroke="#ddd" stroke-width="1"/><rect x="1521.5" y="778.5" width="7" height="6" fill="#ff0000" stroke="#ddd" stroke-width="1"/><rect x="1532.5" y="784.5" width="7" height="5" fill="#ff0000" stroke="#ddd" stroke-width="1"/><rect x="1543.5" y="789.5" width="7" height="6" fill="#ff0000" stroke="#ddd" stroke-width="1"/><rect x="1554.5" y="795.5" width="7" height="4" fill="#ff0000" stroke="#ddd" stroke-width="1"/><rect x="1564.5" y="799.5" width="7" height="3" fill="#ff0000" stroke="#ddd" stroke-width="1"/><rect x="1575.5" y="802.5" width="7" height="4" fill="#ff0000" stroke="#ddd" stroke-width="1"/></g>
<g shape-rendering="crispEdges"><rect x="7" y="661" width="1858" height="1" fill="#8c8c8c"/><rect x="1804" y="101" width="1" height="894" fill="#8c8c8c"/></g>
<rect x="35" y="106" width="231" height="96" rx="8" fill="#000"/>
<text x="60" y="145" font-size="38" fill="#ffff00" textLength="186" lengthAdjust="spacingAndGlyphs">3S-SYSTEM</text>
<text x="79" y="179.5" font-size="16.5" fill="#ffff00" textLength="106" lengthAdjust="spacingAndGlyphs">Version 10.0.0</text>
<rect x="7" y="662" width="146" height="16" fill="#272727"/><text x="11" y="674.5" font-size="12" fill="#fff" textLength="137.5" lengthAdjust="spacingAndGlyphs">3S-SYSTEM SPI indicator</text>
<polygon points="1805,462.5 1813,455 1865,455 1865,471 1813,471" fill="#ff0000"/>
<text x="1817.5" y="467.5" font-size="12" fill="#000">1,041.36</text></svg>
<div id="sheet"><div class="nb" style="left:1px"></div><div class="nb" style="left:17px"></div><div class="nb" style="left:33px"></div><div class="nb" style="left:49px"></div><svg style="left:1px;top:0px" width="64" height="17" viewBox="0 0 64 17"><path d="M4 4v9" stroke="#8a8a8a" stroke-width="1.300"/><path d="M12 4v9l-6-4.500z" fill="#8a8a8a"/><path d="M27 4v9l-6-4.500z" fill="#8a8a8a"/><path d="M37 4v9l6-4.500z" fill="#000"/><path d="M52 4v9l6-4.500z" fill="#000"/><path d="M60 4v9" stroke="#000" stroke-width="1.300"/></svg><svg style="left:0px;top:0px" width="440" height="17" viewBox="0 0 440 17"><path d="M63.8 0L71.3 15.500H96.5L104 0" fill="#f0f0f0" stroke="#9a9a9a" stroke-width="1"/><path d="M178.2 0L185.7 15.500H211.8L219.3 0" fill="#f0f0f0" stroke="#9a9a9a" stroke-width="1"/><path d="M212.7 0L220.2 15.500H246.8L254.3 0" fill="#f0f0f0" stroke="#9a9a9a" stroke-width="1"/><path d="M247.2 0L254.7 15.500H283.3L290.8 0" fill="#f0f0f0" stroke="#9a9a9a" stroke-width="1"/><path d="M283.8 0L291.3 15.500H318.0L325.5 0" fill="#f0f0f0" stroke="#9a9a9a" stroke-width="1"/><path d="M314.7 0L322.2 15.500H352.3L359.8 0" fill="#f0f0f0" stroke="#9a9a9a" stroke-width="1"/><path d="M352.2 0L359.7 15.500H408.5L416 0" fill="#f0f0f0" stroke="#9a9a9a" stroke-width="1"/><path d="M100.5 0H182L174.5 16H108.0z" fill="#000"/></svg><span style="left:76px;top:1px;font-size:12px;color:#666;letter-spacing:-1.005px">ABS</span><span style="left:112px;top:1px;font-size:12px;font-weight:700;color:#fff;letter-spacing:-0.096px">RAINBOW</span><span style="left:186px;top:1px;font-size:12px;color:#666;letter-spacing:-0.448px">AMF</span><span style="left:225px;top:1px;font-size:12px;color:#666;letter-spacing:-1.557px">KDJ</span><span style="left:259px;top:1px;font-size:12px;color:#666;letter-spacing:-1.042px">VAP</span><span style="left:296px;top:1px;font-size:12px;color:#666;letter-spacing:-1.224px">FIB</span><span style="left:327px;top:1px;font-size:12px;color:#666;letter-spacing:-1.115px">OBS</span><span style="left:364px;top:1px;font-size:12px;color:#666;letter-spacing:-0.469px">COMBO</span><div style="left:421px;top:0;width:17px;height:17px;border:1px solid #b8b8b8;border-left:none;background:#f4f4f4"></div><div style="left:438px;top:0;width:17px;height:17px;border:1px solid #b8b8b8;border-left:none;background:#f4f4f4"></div><div style="left:455px;top:0;width:17px;height:17px;border:1px solid #b8b8b8;border-left:none;background:#f4f4f4"></div><svg style="left:424px;top:2px" width="12" height="13" viewBox="0 0 12 13"><rect x="2" y="6" width="8" height="6" fill="#000"/><path d="M4 6v-2.500a2 2 0 0 1 4 0" fill="none" stroke="#000" stroke-width="1.200"/></svg><svg style="left:441px;top:6px" width="6" height="6" viewBox="0 0 6 6"><path d="M0 5l2.500-4 2.500 4z" fill="#000"/></svg><span style="left:446px;top:1px;font-size:11px;font-weight:700;font-family:'Liberation Mono',monospace">S</span><svg style="left:459px;top:6px" width="6" height="6" viewBox="0 0 6 6"><path d="M0 5l2.500-4 2.500 4z" fill="#000"/></svg><span style="left:464px;top:1px;font-size:11px;font-weight:700;font-family:'Liberation Mono',monospace">I</span><svg style="left:476px;top:3px" width="8" height="11" viewBox="0 0 8 11"><path d="M6.500 1.500l-4.500 4 4.500 4" fill="none" stroke="#444" stroke-width="1.800"/></svg><div style="left:1800px;top:1px;width:41px;height:15px;background:#cdcdcd"></div><svg style="left:1846px;top:3px" width="8" height="11" viewBox="0 0 8 11"><path d="M1.500 1.500l4.500 4-4.500 4" fill="none" stroke="#444" stroke-width="1.800"/></svg></div>
<div id="rside"><div class="vtb" style="top:7px;height:394px"><div class="hg" style="top:3px"></div><div class="hl" style="left:1px;top:7px;width:23px;height:23px"></div><div class="ov" style="top:383px"></div></div><div class="vtb" style="top:413px;height:176px"><div class="hg" style="top:4px"></div><div class="hl" style="left:1px;top:97px;width:23px;height:23px"></div><div class="ov" style="top:165px"></div></div><div class="vtb" style="top:590px;height:199px"><div class="hg" style="top:4px"></div><div class="ov" style="top:188px"></div></div><svg style="left:4px;top:18px" width="16" height="16" viewBox="0 0 16 16"><path d="M2 2l11 4-4 1.500 5 5.500-2 1.500-4.500-5.500-2.500 3.500z" fill="#e00000" stroke="#400000" stroke-width=".6"/></svg><svg style="left:4px;top:40px" width="16" height="16" viewBox="0 0 16 16"><path d="M3 13l10-10" stroke="#000" fill="none" stroke-width="1.200"/><rect x="1.500" y="11.500" width="3" height="3" fill="#fff" stroke="#000"/><rect x="11.500" y="1.500" width="3" height="3" fill="#fff" stroke="#000"/></svg><svg style="left:4px;top:62px" width="16" height="16" viewBox="0 0 16 16"><path d="M1 14l14-12" stroke="#000" fill="none" stroke-width="1.200"/><rect x="3.500" y="9.500" width="3" height="3" fill="#fff" stroke="#000"/></svg><svg style="left:4px;top:84px" width="16" height="16" viewBox="0 0 16 16"><path d="M1 15l14-13" stroke="#000" fill="none" stroke-width="1.200"/><rect x="3.500" y="10.500" width="3" height="3" fill="#fff" stroke="#000"/><rect x="9.500" y="4.500" width="3" height="3" fill="#fff" stroke="#000"/></svg><svg style="left:4px;top:107px" width="16" height="16" viewBox="0 0 16 16"><path d="M8 2v12" stroke="#000" fill="none" stroke-width="1.400"/><rect x="6.500" y="0.500" width="3" height="3" fill="#fff" stroke="#000"/><rect x="6.500" y="12.500" width="3" height="3" fill="#fff" stroke="#000"/></svg><svg style="left:4px;top:128px" width="16" height="16" viewBox="0 0 16 16"><path d="M1 8h14" stroke="#000" fill="none" stroke-width="1.400"/><rect x="0.500" y="6.500" width="3" height="3" fill="#fff" stroke="#000"/><rect x="12.500" y="6.500" width="3" height="3" fill="#fff" stroke="#000"/></svg><svg style="left:4px;top:150px" width="16" height="16" viewBox="0 0 16 16"><path d="M1 12l11-9M5 14l11-9" stroke="#000" fill="none" stroke-width="1.200"/></svg><svg style="left:4px;top:172px" width="16" height="16" viewBox="0 0 16 16"><path d="M1 12l13-8M2 15l13-8M4 13l2-7M8 12l2-7M12 9l1.500-6" stroke="#000" fill="none" stroke-width="1.100"/></svg><svg style="left:4px;top:195px" width="16" height="16" viewBox="0 0 16 16"><rect x="2" y="3" width="12" height="9" stroke="#000" fill="none" stroke-width="1.300"/></svg><svg style="left:4px;top:217px" width="16" height="16" viewBox="0 0 16 16"><ellipse cx="8" cy="8" rx="6.500" ry="4.500" stroke="#000" fill="none" stroke-width="1.300"/></svg><span style="left:2px;top:239px;font-size:11.5px;font-weight:700;font-family:'Liberation Serif',serif;letter-spacing:-0.3px">abc</span><svg style="left:4px;top:260px" width="16" height="16" viewBox="0 0 16 16"><path d="M2.500 13.500l7-11 4 11z" stroke="#000" fill="none" stroke-width="1.200"/></svg><svg style="left:4px;top:282px" width="16" height="16" viewBox="0 0 16 16"><path d="M2 9l12-6M2 12l12-5M4 6l8 7M2 7l5 4" stroke="#000" fill="none" stroke-width="1.100"/></svg><svg style="left:4px;top:303px" width="16" height="16" viewBox="0 0 16 16"><path d="M2 13c0-9 12-9 12-2" stroke="#000" fill="none" stroke-width="1.300"/></svg><svg style="left:4px;top:326px" width="16" height="16" viewBox="0 0 16 16"><path d="M2 3v11M8 3v11M14 3v11M2 8.500h12" stroke="#000" fill="none" stroke-width="1.200" stroke-dasharray="3 1"/></svg><svg style="left:4px;top:348px" width="16" height="16" viewBox="0 0 16 16"><path d="M1 14l6-7v4l8-9" stroke="#000" fill="none" stroke-width="1.300"/></svg><svg style="left:4px;top:370px" width="16" height="16" viewBox="0 0 16 16"><path d="M3 13l7-7" stroke="#000" fill="none" stroke-width="1.300"/><path d="M8 3.500l5.500-1-1 5.500z" fill="#000"/><rect x="1.500" y="11.500" width="3" height="3" fill="#fff" stroke="#000"/></svg><svg style="left:13px;top:392px" width="9" height="8" viewBox="0 0 9 8"><path d="M1 0.500v7" stroke="#1e1e30" stroke-width="1.300"/><path d="M3.500 0.500v7l4-3.500z" fill="#1e1e30"/></svg><svg style="left:13px;top:580px" width="9" height="8" viewBox="0 0 9 8"><path d="M1 0.500v7" stroke="#1e1e30" stroke-width="1.300"/><path d="M3.500 0.500v7l4-3.500z" fill="#1e1e30"/></svg><svg style="left:13px;top:779.5px" width="9" height="8" viewBox="0 0 9 8"><path d="M1 0.500v7" stroke="#1e1e30" stroke-width="1.300"/><path d="M3.500 0.500v7l4-3.500z" fill="#1e1e30"/></svg><svg style="left:4px;top:426px" width="16" height="16" viewBox="0 0 16 16"><circle cx="7" cy="7" r="5.500" fill="#00e000" stroke="#000" stroke-width="1.300"/><path d="M4 7h6M7 4v6" stroke="#000" stroke-width="1.600"/><path d="M11 11l4 4" stroke="#888" stroke-width="1.500"/></svg><svg style="left:4px;top:448px" width="16" height="16" viewBox="0 0 16 16"><circle cx="7" cy="7" r="5.500" fill="#f0e000" stroke="#000" stroke-width="1.300"/><path d="M4 7h6" stroke="#000" stroke-width="1.600"/><path d="M11 11l4 4" stroke="#888" stroke-width="1.500"/></svg><span style="left:10px;top:469px;font-size:12px;font-weight:700;font-style:italic;color:#8a8a8a">i</span><span style="left:9px;top:491px;font-size:12px;font-weight:700;font-style:italic;color:#8a8a8a">h</span><span style="left:8px;top:513px;font-size:13px;font-weight:700;font-style:italic;color:#000">d</span><span style="left:7px;top:535px;font-size:13px;font-weight:700;font-style:italic;color:#000">w</span><span style="left:6px;top:558px;font-size:13px;font-weight:700;font-style:italic;color:#000">m</span><svg style="left:4px;top:603px" width="16" height="16" viewBox="0 0 16 16"><path d="M1 4h14M1 8h14M1 12h14" stroke="#777" stroke-width="1.100" fill="none"/></svg><svg style="left:4px;top:626px" width="16" height="16" viewBox="0 0 16 16"><path d="M2 2v12M4.500 2v12M7 2v12M10.500 2v12M14 2v12" stroke="#000" fill="none" stroke-width="1.100"/></svg><svg style="left:4px;top:648px" width="16" height="16" viewBox="0 0 16 16"><path d="M2 14l12-11M2 14l12-7M2 14l12-3" stroke="#000" fill="none" stroke-width="1.100"/></svg><svg style="left:4px;top:670px" width="16" height="16" viewBox="0 0 16 16"><path d="M2 13a6 6 0 0 1 12 0M4.500 13a3.500 3.500 0 0 1 7 0M0 13a8 8 0 0 1 16 0" stroke="#000" fill="none" stroke-width="1.100"/></svg><svg style="left:4px;top:691.5px" width="16" height="16" viewBox="0 0 16 16"><rect x="1.500" y="2.500" width="13" height="11" stroke="#000" fill="none" stroke-width="1.300"/><path d="M1.500 8h13M6 2.500v11M10.500 2.500v11" stroke="#000" fill="none" stroke-width="1.100"/></svg><svg style="left:4px;top:713.5px" width="16" height="16" viewBox="0 0 16 16"><path d="M2 14l12-12M2 14l12-7M2 14l5-12M2 14h12" stroke="#000" fill="none" stroke-width="1.100"/></svg><svg style="left:4px;top:735.5px" width="16" height="16" viewBox="0 0 16 16"><path d="M2 14l6-6h7M8 2h7M8 4h7M8 6h7" stroke="#000" fill="none" stroke-width="1.100"/></svg><svg style="left:4px;top:757px" width="16" height="16" viewBox="0 0 16 16"><path d="M2 2v12M2 8h5M7 2v12M9.500 2v12M12 2v12M14.500 2v12" stroke="#000" fill="none" stroke-width="1.100"/></svg></div><div class="vtab" style="top:80px;height:57px"><span style="left:15px;top:6px;font-size:12px;letter-spacing:-0.002px">Symbols</span></div><div class="vtab" style="top:139px;height:46px"><span style="left:15px;top:6px;font-size:12px;letter-spacing:-0.057px">Charts</span></div>
<div id="status"><span style="left:3px;top:11px;font-size:12px;letter-spacing:-0.354px">For Help, press F1</span><span style="left:1509px;top:11px;font-size:12px;letter-spacing:-1.172px">X:</span><i style="left:1523px"></i><span style="left:1529px;top:11px;font-size:12px;letter-spacing:-0.844px">Y:</span><i style="left:1543px"></i><span style="left:1549px;top:11px;font-size:12px;letter-spacing:-0.182px">Indices, Group 0, Services, Advertising</span><i style="left:1753px"></i><span style="left:1758px;top:11px;font-size:12px;letter-spacing:-1.005px">EOD</span><i style="left:1785px"></i><div style="left:1789px;top:9px;width:46px;height:17px;background:#00ff00"></div><span style="left:1792px;top:11px;font-size:12px;color:#000;letter-spacing:-0.576px">DataPro</span><span style="left:1848px;top:11px;font-size:12px;letter-spacing:-0.676px">298%</span><i style="left:1887px"></i><span style="left:1893px;top:11px;font-size:12px;color:#66769a;letter-spacing:-1.229px">CAP</span></div>
<div id="task"><svg style="left:16px;top:12px" width="16" height="16" viewBox="0 0 16 16"><path d="M0 2.300l6.500-.9v6.100h-6.500zM7.500 1.300l8.500-1.300v7.500h-8.500zM0 8.500h6.500v6.100l-6.500-.9zM7.500 8.500h8.500v7.500l-8.500-1.300z" fill="#fff"/></svg><div style="left:48px;top:0;width:288px;height:40px;background:#f2f2f2"></div><svg style="left:60px;top:11px" width="18" height="18" viewBox="0 0 18 18"><circle cx="10.500" cy="7" r="5" fill="none" stroke="#222" stroke-width="1.400"/><path d="M7 10.500l-5.500 5.500" stroke="#222" stroke-width="1.500"/></svg><span style="left:88px;top:11px;font-size:15px;color:#2b2b2b;letter-spacing:-0.188px">Type here to search</span><svg style="left:262px;top:0px" width="74" height="40" viewBox="0 0 74 40"><path d="M20 40c0-24 10-33 30-35c14 0 24 6 24 12v23z" fill="#8fb36a"/><path d="M30 40c0-16 6-24 16-26c12 0 18 10 18 26z" fill="#c9b78c"/><path d="M36 40v-10c0-8 14-8 14 0v10z" fill="#3b3026"/><ellipse cx="14" cy="31" rx="5.500" ry="7" fill="#b98545"/><ellipse cx="24" cy="34" rx="5" ry="6" fill="#a97535"/><ellipse cx="17" cy="22" rx="4.500" ry="5.500" fill="#c99555"/></svg><svg style="left:351px;top:11px" width="20" height="18" viewBox="0 0 20 18"><rect x="1" y="4" width="11" height="10" fill="none" stroke="#fff" stroke-width="1.300"/><path d="M15 4v10M1 1.500h3M9 1.500h3M1 16.500h3M9 16.500h3" stroke="#fff" stroke-width="1.300"/><rect x="17" y="6" width="2" height="2" fill="#fff"/><rect x="17" y="11" width="2" height="2" fill="#fff"/></svg><div style="left:730px;top:0;width:48px;height:40px;background:#a8652c"></div><div style="left:730px;top:38px;width:48px;height:2px;background:#f0741c"></div><div style="left:779px;top:0;width:48px;height:40px;background:#4b5560"></div><div class="ul" style="left:390px"></div><div class="ul" style="left:488px"></div><div class="ul" style="left:537px"></div><div class="ul" style="left:587px"></div><div class="ul" style="left:635px"></div><div class="ul" style="left:685px"></div><div class="ul" style="left:783px"></div><div class="ul" style="left:831px"></div><div class="ul" style="left:880px"></div><div class="ul" style="left:929px"></div><div class="ul" style="left:978px"></div><svg style="left:399px;top:9px" width="22" height="20" viewBox="0 0 22 20"><path d="M1 4h8l2 2h10v3h-20z" fill="#e8a820"/><rect x="1" y="7" width="20" height="12" fill="#f8d060"/><rect x="7" y="13" width="8" height="6" fill="#3a8ee0"/></svg><svg style="left:448px;top:8px" width="24" height="24" viewBox="0 0 24 24"><path d="M12 1a11 11 0 1 0 9 17c-4 2-9 1-10-4c0-3 3-5 6-5h5a11 11 0 0 0-10-8z" fill="#1e88d8"/><path d="M3 15c0-7 6-10 11-9c4 1 6 4 6 6h-5c-3 0-6 2-6 5c-3 0-6-1-6-2z" fill="#35c0b0" opacity=".85"/></svg><svg style="left:495px;top:9px" width="26" height="22" viewBox="0 0 26 22"><path d="M1 11c5-8 19-8 24 0c-5 8-19 8-24 0z" fill="none" stroke="#d01828" stroke-width="2"/><circle cx="13" cy="11" r="6.500" fill="#d01828"/><circle cx="13" cy="11" r="3" fill="#fff"/><path d="M17 6l5-4" stroke="#d01828" stroke-width="2"/></svg><svg style="left:545px;top:8px" width="24" height="24" viewBox="0 0 24 24"><circle cx="12" cy="13" r="10.500" fill="#ff7a18"/><circle cx="12" cy="13.500" r="6.500" fill="#6a3ad8"/><path d="M3 8c1-5 6-8 10-7c-1 2 0 3 2 4c4 1 7 4 6 9c-1-4-4-5-7-5c-4 0-5 3-9 2c-2-1-2-2-2-3z" fill="#ffb020"/></svg><svg style="left:595px;top:8px" width="24" height="24" viewBox="0 0 24 24"><circle cx="11" cy="12" r="10.500" fill="#e8e8e8"/><path d="M11 1.500a10.500 10.500 0 0 1 9.100 5.300h-9.100a5.200 5.200 0 0 0-4.800 3.200l-3.600-5.600a10.500 10.500 0 0 1 8.400-2.900z" fill="#e03828"/><path d="M20.100 6.800a10.500 10.500 0 0 1-8.500 15.700l4.400-7.500a5.200 5.200 0 0 0-.5-8.200z" fill="#f8c820"/><path d="M2.600 4.400l4.400 7.800a5.200 5.200 0 0 0 6.500 4.500l-1.900 5.800a10.500 10.500 0 0 1-9-18.100z" fill="#30a050"/><circle cx="11" cy="12" r="4.200" fill="#3a78e8" stroke="#fff" stroke-width="1.200"/><circle cx="17.500" cy="17.500" r="6" fill="#e8641c"/></svg><svg style="left:643px;top:8px" width="24" height="24" viewBox="0 0 24 24"><circle cx="11" cy="12" r="10.500" fill="#e8e8e8"/><path d="M11 1.500a10.500 10.500 0 0 1 9.100 5.300h-9.100a5.200 5.200 0 0 0-4.800 3.200l-3.600-5.600a10.500 10.500 0 0 1 8.400-2.900z" fill="#e03828"/><path d="M20.100 6.800a10.500 10.500 0 0 1-8.500 15.700l4.400-7.500a5.200 5.200 0 0 0-.5-8.200z" fill="#f8c820"/><path d="M2.600 4.400l4.400 7.800a5.200 5.200 0 0 0 6.500 4.500l-1.900 5.800a10.500 10.500 0 0 1-9-18.100z" fill="#30a050"/><circle cx="11" cy="12" r="4.200" fill="#3a78e8" stroke="#fff" stroke-width="1.200"/><circle cx="17.500" cy="17.500" r="6" fill="#d8d0c0"/></svg><span style="left:609px;top:20px;font-size:9px;font-weight:700;color:#fff">H</span><svg style="left:693px;top:9px" width="24" height="22" viewBox="0 0 24 22"><rect x="0" y="2" width="14" height="18" fill="#1d7044"/><rect x="13" y="4" width="10" height="14" fill="#fff" stroke="#1d7044"/><path d="M13 8h10M13 11h10M13 14h10M18 4v14" stroke="#1d7044"/><path d="M3.500 6.500l6 9M9.500 6.500l-6 9" stroke="#fff" stroke-width="2"/></svg><svg style="left:742px;top:8px" width="26" height="26" viewBox="0 0 26 26"><circle cx="11" cy="11" r="10" fill="#18a8e8"/><circle cx="16" cy="16" r="7" fill="#18a8e8"/><path d="M14.500 7.500c-2-2-7-1-6.500 2c.5 2.500 6 1.500 6.500 4.500c.5 3-5 3.500-7 1" stroke="#fff" stroke-width="2.200" fill="none"/><circle cx="19" cy="19" r="6" fill="#e83838"/></svg><span style="left:758.500px;top:22px;font-size:9px;font-weight:700;color:#fff">1</span><svg style="left:791px;top:8px" width="24" height="24" viewBox="0 0 24 24"><path d="M12 1L1 20l2.500 3h17l2.500-3z" fill="#181818"/><path d="M12 3.500L3 20h5l4-8z" fill="#4a7be0"/><path d="M12 3.500l9 16.500h-5l-4-8z" fill="#e0306a"/><path d="M3 20l1.500 2h15l1.500-2z" fill="#f5d020"/><path d="M12 12l-3 6.500h6z" fill="#222c38"/><path d="M12 3.500l-2.500 4.500 2.500 4 2.500-4z" fill="#9a50d8"/></svg><svg style="left:839px;top:8px" width="24" height="24" viewBox="0 0 24 24"><path d="M12 1L1 20l2.500 3h17l2.500-3z" fill="#181818"/><path d="M12 3.500L3 20h5l4-8z" fill="#4a7be0"/><path d="M12 3.500l9 16.500h-5l-4-8z" fill="#e0306a"/><path d="M3 20l1.500 2h15l1.500-2z" fill="#f5d020"/><path d="M12 12l-3 6.500h6z" fill="#222c38"/><path d="M12 3.500l-2.500 4.500 2.500 4 2.500-4z" fill="#9a50d8"/></svg><svg style="left:888px;top:8px" width="24" height="24" viewBox="0 0 24 24"><circle cx="12" cy="12" r="12" fill="#fff"/></svg><span style="left:889px;top:13px;font-size:10px;font-weight:700;font-style:italic;color:#1a3a9a;letter-spacing:-0.6px">SH</span><span style="left:902px;top:16px;font-size:6px;font-weight:700;color:#e87818">pro</span><svg style="left:937px;top:9px" width="24" height="22" viewBox="0 0 24 22"><rect x="10" y="1" width="13" height="20" fill="#fff" stroke="#2a5699"/><path d="M14 5h7M14 8h7M14 11h7M14 14h7M14 17h7" stroke="#2a5699"/><rect x="0" y="3" width="14" height="16" fill="#2a5699"/><path d="M2.500 7l2 8 2.500-7 2.500 7 2-8" stroke="#fff" stroke-width="1.500" fill="none"/></svg><svg style="left:986px;top:8px" width="24" height="24" viewBox="0 0 24 24"><path d="M4 0h16a4 4 0 0 1 4 4v13a4 4 0 0 1-4 4h-11l-5 3v-3a4 4 0 0 1-4-4v-13a4 4 0 0 1 4-4z" fill="#fff"/></svg><span style="left:988px;top:13px;font-size:9px;font-weight:700;color:#0a68f0;letter-spacing:-0.4px">Zalo</span><svg style="left:1506px;top:9px" width="26" height="24" viewBox="0 0 26 24"><circle cx="14" cy="12" r="8" fill="#f8a010"/><path d="M3 8a4 4 0 0 1 7-2a3.500 3.500 0 0 1 4 3.500h-11z" fill="#d0dcea"/><path d="M12 20a3.500 3.500 0 0 1 6-2a3 3 0 0 1 4 3h-10z" fill="#c8d4e4"/></svg><span style="left:1539px;top:11px;font-size:15px;color:#fff;letter-spacing:-1.379px">30°C</span><span style="left:1578px;top:11px;font-size:15px;color:#fff;letter-spacing:-0.642px">Nắng rải rác</span><svg style="left:1676px;top:15px" width="13" height="9" viewBox="0 0 13 9"><path d="M1 7.500l5.500-5.500 5.500 5.500" fill="none" stroke="#fff" stroke-width="1.400"/></svg><svg style="left:1699px;top:11px" width="16" height="18" viewBox="0 0 16 18"><rect x="2" y="4" width="8" height="9" rx="2" fill="none" stroke="#fff" stroke-width="1.200"/><path d="M10 7l4-2v7l-4-2M2 2.500a4 4 0 0 1 8 0M2 15a4 4 0 0 0 8 0" fill="none" stroke="#fff" stroke-width="1.100"/></svg><svg style="left:1722px;top:12px" width="18" height="16" viewBox="0 0 18 16"><rect x="4" y="1" width="13" height="9" fill="none" stroke="#fff" stroke-width="1.300"/><path d="M10.500 10v3M6 14h9" stroke="#fff" stroke-width="1.300"/><rect x="0.500" y="3" width="4" height="8" fill="#202a35" stroke="#fff" stroke-width="1.100"/></svg><svg style="left:1746px;top:12px" width="20" height="16" viewBox="0 0 20 16"><path d="M1 5.500h3l4-3.500v12l-4-3.500h-3z" fill="none" stroke="#fff" stroke-width="1.200"/><path d="M10.500 5.500a3.500 3.500 0 0 1 0 5M13 3.500a6.500 6.500 0 0 1 0 9M15.500 1.500a9.500 9.500 0 0 1 0 13" fill="none" stroke="#fff" stroke-width="1.100"/></svg><span style="left:1773px;top:13px;font-size:12px;color:#fff;letter-spacing:-1.005px">ENG</span><span style="left:1814px;top:4px;font-size:12px;color:#fff;letter-spacing:-0.259px">3:11 PM</span><span style="left:1809px;top:22px;font-size:12px;color:#fff;letter-spacing:-0.155px">4/24/2023</span><svg style="left:1878px;top:9px" width="24" height="24" viewBox="0 0 24 24"><path d="M2 2h16v12h-10l-3 3v-3h-3z" fill="#fff"/><path d="M5 5.500h10M5 8h10M5 10.500h7" stroke="#202a35" stroke-width="1.100"/><circle cx="16" cy="16" r="6" fill="#202a35" stroke="#fff" stroke-width="1.200"/></svg><span style="left:1891.500px;top:19px;font-size:10px;color:#fff">1</span><div style="left:1915px;top:0;width:1px;height:40px;background:#5a6470"></div></div>
</body></html>
